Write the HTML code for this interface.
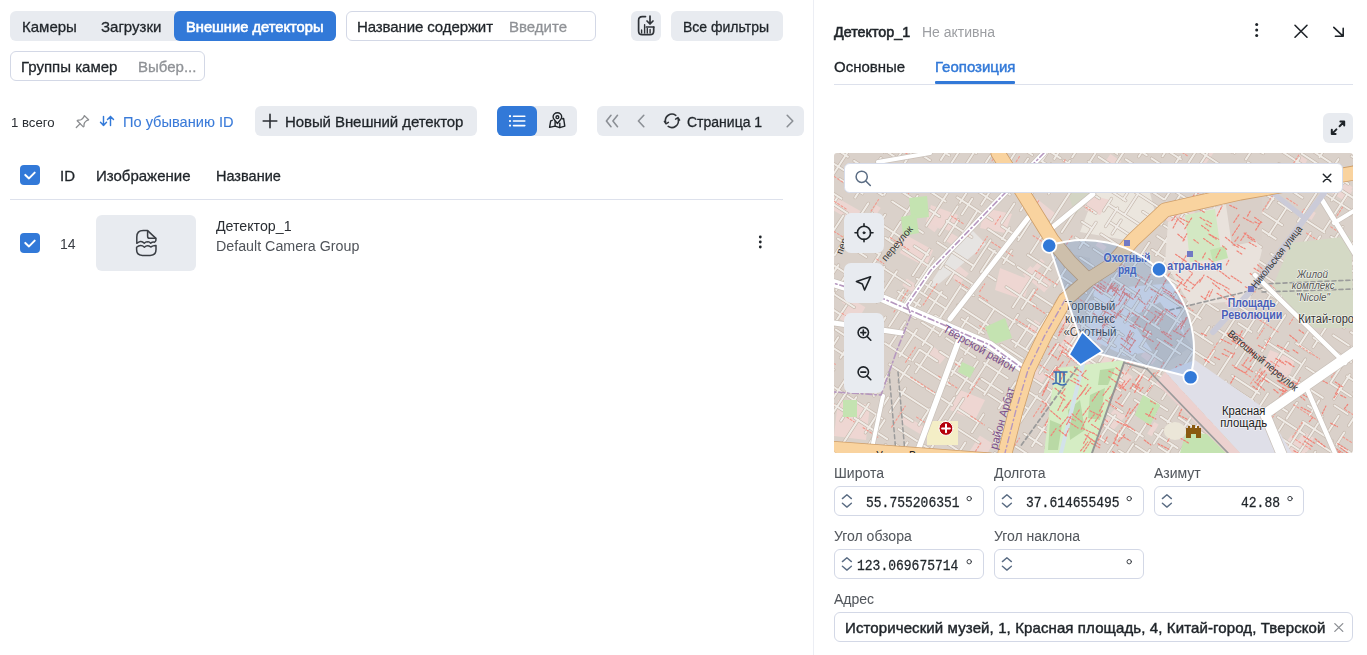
<!DOCTYPE html>
<html><head><meta charset="utf-8">
<style>
*{box-sizing:border-box;margin:0;padding:0}
html,body{width:1367px;height:655px;overflow:hidden;background:#fff}
body{position:relative;font-family:"Liberation Sans",sans-serif;color:#1f2429}
.a{position:absolute}
.t{position:absolute;white-space:pre;line-height:20px;font-size:15px;-webkit-text-stroke:0.3px currentColor;will-change:transform}
.s14{font-size:14px}
.s13{font-size:13px}
.ns{-webkit-text-stroke:0}
.g{background:#e8ebf0;border-radius:6px}
.bl{background:#3279d8}
.inp{position:absolute;border:1px solid #d3d8e6;border-radius:6px;background:#fff}
.gray{color:#8f9296}
.lbl{color:#53575d;font-size:14px;-webkit-text-stroke:0.05px currentColor}
.mono{position:absolute;white-space:pre;font-family:"Liberation Mono",monospace;font-size:13px;line-height:20px;color:#1f2429;-webkit-text-stroke:0.25px currentColor;will-change:transform;transform:scaleY(1.12);transform-origin:0 13px}
svg{position:absolute;overflow:visible}
</style></head><body>

<!-- LEFT PANE -->
<div class="a g" style="left:10px;top:11px;width:326px;height:30px"></div>
<div class="a bl" style="left:174px;top:11px;width:162px;height:30px;border-radius:6px"></div>
<div class="t" style="left:22px;top:17px">Камеры</div>
<div class="t" style="left:101px;top:17px">Загрузки</div>
<div class="t" style="left:185.5px;top:17px;color:#fff;font-size:14.7px;-webkit-text-stroke:0.6px #fff">Внешние детекторы</div>

<div class="inp" style="left:346px;top:11px;width:250px;height:30px"></div>
<div class="t" style="left:357px;top:17px;letter-spacing:-0.1px">Название содержит</div>
<div class="t gray" style="left:509px;top:17px">Введите</div>

<div class="a g" style="left:631px;top:11px;width:30px;height:30px"></div>
<div class="a g" style="left:671px;top:11px;width:112px;height:30px"></div>
<div class="t s14" style="left:683px;top:17px">Все фильтры</div>

<div class="inp" style="left:10px;top:51px;width:195px;height:30px"></div>
<div class="t" style="left:21px;top:57px">Группы камер</div>
<div class="t gray" style="left:138px;top:57px">Выбер...</div>

<div class="t s13 ns" style="left:11px;top:112.5px;color:#2a2e33;font-size:13.2px">1 всего</div>
<div class="t ns" style="left:122.5px;top:112px;font-size:14.6px;color:#3a7bd9;-webkit-text-stroke:0.1px currentColor">По убыванию ID</div>

<div class="a g" style="left:255px;top:106px;width:222px;height:30px"></div>
<div class="t" style="left:285px;top:112px;letter-spacing:-0.08px">Новый Внешний детектор</div>

<div class="a g" style="left:497px;top:106px;width:80px;height:30px"></div>
<div class="a bl" style="left:497px;top:106px;width:40px;height:30px;border-radius:6px"></div>

<div class="a g" style="left:597px;top:106px;width:207px;height:30px"></div>
<div class="t s14" style="left:687px;top:112px">Страница 1</div>

<!-- table -->
<div class="a bl" style="left:20px;top:165px;width:20px;height:20px;border-radius:4px"></div>
<div class="t" style="left:60px;top:166px">ID</div>
<div class="t" style="left:96px;top:166px">Изображение</div>
<div class="t" style="left:216px;top:166px;font-size:14.5px">Название</div>
<div class="a" style="left:10px;top:199px;width:773px;height:1px;background:#dde1ec"></div>

<div class="a bl" style="left:20px;top:233px;width:20px;height:20px;border-radius:4px"></div>
<div class="t s14 ns" style="left:60px;top:234px;color:#3a3e44">14</div>
<div class="a g" style="left:96px;top:215px;width:100px;height:56px"></div>
<div class="t s14 ns" style="left:216px;top:215.5px;color:#2a2e33;font-size:14.2px">Детектор_1</div>
<div class="t s14 ns" style="left:216px;top:236px;color:#4f5359;font-size:14.25px">Default Camera Group</div>

<!-- divider -->
<div class="a" style="left:813px;top:0;width:1px;height:655px;background:#eceef4"></div>

<!-- RIGHT PANE -->
<div class="t" style="left:834px;top:22px;font-size:14.3px;-webkit-text-stroke:0.6px currentColor">Детектор_1</div>
<div class="t s14 gray ns" style="left:922px;top:22px;color:#9c9ea2">Не активна</div>
<div class="t" style="left:834px;top:57px">Основные</div>
<div class="t" style="left:935px;top:57px;color:#3279d8;-webkit-text-stroke:0.45px currentColor">Геопозиция</div>
<div class="a bl" style="left:935px;top:81px;width:80px;height:3px;border-radius:1px"></div>
<div class="a" style="left:834px;top:84px;width:519px;height:1px;background:#dde1ec"></div>
<div class="a g" style="left:1323px;top:113px;width:30px;height:30px"></div>

<!-- MAP placeholder -->
<!-- MAP START -->
<svg width="519" height="300" viewBox="834 153 519 300" style="left:834px;top:153px" stroke-linecap="round" stroke-linejoin="round">
<defs><clipPath id="mc"><rect x="834" y="153" width="519" height="300" rx="3"/></clipPath></defs>
<g clip-path="url(#mc)">
<rect x="834" y="153" width="519" height="300" fill="#dad1ca"/>
<polygon points="1059.5,308.9 1083.8,323.5 1078.0,333.0 1053.8,318.3" fill="#ecd6d2"/>
<polygon points="1090.5,351.3 1103.5,329.4 1108.9,332.6 1095.9,354.5" fill="#ecd6d2"/>
<polygon points="1101.6,424.3 1115.9,407.6 1125.6,415.9 1111.3,432.6" fill="#ecd6d2"/>
<polygon points="1169.7,332.6 1179.7,338.3 1177.1,342.8 1167.1,337.1" fill="#ecd6d2"/>
<polygon points="925.7,225.8 930.8,218.8 939.7,225.3 934.6,232.3" fill="#ecd6d2"/>
<polygon points="930.8,216.9 942.8,225.1 939.9,229.3 928.0,221.1" fill="#ecd6d2"/>
<polygon points="963.6,460.6 979.8,435.4 993.2,444.0 977.0,469.2" fill="#ecd6d2"/>
<polygon points="944.3,240.1 949.1,231.8 962.1,239.4 957.2,247.6" fill="#ecd6d2"/>
<polygon points="985.0,164.9 992.2,169.3 984.9,181.2 977.8,176.8" fill="#ecd6d2"/>
<polygon points="1297.4,281.2 1321.4,298.5 1315.4,306.8 1291.5,289.5" fill="#ecd6d2"/>
<polygon points="934.1,347.0 945.8,357.0 939.9,363.9 928.2,353.9" fill="#ecd6d2"/>
<polygon points="1223.7,182.0 1234.7,189.6 1231.2,194.8 1220.1,187.2" fill="#ecd6d2"/>
<polygon points="1084.9,349.4 1094.9,356.2 1088.4,365.8 1078.4,359.0" fill="#ecd6d2"/>
<polygon points="1021.5,281.1 1041.0,258.6 1044.8,261.9 1025.3,284.3" fill="#ecd6d2"/>
<polygon points="834.3,196.2 860.4,211.0 854.0,222.1 828.0,207.4" fill="#ecd6d2"/>
<polygon points="902.3,285.3 906.8,278.5 917.6,285.6 913.1,292.5" fill="#ecd6d2"/>
<polygon points="864.3,223.4 876.4,205.0 880.8,207.9 868.7,226.2" fill="#ecd6d2"/>
<polygon points="1059.1,445.5 1068.7,429.5 1079.4,436.0 1069.7,451.9" fill="#ecd6d2"/>
<polygon points="905.0,415.3 927.3,428.7 923.0,435.7 900.7,422.4" fill="#ecd6d2"/>
<polygon points="1149.6,325.5 1163.2,306.9 1171.3,312.8 1157.7,331.5" fill="#ecd6d2"/>
<polygon points="1054.6,174.5 1061.6,180.0 1050.9,193.8 1043.9,188.3" fill="#ecd6d2"/>
<polygon points="1030.3,265.9 1051.6,283.9 1044.2,292.6 1022.9,274.6" fill="#ecd6d2"/>
<polygon points="1336.9,180.3 1352.6,190.2 1345.4,201.6 1329.7,191.7" fill="#ecd6d2"/>
<polygon points="1304.3,215.5 1308.7,208.4 1315.9,212.9 1311.5,220.0" fill="#ecd6d2"/>
<polygon points="854.8,224.8 871.3,235.6 861.6,250.4 845.1,239.6" fill="#ecd6d2"/>
<polygon points="1291.4,434.9 1309.6,448.1 1301.4,459.4 1283.2,446.2" fill="#ecd6d2"/>
<polygon points="1308.6,287.6 1322.5,295.4 1318.1,303.3 1304.2,295.5" fill="#ecd6d2"/>
<polygon points="1156.0,287.7 1176.9,299.7 1172.3,307.6 1151.5,295.6" fill="#ecd6d2"/>
<polygon points="1111.1,359.7 1132.8,377.1 1123.8,388.5 1102.0,371.1" fill="#ecd6d2"/>
<polygon points="1295.1,261.9 1310.0,244.3 1322.7,255.2 1307.8,272.8" fill="#ecd6d2"/>
<polygon points="841.8,302.3 846.6,295.6 857.7,303.6 852.8,310.3" fill="#ecd6d2"/>
<polygon points="1136.2,180.3 1149.7,162.9 1163.8,173.8 1150.3,191.3" fill="#ecd6d2"/>
<polygon points="1030.2,363.1 1047.2,375.1 1041.0,383.9 1024.0,371.9" fill="#ecd6d2"/>
<polygon points="1098.5,241.1 1106.6,246.7 1103.6,251.1 1095.5,245.4" fill="#ecd6d2"/>
<polygon points="1147.2,433.7 1154.2,422.0 1158.6,424.6 1151.7,436.3" fill="#ecd6d2"/>
<polygon points="1140.6,315.9 1154.7,295.7 1162.4,301.2 1148.3,321.3" fill="#ecd6d2"/>
<polygon points="958.3,265.0 968.8,273.6 960.3,283.8 949.9,275.2" fill="#ecd6d2"/>
<polygon points="1026.6,332.3 1034.8,319.8 1040.4,323.5 1032.2,336.0" fill="#ecd6d2"/>
<polygon points="1299.3,155.1 1307.4,159.9 1298.4,175.2 1290.3,170.4" fill="#ecd6d2"/>
<polygon points="1066.7,438.2 1082.6,417.2 1090.5,423.2 1074.7,444.2" fill="#ecd6d2"/>
<polygon points="1199.0,395.9 1217.4,407.5 1212.5,415.3 1194.1,403.6" fill="#ecd6d2"/>
<polygon points="1146.5,348.4 1157.9,356.9 1152.1,364.6 1140.8,356.1" fill="#ecd6d2"/>
<polygon points="1037.2,198.9 1056.7,214.4 1051.4,221.1 1031.9,205.5" fill="#ecd6d2"/>
<polygon points="1336.8,187.7 1343.5,179.8 1352.6,187.5 1345.9,195.4" fill="#ecd6d2"/>
<polygon points="1184.2,204.2 1198.8,215.6 1194.3,221.4 1179.7,210.0" fill="#ecd6d2"/>
<polygon points="1110.4,154.0 1121.2,161.2 1112.8,173.7 1102.0,166.5" fill="#ecd6d2"/>
<polygon points="1235.1,424.8 1240.2,416.2 1254.9,425.0 1249.9,433.5" fill="#ecd6d2"/>
<polygon points="1057.4,349.4 1073.3,326.3 1081.4,331.9 1065.5,355.0" fill="#ecd6d2"/>
<polygon points="1166.0,201.6 1186.3,214.1 1178.1,227.4 1157.8,214.9" fill="#ecd6d2"/>
<polygon points="1288.2,456.5 1303.9,431.5 1314.0,437.8 1298.3,462.8" fill="#ecd6d2"/>
<polygon points="1199.0,163.9 1210.1,148.3 1214.6,151.5 1203.4,167.1" fill="#ecd6d2"/>
<polygon points="1233.5,290.4 1240.6,295.2 1231.9,308.1 1224.8,303.2" fill="#ecd6d2"/>
<polygon points="839.0,318.5 850.9,298.7 865.4,307.3 853.6,327.2" fill="#ecd6d2"/>
<polygon points="1088.7,376.7 1104.2,355.3 1115.5,363.4 1100.0,384.9" fill="#ecd6d2"/>
<polygon points="1188.0,370.2 1202.4,380.4 1195.3,390.5 1180.9,380.3" fill="#ecd6d2"/>
<path d="M1068 193L1095 193L1075 215Z" fill="#d3d5c4"/>
<path d="M1095 193L1150 193L1155 212L1125 240L1080 232Z" fill="#ebe6de"/>
<path d="M968 226L986 244L940 283L926 290Z" fill="#e6e4e2"/>
<path d="M906 235L933 250L926 267L900 253Z" fill="#eed6d2"/>
<path d="M931 205L958 215L952 232L926 222Z" fill="#eed6d2"/>
<path d="M985 208L1012 214L1005 233L980 228Z" fill="#eed6d2"/>
<path d="M838 400L870 405L866 440L834 436Z" fill="#eed6d2"/>
<path d="M1000 268L1030 280L1024 300L995 290Z" fill="#eed6d2"/>
<path d="M960 390L985 400L975 420L950 410Z" fill="#eed6d2"/>
<path d="M1090 195L1110 200L1100 215L1085 210Z" fill="#eed6d2"/>
<path d="M1270 350L1295 360L1288 380L1262 370Z" fill="#eed6d2"/>
<path d="M1090 290L1175 283L1186 345L1125 356L1085 336Z" fill="#e6e4ea"/>
<path d="M1130 318L1160 302L1192 346L1162 366Z" fill="#d3cbc4"/>
<path d="M1062 252L1090 258L1094 300L1066 305Z" fill="#d3cbc4"/>
<path d="M797.1 126.1L811.6 103.8" stroke="#c4b6ab" stroke-width="3.2" fill="none"/>
<path d="M803.9 135.8L825.4 102.7" stroke="#c4b6ab" stroke-width="3.2" fill="none"/>
<path d="M818.3 133.1L835.7 106.4" stroke="#c4b6ab" stroke-width="3.2" fill="none"/>
<path d="M795.7 185.6L806.5 168.9" stroke="#c4b6ab" stroke-width="3.2" fill="none"/>
<path d="M815.8 154.7L824.3 141.5" stroke="#c4b6ab" stroke-width="3.2" fill="none"/>
<path d="M828.4 135.1L851.8 99.2" stroke="#c4b6ab" stroke-width="3.2" fill="none"/>
<path d="M808.7 181.8L827.5 152.8" stroke="#c4b6ab" stroke-width="3.2" fill="none"/>
<path d="M829.6 149.5L840.5 132.8" stroke="#c4b6ab" stroke-width="3.2" fill="none"/>
<path d="M846.0 124.3L859.5 103.6" stroke="#c4b6ab" stroke-width="3.2" fill="none"/>
<path d="M832.6 175.4L849.4 149.5" stroke="#c4b6ab" stroke-width="3.2" fill="none"/>
<path d="M867.8 121.3L873.8 112.0" stroke="#c4b6ab" stroke-width="3.2" fill="none"/>
<path d="M811.4 237.5L822.2 220.8" stroke="#c4b6ab" stroke-width="3.2" fill="none"/>
<path d="M824.7 217.0L836.9 198.2" stroke="#c4b6ab" stroke-width="3.2" fill="none"/>
<path d="M868.4 149.7L879.1 133.2" stroke="#c4b6ab" stroke-width="3.2" fill="none"/>
<path d="M799.0 283.9L821.7 249.0" stroke="#c4b6ab" stroke-width="3.2" fill="none"/>
<path d="M826.4 241.7L843.4 215.5" stroke="#c4b6ab" stroke-width="3.2" fill="none"/>
<path d="M855.1 197.6L861.1 188.3" stroke="#c4b6ab" stroke-width="3.2" fill="none"/>
<path d="M863.9 183.9L880.9 157.8" stroke="#c4b6ab" stroke-width="3.2" fill="none"/>
<path d="M884.4 152.4L901.2 126.6" stroke="#c4b6ab" stroke-width="3.2" fill="none"/>
<path d="M909.5 113.7L928.8 84.0" stroke="#c4b6ab" stroke-width="3.2" fill="none"/>
<path d="M805.5 300.1L825.4 269.4" stroke="#c4b6ab" stroke-width="3.2" fill="none"/>
<path d="M834.5 255.4L842.2 243.5" stroke="#c4b6ab" stroke-width="3.2" fill="none"/>
<path d="M848.8 233.4L868.3 203.4" stroke="#c4b6ab" stroke-width="3.2" fill="none"/>
<path d="M879.4 186.2L890.4 169.3" stroke="#c4b6ab" stroke-width="3.2" fill="none"/>
<path d="M897.2 158.8L917.7 127.3" stroke="#c4b6ab" stroke-width="3.2" fill="none"/>
<path d="M925.3 115.6L937.2 97.3" stroke="#c4b6ab" stroke-width="3.2" fill="none"/>
<path d="M830.2 277.7L838.5 265.0" stroke="#c4b6ab" stroke-width="3.2" fill="none"/>
<path d="M848.2 250.0L872.2 213.1" stroke="#c4b6ab" stroke-width="3.2" fill="none"/>
<path d="M884.1 194.7L897.6 174.0" stroke="#c4b6ab" stroke-width="3.2" fill="none"/>
<path d="M902.0 167.1L912.9 150.3" stroke="#c4b6ab" stroke-width="3.2" fill="none"/>
<path d="M921.4 137.2L930.1 123.9" stroke="#c4b6ab" stroke-width="3.2" fill="none"/>
<path d="M819.2 316.1L834.2 293.0" stroke="#c4b6ab" stroke-width="3.2" fill="none"/>
<path d="M836.2 289.9L848.3 271.4" stroke="#c4b6ab" stroke-width="3.2" fill="none"/>
<path d="M872.5 233.9L885.1 214.7" stroke="#c4b6ab" stroke-width="3.2" fill="none"/>
<path d="M941.5 127.8L948.4 117.1" stroke="#c4b6ab" stroke-width="3.2" fill="none"/>
<path d="M809.2 362.6L816.8 350.9" stroke="#c4b6ab" stroke-width="3.2" fill="none"/>
<path d="M819.1 347.4L826.3 336.3" stroke="#c4b6ab" stroke-width="3.2" fill="none"/>
<path d="M828.6 332.7L846.5 305.3" stroke="#c4b6ab" stroke-width="3.2" fill="none"/>
<path d="M857.3 288.5L864.1 278.1" stroke="#c4b6ab" stroke-width="3.2" fill="none"/>
<path d="M872.4 265.4L880.1 253.4" stroke="#c4b6ab" stroke-width="3.2" fill="none"/>
<path d="M889.6 238.9L900.7 221.7" stroke="#c4b6ab" stroke-width="3.2" fill="none"/>
<path d="M902.4 219.2L917.6 195.7" stroke="#c4b6ab" stroke-width="3.2" fill="none"/>
<path d="M928.6 178.8L937.0 165.8" stroke="#c4b6ab" stroke-width="3.2" fill="none"/>
<path d="M940.9 159.9L964.4 123.7" stroke="#c4b6ab" stroke-width="3.2" fill="none"/>
<path d="M968.1 117.9L980.3 99.2" stroke="#c4b6ab" stroke-width="3.2" fill="none"/>
<path d="M799.2 397.6L809.6 381.6" stroke="#c4b6ab" stroke-width="3.2" fill="none"/>
<path d="M815.5 372.5L822.8 361.3" stroke="#c4b6ab" stroke-width="3.2" fill="none"/>
<path d="M825.1 357.8L838.3 337.3" stroke="#c4b6ab" stroke-width="3.2" fill="none"/>
<path d="M863.7 298.4L884.2 266.8" stroke="#c4b6ab" stroke-width="3.2" fill="none"/>
<path d="M895.1 250.0L902.5 238.5" stroke="#c4b6ab" stroke-width="3.2" fill="none"/>
<path d="M908.4 229.4L914.4 220.2" stroke="#c4b6ab" stroke-width="3.2" fill="none"/>
<path d="M936.3 186.5L959.8 150.3" stroke="#c4b6ab" stroke-width="3.2" fill="none"/>
<path d="M966.3 140.4L986.4 109.4" stroke="#c4b6ab" stroke-width="3.2" fill="none"/>
<path d="M823.1 384.7L831.7 371.5" stroke="#c4b6ab" stroke-width="3.2" fill="none"/>
<path d="M840.5 357.8L857.0 332.4" stroke="#c4b6ab" stroke-width="3.2" fill="none"/>
<path d="M861.3 325.9L867.7 316.0" stroke="#c4b6ab" stroke-width="3.2" fill="none"/>
<path d="M876.8 302.0L896.8 271.2" stroke="#c4b6ab" stroke-width="3.2" fill="none"/>
<path d="M926.3 225.8L949.2 190.4" stroke="#c4b6ab" stroke-width="3.2" fill="none"/>
<path d="M953.8 183.4L975.9 149.3" stroke="#c4b6ab" stroke-width="3.2" fill="none"/>
<path d="M979.0 144.7L992.3 124.1" stroke="#c4b6ab" stroke-width="3.2" fill="none"/>
<path d="M800.4 448.4L821.7 415.7" stroke="#c4b6ab" stroke-width="3.2" fill="none"/>
<path d="M830.1 402.8L847.8 375.5" stroke="#c4b6ab" stroke-width="3.2" fill="none"/>
<path d="M851.8 369.3L857.4 360.6" stroke="#c4b6ab" stroke-width="3.2" fill="none"/>
<path d="M865.9 347.7L885.5 317.4" stroke="#c4b6ab" stroke-width="3.2" fill="none"/>
<path d="M892.3 306.9L903.6 289.5" stroke="#c4b6ab" stroke-width="3.2" fill="none"/>
<path d="M912.9 275.3L929.7 249.4" stroke="#c4b6ab" stroke-width="3.2" fill="none"/>
<path d="M939.2 234.8L957.7 206.3" stroke="#c4b6ab" stroke-width="3.2" fill="none"/>
<path d="M960.0 202.8L981.4 169.7" stroke="#c4b6ab" stroke-width="3.2" fill="none"/>
<path d="M984.6 164.8L990.3 156.0" stroke="#c4b6ab" stroke-width="3.2" fill="none"/>
<path d="M999.9 141.3L1014.1 119.5" stroke="#c4b6ab" stroke-width="3.2" fill="none"/>
<path d="M797.6 467.5L810.7 447.3" stroke="#c4b6ab" stroke-width="3.2" fill="none"/>
<path d="M817.0 437.6L823.0 428.5" stroke="#c4b6ab" stroke-width="3.2" fill="none"/>
<path d="M829.3 418.7L848.0 389.9" stroke="#c4b6ab" stroke-width="3.2" fill="none"/>
<path d="M889.2 326.5L909.7 294.9" stroke="#c4b6ab" stroke-width="3.2" fill="none"/>
<path d="M915.7 285.7L933.7 258.0" stroke="#c4b6ab" stroke-width="3.2" fill="none"/>
<path d="M944.4 241.4L958.3 220.0" stroke="#c4b6ab" stroke-width="3.2" fill="none"/>
<path d="M961.9 214.5L972.2 198.7" stroke="#c4b6ab" stroke-width="3.2" fill="none"/>
<path d="M980.8 185.4L990.0 171.3" stroke="#c4b6ab" stroke-width="3.2" fill="none"/>
<path d="M997.1 160.3L1009.5 141.2" stroke="#c4b6ab" stroke-width="3.2" fill="none"/>
<path d="M1012.1 137.2L1024.5 118.2" stroke="#c4b6ab" stroke-width="3.2" fill="none"/>
<path d="M1027.6 113.3L1033.2 104.8" stroke="#c4b6ab" stroke-width="3.2" fill="none"/>
<path d="M798.9 485.6L810.5 467.8" stroke="#c4b6ab" stroke-width="3.2" fill="none"/>
<path d="M821.0 451.6L832.3 434.2" stroke="#c4b6ab" stroke-width="3.2" fill="none"/>
<path d="M841.0 420.8L856.3 397.2" stroke="#c4b6ab" stroke-width="3.2" fill="none"/>
<path d="M858.8 393.4L881.7 358.1" stroke="#c4b6ab" stroke-width="3.2" fill="none"/>
<path d="M889.9 345.5L905.2 322.0" stroke="#c4b6ab" stroke-width="3.2" fill="none"/>
<path d="M911.6 312.0L920.0 299.2" stroke="#c4b6ab" stroke-width="3.2" fill="none"/>
<path d="M924.5 292.2L931.3 281.8" stroke="#c4b6ab" stroke-width="3.2" fill="none"/>
<path d="M939.9 268.5L950.9 251.6" stroke="#c4b6ab" stroke-width="3.2" fill="none"/>
<path d="M953.5 247.6L976.7 211.9" stroke="#c4b6ab" stroke-width="3.2" fill="none"/>
<path d="M981.3 204.7L993.3 186.2" stroke="#c4b6ab" stroke-width="3.2" fill="none"/>
<path d="M1004.8 168.6L1016.7 150.2" stroke="#c4b6ab" stroke-width="3.2" fill="none"/>
<path d="M1037.4 118.3L1049.1 100.3" stroke="#c4b6ab" stroke-width="3.2" fill="none"/>
<path d="M825.2 470.9L832.2 460.1" stroke="#c4b6ab" stroke-width="3.2" fill="none"/>
<path d="M840.3 447.6L858.3 419.9" stroke="#c4b6ab" stroke-width="3.2" fill="none"/>
<path d="M860.3 416.9L868.8 403.7" stroke="#c4b6ab" stroke-width="3.2" fill="none"/>
<path d="M873.9 395.9L889.1 372.6" stroke="#c4b6ab" stroke-width="3.2" fill="none"/>
<path d="M899.5 356.4L916.8 329.9" stroke="#c4b6ab" stroke-width="3.2" fill="none"/>
<path d="M927.2 313.9L941.7 291.5" stroke="#c4b6ab" stroke-width="3.2" fill="none"/>
<path d="M946.6 283.9L954.2 272.3" stroke="#c4b6ab" stroke-width="3.2" fill="none"/>
<path d="M1020.1 170.7L1028.1 158.5" stroke="#c4b6ab" stroke-width="3.2" fill="none"/>
<path d="M1037.4 144.1L1051.6 122.3" stroke="#c4b6ab" stroke-width="3.2" fill="none"/>
<path d="M1056.1 115.3L1069.4 94.8" stroke="#c4b6ab" stroke-width="3.2" fill="none"/>
<path d="M830.4 486.8L841.7 469.3" stroke="#c4b6ab" stroke-width="3.2" fill="none"/>
<path d="M845.9 462.8L853.5 451.2" stroke="#c4b6ab" stroke-width="3.2" fill="none"/>
<path d="M865.4 432.8L888.4 397.4" stroke="#c4b6ab" stroke-width="3.2" fill="none"/>
<path d="M898.7 381.6L909.0 365.7" stroke="#c4b6ab" stroke-width="3.2" fill="none"/>
<path d="M912.4 360.5L919.1 350.2" stroke="#c4b6ab" stroke-width="3.2" fill="none"/>
<path d="M922.5 344.9L937.3 322.1" stroke="#c4b6ab" stroke-width="3.2" fill="none"/>
<path d="M939.1 319.4L960.7 286.1" stroke="#c4b6ab" stroke-width="3.2" fill="none"/>
<path d="M971.2 270.0L990.5 240.2" stroke="#c4b6ab" stroke-width="3.2" fill="none"/>
<path d="M1001.6 223.1L1014.4 203.5" stroke="#c4b6ab" stroke-width="3.2" fill="none"/>
<path d="M1021.9 191.8L1028.1 182.4" stroke="#c4b6ab" stroke-width="3.2" fill="none"/>
<path d="M1032.4 175.7L1040.1 163.8" stroke="#c4b6ab" stroke-width="3.2" fill="none"/>
<path d="M1042.6 160.0L1055.1 140.8" stroke="#c4b6ab" stroke-width="3.2" fill="none"/>
<path d="M1066.6 123.0L1088.0 90.1" stroke="#c4b6ab" stroke-width="3.2" fill="none"/>
<path d="M843.4 483.5L857.8 461.5" stroke="#c4b6ab" stroke-width="3.2" fill="none"/>
<path d="M865.0 450.3L884.6 420.1" stroke="#c4b6ab" stroke-width="3.2" fill="none"/>
<path d="M889.9 412.1L905.3 388.4" stroke="#c4b6ab" stroke-width="3.2" fill="none"/>
<path d="M915.6 372.5L931.7 347.7" stroke="#c4b6ab" stroke-width="3.2" fill="none"/>
<path d="M939.6 335.5L951.0 317.9" stroke="#c4b6ab" stroke-width="3.2" fill="none"/>
<path d="M955.5 311.0L972.4 285.0" stroke="#c4b6ab" stroke-width="3.2" fill="none"/>
<path d="M980.7 272.2L994.7 250.7" stroke="#c4b6ab" stroke-width="3.2" fill="none"/>
<path d="M1002.1 239.2L1009.5 227.9" stroke="#c4b6ab" stroke-width="3.2" fill="none"/>
<path d="M1020.7 210.5L1035.7 187.5" stroke="#c4b6ab" stroke-width="3.2" fill="none"/>
<path d="M1040.4 180.3L1051.0 164.0" stroke="#c4b6ab" stroke-width="3.2" fill="none"/>
<path d="M1054.3 158.9L1077.1 123.8" stroke="#c4b6ab" stroke-width="3.2" fill="none"/>
<path d="M1079.5 120.0L1098.2 91.2" stroke="#c4b6ab" stroke-width="3.2" fill="none"/>
<path d="M854.7 492.2L861.3 482.1" stroke="#c4b6ab" stroke-width="3.2" fill="none"/>
<path d="M870.7 467.5L885.6 444.7" stroke="#c4b6ab" stroke-width="3.2" fill="none"/>
<path d="M961.1 328.3L968.2 317.4" stroke="#c4b6ab" stroke-width="3.2" fill="none"/>
<path d="M1003.4 263.2L1011.7 250.5" stroke="#c4b6ab" stroke-width="3.2" fill="none"/>
<path d="M1018.3 240.2L1037.1 211.3" stroke="#c4b6ab" stroke-width="3.2" fill="none"/>
<path d="M1048.7 193.6L1069.9 160.8" stroke="#c4b6ab" stroke-width="3.2" fill="none"/>
<path d="M1072.2 157.3L1095.0 122.1" stroke="#c4b6ab" stroke-width="3.2" fill="none"/>
<path d="M876.6 490.2L884.4 478.3" stroke="#c4b6ab" stroke-width="3.2" fill="none"/>
<path d="M887.5 473.4L907.6 442.4" stroke="#c4b6ab" stroke-width="3.2" fill="none"/>
<path d="M919.0 424.9L929.2 409.2" stroke="#c4b6ab" stroke-width="3.2" fill="none"/>
<path d="M933.9 402.0L948.5 379.6" stroke="#c4b6ab" stroke-width="3.2" fill="none"/>
<path d="M951.3 375.2L961.9 358.9" stroke="#c4b6ab" stroke-width="3.2" fill="none"/>
<path d="M965.0 354.1L972.5 342.6" stroke="#c4b6ab" stroke-width="3.2" fill="none"/>
<path d="M978.6 333.1L994.4 308.8" stroke="#c4b6ab" stroke-width="3.2" fill="none"/>
<path d="M1030.7 253.0L1044.2 232.1" stroke="#c4b6ab" stroke-width="3.2" fill="none"/>
<path d="M1045.9 229.6L1070.2 192.1" stroke="#c4b6ab" stroke-width="3.2" fill="none"/>
<path d="M1079.2 178.2L1100.1 146.0" stroke="#c4b6ab" stroke-width="3.2" fill="none"/>
<path d="M898.0 484.4L914.4 459.0" stroke="#c4b6ab" stroke-width="3.2" fill="none"/>
<path d="M936.2 425.4L954.3 397.5" stroke="#c4b6ab" stroke-width="3.2" fill="none"/>
<path d="M956.5 394.2L977.9 361.3" stroke="#c4b6ab" stroke-width="3.2" fill="none"/>
<path d="M985.7 349.3L995.6 334.0" stroke="#c4b6ab" stroke-width="3.2" fill="none"/>
<path d="M1013.0 307.2L1035.7 272.3" stroke="#c4b6ab" stroke-width="3.2" fill="none"/>
<path d="M1061.8 232.0L1076.5 209.5" stroke="#c4b6ab" stroke-width="3.2" fill="none"/>
<path d="M1116.4 148.0L1137.8 115.1" stroke="#c4b6ab" stroke-width="3.2" fill="none"/>
<path d="M925.2 457.7L937.2 439.1" stroke="#c4b6ab" stroke-width="3.2" fill="none"/>
<path d="M943.2 430.0L963.5 398.7" stroke="#c4b6ab" stroke-width="3.2" fill="none"/>
<path d="M970.2 388.4L992.5 354.0" stroke="#c4b6ab" stroke-width="3.2" fill="none"/>
<path d="M1003.8 336.7L1018.0 314.8" stroke="#c4b6ab" stroke-width="3.2" fill="none"/>
<path d="M1021.9 308.8L1034.2 289.9" stroke="#c4b6ab" stroke-width="3.2" fill="none"/>
<path d="M1038.9 282.6L1055.9 256.4" stroke="#c4b6ab" stroke-width="3.2" fill="none"/>
<path d="M1111.3 171.1L1128.6 144.4" stroke="#c4b6ab" stroke-width="3.2" fill="none"/>
<path d="M1136.4 132.5L1155.4 103.2" stroke="#c4b6ab" stroke-width="3.2" fill="none"/>
<path d="M936.9 467.5L944.4 455.9" stroke="#c4b6ab" stroke-width="3.2" fill="none"/>
<path d="M984.2 394.6L1008.4 357.2" stroke="#c4b6ab" stroke-width="3.2" fill="none"/>
<path d="M1015.2 346.8L1029.6 324.6" stroke="#c4b6ab" stroke-width="3.2" fill="none"/>
<path d="M1054.4 286.4L1069.9 262.6" stroke="#c4b6ab" stroke-width="3.2" fill="none"/>
<path d="M1079.3 248.1L1096.0 222.4" stroke="#c4b6ab" stroke-width="3.2" fill="none"/>
<path d="M1103.6 210.8L1111.5 198.5" stroke="#c4b6ab" stroke-width="3.2" fill="none"/>
<path d="M1120.7 184.4L1128.6 172.2" stroke="#c4b6ab" stroke-width="3.2" fill="none"/>
<path d="M1138.7 156.7L1158.7 125.9" stroke="#c4b6ab" stroke-width="3.2" fill="none"/>
<path d="M1164.3 117.2L1184.2 86.5" stroke="#c4b6ab" stroke-width="3.2" fill="none"/>
<path d="M933.3 491.9L942.0 478.5" stroke="#c4b6ab" stroke-width="3.2" fill="none"/>
<path d="M947.3 470.3L965.3 442.6" stroke="#c4b6ab" stroke-width="3.2" fill="none"/>
<path d="M972.0 432.3L983.6 414.3" stroke="#c4b6ab" stroke-width="3.2" fill="none"/>
<path d="M1026.5 348.4L1048.7 314.2" stroke="#c4b6ab" stroke-width="3.2" fill="none"/>
<path d="M1052.3 308.6L1067.9 284.5" stroke="#c4b6ab" stroke-width="3.2" fill="none"/>
<path d="M1105.6 226.5L1117.5 208.1" stroke="#c4b6ab" stroke-width="3.2" fill="none"/>
<path d="M1123.2 199.4L1141.7 171.0" stroke="#c4b6ab" stroke-width="3.2" fill="none"/>
<path d="M1155.9 149.1L1170.8 126.1" stroke="#c4b6ab" stroke-width="3.2" fill="none"/>
<path d="M998.8 408.5L1015.8 382.2" stroke="#c4b6ab" stroke-width="3.2" fill="none"/>
<path d="M1026.3 366.1L1038.9 346.6" stroke="#c4b6ab" stroke-width="3.2" fill="none"/>
<path d="M1041.7 342.3L1060.7 313.1" stroke="#c4b6ab" stroke-width="3.2" fill="none"/>
<path d="M1067.2 303.1L1079.6 284.0" stroke="#c4b6ab" stroke-width="3.2" fill="none"/>
<path d="M1112.2 233.8L1121.0 220.2" stroke="#c4b6ab" stroke-width="3.2" fill="none"/>
<path d="M1124.7 214.6L1137.5 194.8" stroke="#c4b6ab" stroke-width="3.2" fill="none"/>
<path d="M1144.1 184.7L1154.7 168.3" stroke="#c4b6ab" stroke-width="3.2" fill="none"/>
<path d="M1162.5 156.3L1172.2 141.5" stroke="#c4b6ab" stroke-width="3.2" fill="none"/>
<path d="M992.6 445.1L1006.9 423.1" stroke="#c4b6ab" stroke-width="3.2" fill="none"/>
<path d="M1039.5 373.0L1058.4 343.8" stroke="#c4b6ab" stroke-width="3.2" fill="none"/>
<path d="M1064.5 334.5L1075.0 318.2" stroke="#c4b6ab" stroke-width="3.2" fill="none"/>
<path d="M1081.0 309.0L1097.5 283.5" stroke="#c4b6ab" stroke-width="3.2" fill="none"/>
<path d="M1099.2 281.0L1121.7 246.4" stroke="#c4b6ab" stroke-width="3.2" fill="none"/>
<path d="M1159.6 188.0L1180.1 156.4" stroke="#c4b6ab" stroke-width="3.2" fill="none"/>
<path d="M1186.5 146.6L1209.8 110.6" stroke="#c4b6ab" stroke-width="3.2" fill="none"/>
<path d="M990.6 467.6L1013.4 432.5" stroke="#c4b6ab" stroke-width="3.2" fill="none"/>
<path d="M1019.6 423.0L1037.1 396.1" stroke="#c4b6ab" stroke-width="3.2" fill="none"/>
<path d="M1039.5 392.3L1056.0 366.9" stroke="#c4b6ab" stroke-width="3.2" fill="none"/>
<path d="M1065.8 351.8L1076.0 336.1" stroke="#c4b6ab" stroke-width="3.2" fill="none"/>
<path d="M1081.6 327.6L1095.0 306.9" stroke="#c4b6ab" stroke-width="3.2" fill="none"/>
<path d="M1106.2 289.6L1117.0 273.0" stroke="#c4b6ab" stroke-width="3.2" fill="none"/>
<path d="M1122.2 265.0L1130.7 251.9" stroke="#c4b6ab" stroke-width="3.2" fill="none"/>
<path d="M1164.9 199.2L1181.7 173.3" stroke="#c4b6ab" stroke-width="3.2" fill="none"/>
<path d="M1187.4 164.6L1203.4 139.9" stroke="#c4b6ab" stroke-width="3.2" fill="none"/>
<path d="M1206.9 134.6L1221.8 111.6" stroke="#c4b6ab" stroke-width="3.2" fill="none"/>
<path d="M989.3 488.8L1009.5 457.6" stroke="#c4b6ab" stroke-width="3.2" fill="none"/>
<path d="M1046.0 401.5L1062.8 375.6" stroke="#c4b6ab" stroke-width="3.2" fill="none"/>
<path d="M1073.7 358.8L1081.7 346.5" stroke="#c4b6ab" stroke-width="3.2" fill="none"/>
<path d="M1098.8 320.2L1121.8 284.7" stroke="#c4b6ab" stroke-width="3.2" fill="none"/>
<path d="M1130.2 271.8L1149.0 242.8" stroke="#c4b6ab" stroke-width="3.2" fill="none"/>
<path d="M1160.9 224.6L1180.0 195.2" stroke="#c4b6ab" stroke-width="3.2" fill="none"/>
<path d="M1186.1 185.7L1209.3 150.1" stroke="#c4b6ab" stroke-width="3.2" fill="none"/>
<path d="M1216.1 139.6L1224.3 127.0" stroke="#c4b6ab" stroke-width="3.2" fill="none"/>
<path d="M1005.7 486.8L1021.6 462.3" stroke="#c4b6ab" stroke-width="3.2" fill="none"/>
<path d="M1032.1 446.1L1054.5 411.6" stroke="#c4b6ab" stroke-width="3.2" fill="none"/>
<path d="M1058.7 405.2L1071.7 385.3" stroke="#c4b6ab" stroke-width="3.2" fill="none"/>
<path d="M1119.0 312.3L1130.7 294.4" stroke="#c4b6ab" stroke-width="3.2" fill="none"/>
<path d="M1156.0 255.4L1174.7 226.5" stroke="#c4b6ab" stroke-width="3.2" fill="none"/>
<path d="M1179.1 219.8L1196.3 193.3" stroke="#c4b6ab" stroke-width="3.2" fill="none"/>
<path d="M1201.7 184.9L1214.4 165.5" stroke="#c4b6ab" stroke-width="3.2" fill="none"/>
<path d="M1224.1 150.6L1245.2 118.0" stroke="#c4b6ab" stroke-width="3.2" fill="none"/>
<path d="M1054.8 429.7L1061.0 420.3" stroke="#c4b6ab" stroke-width="3.2" fill="none"/>
<path d="M1065.5 413.3L1079.4 391.9" stroke="#c4b6ab" stroke-width="3.2" fill="none"/>
<path d="M1090.0 375.6L1097.4 364.1" stroke="#c4b6ab" stroke-width="3.2" fill="none"/>
<path d="M1099.3 361.3L1118.6 331.6" stroke="#c4b6ab" stroke-width="3.2" fill="none"/>
<path d="M1124.9 321.9L1140.1 298.4" stroke="#c4b6ab" stroke-width="3.2" fill="none"/>
<path d="M1145.5 290.2L1151.7 280.6" stroke="#c4b6ab" stroke-width="3.2" fill="none"/>
<path d="M1163.2 262.9L1170.5 251.7" stroke="#c4b6ab" stroke-width="3.2" fill="none"/>
<path d="M1174.2 245.9L1189.3 222.6" stroke="#c4b6ab" stroke-width="3.2" fill="none"/>
<path d="M1198.7 208.2L1206.9 195.5" stroke="#c4b6ab" stroke-width="3.2" fill="none"/>
<path d="M1217.1 179.9L1225.2 167.4" stroke="#c4b6ab" stroke-width="3.2" fill="none"/>
<path d="M1234.5 153.0L1245.7 135.7" stroke="#c4b6ab" stroke-width="3.2" fill="none"/>
<path d="M1060.6 444.8L1077.9 418.0" stroke="#c4b6ab" stroke-width="3.2" fill="none"/>
<path d="M1084.7 407.6L1102.1 380.7" stroke="#c4b6ab" stroke-width="3.2" fill="none"/>
<path d="M1110.1 368.4L1132.8 333.5" stroke="#c4b6ab" stroke-width="3.2" fill="none"/>
<path d="M1143.6 316.9L1162.9 287.2" stroke="#c4b6ab" stroke-width="3.2" fill="none"/>
<path d="M1172.0 273.2L1186.8 250.4" stroke="#c4b6ab" stroke-width="3.2" fill="none"/>
<path d="M1191.1 243.7L1214.7 207.4" stroke="#c4b6ab" stroke-width="3.2" fill="none"/>
<path d="M1218.7 201.2L1240.1 168.3" stroke="#c4b6ab" stroke-width="3.2" fill="none"/>
<path d="M1245.9 159.4L1254.7 145.8" stroke="#c4b6ab" stroke-width="3.2" fill="none"/>
<path d="M1263.0 133.0L1275.2 114.2" stroke="#c4b6ab" stroke-width="3.2" fill="none"/>
<path d="M1054.8 478.6L1078.5 442.1" stroke="#c4b6ab" stroke-width="3.2" fill="none"/>
<path d="M1088.0 427.5L1107.2 397.9" stroke="#c4b6ab" stroke-width="3.2" fill="none"/>
<path d="M1110.1 393.5L1122.1 375.0" stroke="#c4b6ab" stroke-width="3.2" fill="none"/>
<path d="M1128.6 365.0L1135.4 354.5" stroke="#c4b6ab" stroke-width="3.2" fill="none"/>
<path d="M1141.5 345.1L1150.3 331.5" stroke="#c4b6ab" stroke-width="3.2" fill="none"/>
<path d="M1155.4 323.7L1161.3 314.7" stroke="#c4b6ab" stroke-width="3.2" fill="none"/>
<path d="M1173.0 296.7L1195.4 262.1" stroke="#c4b6ab" stroke-width="3.2" fill="none"/>
<path d="M1201.4 252.9L1215.0 231.9" stroke="#c4b6ab" stroke-width="3.2" fill="none"/>
<path d="M1221.9 221.3L1237.7 197.0" stroke="#c4b6ab" stroke-width="3.2" fill="none"/>
<path d="M1239.4 194.3L1258.4 165.1" stroke="#c4b6ab" stroke-width="3.2" fill="none"/>
<path d="M1268.8 149.1L1282.0 128.8" stroke="#c4b6ab" stroke-width="3.2" fill="none"/>
<path d="M1080.1 469.3L1092.2 450.7" stroke="#c4b6ab" stroke-width="3.2" fill="none"/>
<path d="M1100.4 438.0L1115.1 415.4" stroke="#c4b6ab" stroke-width="3.2" fill="none"/>
<path d="M1121.8 405.0L1129.7 392.9" stroke="#c4b6ab" stroke-width="3.2" fill="none"/>
<path d="M1136.1 383.1L1157.0 350.8" stroke="#c4b6ab" stroke-width="3.2" fill="none"/>
<path d="M1167.4 334.9L1191.2 298.1" stroke="#c4b6ab" stroke-width="3.2" fill="none"/>
<path d="M1194.9 292.5L1203.0 280.0" stroke="#c4b6ab" stroke-width="3.2" fill="none"/>
<path d="M1227.4 242.5L1236.8 227.9" stroke="#c4b6ab" stroke-width="3.2" fill="none"/>
<path d="M1240.9 221.7L1259.7 192.6" stroke="#c4b6ab" stroke-width="3.2" fill="none"/>
<path d="M1261.8 189.5L1277.3 165.6" stroke="#c4b6ab" stroke-width="3.2" fill="none"/>
<path d="M1090.5 479.7L1113.5 444.3" stroke="#c4b6ab" stroke-width="3.2" fill="none"/>
<path d="M1117.1 438.7L1134.3 412.2" stroke="#c4b6ab" stroke-width="3.2" fill="none"/>
<path d="M1144.0 397.3L1153.0 383.5" stroke="#c4b6ab" stroke-width="3.2" fill="none"/>
<path d="M1158.6 374.8L1182.5 338.1" stroke="#c4b6ab" stroke-width="3.2" fill="none"/>
<path d="M1190.8 325.2L1212.2 292.3" stroke="#c4b6ab" stroke-width="3.2" fill="none"/>
<path d="M1218.2 283.0L1239.6 250.1" stroke="#c4b6ab" stroke-width="3.2" fill="none"/>
<path d="M1248.7 236.1L1257.7 222.1" stroke="#c4b6ab" stroke-width="3.2" fill="none"/>
<path d="M1266.9 208.0L1277.4 191.8" stroke="#c4b6ab" stroke-width="3.2" fill="none"/>
<path d="M1281.7 185.3L1299.4 157.9" stroke="#c4b6ab" stroke-width="3.2" fill="none"/>
<path d="M1310.8 140.5L1325.4 117.9" stroke="#c4b6ab" stroke-width="3.2" fill="none"/>
<path d="M1120.1 464.0L1133.2 444.0" stroke="#c4b6ab" stroke-width="3.2" fill="none"/>
<path d="M1135.4 440.5L1156.6 407.9" stroke="#c4b6ab" stroke-width="3.2" fill="none"/>
<path d="M1162.2 399.2L1170.9 385.9" stroke="#c4b6ab" stroke-width="3.2" fill="none"/>
<path d="M1179.9 372.1L1192.7 352.4" stroke="#c4b6ab" stroke-width="3.2" fill="none"/>
<path d="M1202.3 337.5L1209.2 326.9" stroke="#c4b6ab" stroke-width="3.2" fill="none"/>
<path d="M1229.2 296.1L1244.3 272.8" stroke="#c4b6ab" stroke-width="3.2" fill="none"/>
<path d="M1268.8 235.1L1286.9 207.3" stroke="#c4b6ab" stroke-width="3.2" fill="none"/>
<path d="M1298.6 189.3L1305.3 178.9" stroke="#c4b6ab" stroke-width="3.2" fill="none"/>
<path d="M1319.5 157.1L1342.0 122.4" stroke="#c4b6ab" stroke-width="3.2" fill="none"/>
<path d="M1345.0 117.8L1369.2 80.6" stroke="#c4b6ab" stroke-width="3.2" fill="none"/>
<path d="M1134.3 473.6L1149.7 449.9" stroke="#c4b6ab" stroke-width="3.2" fill="none"/>
<path d="M1153.8 443.6L1162.9 429.6" stroke="#c4b6ab" stroke-width="3.2" fill="none"/>
<path d="M1167.5 422.4L1178.7 405.2" stroke="#c4b6ab" stroke-width="3.2" fill="none"/>
<path d="M1185.9 394.1L1193.6 382.2" stroke="#c4b6ab" stroke-width="3.2" fill="none"/>
<path d="M1204.5 365.4L1214.1 350.7" stroke="#c4b6ab" stroke-width="3.2" fill="none"/>
<path d="M1219.8 341.8L1239.5 311.5" stroke="#c4b6ab" stroke-width="3.2" fill="none"/>
<path d="M1250.5 294.6L1262.3 276.4" stroke="#c4b6ab" stroke-width="3.2" fill="none"/>
<path d="M1297.9 221.6L1319.2 188.8" stroke="#c4b6ab" stroke-width="3.2" fill="none"/>
<path d="M1327.5 176.0L1338.5 159.1" stroke="#c4b6ab" stroke-width="3.2" fill="none"/>
<path d="M1346.0 147.6L1369.3 111.7" stroke="#c4b6ab" stroke-width="3.2" fill="none"/>
<path d="M1166.3 455.0L1172.5 445.5" stroke="#c4b6ab" stroke-width="3.2" fill="none"/>
<path d="M1183.5 428.5L1204.4 396.4" stroke="#c4b6ab" stroke-width="3.2" fill="none"/>
<path d="M1210.7 386.7L1231.9 354.1" stroke="#c4b6ab" stroke-width="3.2" fill="none"/>
<path d="M1235.8 348.0L1255.6 317.5" stroke="#c4b6ab" stroke-width="3.2" fill="none"/>
<path d="M1266.3 301.0L1282.2 276.6" stroke="#c4b6ab" stroke-width="3.2" fill="none"/>
<path d="M1289.1 266.0L1310.6 232.9" stroke="#c4b6ab" stroke-width="3.2" fill="none"/>
<path d="M1331.6 200.5L1339.9 187.8" stroke="#c4b6ab" stroke-width="3.2" fill="none"/>
<path d="M1342.6 183.6L1354.7 165.0" stroke="#c4b6ab" stroke-width="3.2" fill="none"/>
<path d="M1356.6 162.0L1380.0 126.0" stroke="#c4b6ab" stroke-width="3.2" fill="none"/>
<path d="M1384.3 119.4L1393.8 104.8" stroke="#c4b6ab" stroke-width="3.2" fill="none"/>
<path d="M1177.0 456.8L1184.4 445.3" stroke="#c4b6ab" stroke-width="3.2" fill="none"/>
<path d="M1192.3 433.2L1203.3 416.3" stroke="#c4b6ab" stroke-width="3.2" fill="none"/>
<path d="M1205.9 412.3L1226.0 381.3" stroke="#c4b6ab" stroke-width="3.2" fill="none"/>
<path d="M1235.5 366.7L1247.1 348.8" stroke="#c4b6ab" stroke-width="3.2" fill="none"/>
<path d="M1258.2 331.7L1265.3 320.8" stroke="#c4b6ab" stroke-width="3.2" fill="none"/>
<path d="M1275.9 304.4L1289.9 282.9" stroke="#c4b6ab" stroke-width="3.2" fill="none"/>
<path d="M1298.7 269.3L1320.1 236.4" stroke="#c4b6ab" stroke-width="3.2" fill="none"/>
<path d="M1323.7 230.8L1346.7 195.4" stroke="#c4b6ab" stroke-width="3.2" fill="none"/>
<path d="M1185.5 468.8L1206.0 437.2" stroke="#c4b6ab" stroke-width="3.2" fill="none"/>
<path d="M1212.3 427.6L1224.4 408.9" stroke="#c4b6ab" stroke-width="3.2" fill="none"/>
<path d="M1250.5 368.7L1257.5 358.0" stroke="#c4b6ab" stroke-width="3.2" fill="none"/>
<path d="M1262.0 351.0L1285.3 315.1" stroke="#c4b6ab" stroke-width="3.2" fill="none"/>
<path d="M1294.1 301.6L1313.7 271.3" stroke="#c4b6ab" stroke-width="3.2" fill="none"/>
<path d="M1322.3 258.2L1342.7 226.7" stroke="#c4b6ab" stroke-width="3.2" fill="none"/>
<path d="M1350.1 215.4L1360.4 199.4" stroke="#c4b6ab" stroke-width="3.2" fill="none"/>
<path d="M1370.1 184.5L1377.4 173.3" stroke="#c4b6ab" stroke-width="3.2" fill="none"/>
<path d="M1385.5 160.8L1407.6 126.7" stroke="#c4b6ab" stroke-width="3.2" fill="none"/>
<path d="M1198.3 481.5L1207.6 467.1" stroke="#c4b6ab" stroke-width="3.2" fill="none"/>
<path d="M1218.8 449.8L1231.7 430.0" stroke="#c4b6ab" stroke-width="3.2" fill="none"/>
<path d="M1241.1 415.6L1264.1 380.2" stroke="#c4b6ab" stroke-width="3.2" fill="none"/>
<path d="M1274.3 364.4L1288.4 342.7" stroke="#c4b6ab" stroke-width="3.2" fill="none"/>
<path d="M1322.3 290.5L1336.7 268.3" stroke="#c4b6ab" stroke-width="3.2" fill="none"/>
<path d="M1347.3 252.0L1370.4 216.4" stroke="#c4b6ab" stroke-width="3.2" fill="none"/>
<path d="M1376.8 206.6L1382.9 197.1" stroke="#c4b6ab" stroke-width="3.2" fill="none"/>
<path d="M1212.2 479.4L1226.7 457.1" stroke="#c4b6ab" stroke-width="3.2" fill="none"/>
<path d="M1248.5 423.6L1268.0 393.4" stroke="#c4b6ab" stroke-width="3.2" fill="none"/>
<path d="M1299.6 344.9L1322.0 310.4" stroke="#c4b6ab" stroke-width="3.2" fill="none"/>
<path d="M1324.2 307.0L1332.6 294.1" stroke="#c4b6ab" stroke-width="3.2" fill="none"/>
<path d="M1342.0 279.6L1363.2 246.9" stroke="#c4b6ab" stroke-width="3.2" fill="none"/>
<path d="M1371.2 234.6L1394.7 198.5" stroke="#c4b6ab" stroke-width="3.2" fill="none"/>
<path d="M1223.5 485.3L1233.9 469.3" stroke="#c4b6ab" stroke-width="3.2" fill="none"/>
<path d="M1236.3 465.6L1251.6 442.1" stroke="#c4b6ab" stroke-width="3.2" fill="none"/>
<path d="M1261.5 426.8L1285.4 389.9" stroke="#c4b6ab" stroke-width="3.2" fill="none"/>
<path d="M1289.0 384.4L1305.4 359.2" stroke="#c4b6ab" stroke-width="3.2" fill="none"/>
<path d="M1313.2 347.2L1328.3 324.0" stroke="#c4b6ab" stroke-width="3.2" fill="none"/>
<path d="M1330.9 319.9L1351.5 288.2" stroke="#c4b6ab" stroke-width="3.2" fill="none"/>
<path d="M1353.9 284.5L1359.5 275.9" stroke="#c4b6ab" stroke-width="3.2" fill="none"/>
<path d="M1368.2 262.5L1379.3 245.4" stroke="#c4b6ab" stroke-width="3.2" fill="none"/>
<path d="M1381.8 241.5L1399.2 214.7" stroke="#c4b6ab" stroke-width="3.2" fill="none"/>
<path d="M1242.8 486.2L1252.8 470.7" stroke="#c4b6ab" stroke-width="3.2" fill="none"/>
<path d="M1255.5 466.6L1269.2 445.5" stroke="#c4b6ab" stroke-width="3.2" fill="none"/>
<path d="M1272.0 441.1L1283.6 423.3" stroke="#c4b6ab" stroke-width="3.2" fill="none"/>
<path d="M1286.7 418.6L1297.0 402.7" stroke="#c4b6ab" stroke-width="3.2" fill="none"/>
<path d="M1365.6 297.1L1385.1 267.0" stroke="#c4b6ab" stroke-width="3.2" fill="none"/>
<path d="M1284.6 453.6L1304.1 423.5" stroke="#c4b6ab" stroke-width="3.2" fill="none"/>
<path d="M1309.7 415.1L1319.2 400.4" stroke="#c4b6ab" stroke-width="3.2" fill="none"/>
<path d="M1330.6 382.8L1353.4 347.7" stroke="#c4b6ab" stroke-width="3.2" fill="none"/>
<path d="M1360.6 336.6L1384.8 299.4" stroke="#c4b6ab" stroke-width="3.2" fill="none"/>
<path d="M1388.5 293.7L1398.9 277.7" stroke="#c4b6ab" stroke-width="3.2" fill="none"/>
<path d="M1278.3 484.7L1293.7 461.1" stroke="#c4b6ab" stroke-width="3.2" fill="none"/>
<path d="M1299.1 452.7L1322.5 416.7" stroke="#c4b6ab" stroke-width="3.2" fill="none"/>
<path d="M1334.0 399.0L1349.7 374.9" stroke="#c4b6ab" stroke-width="3.2" fill="none"/>
<path d="M1361.2 357.2L1371.0 342.0" stroke="#c4b6ab" stroke-width="3.2" fill="none"/>
<path d="M1374.1 337.3L1381.5 325.8" stroke="#c4b6ab" stroke-width="3.2" fill="none"/>
<path d="M1387.2 317.1L1396.6 302.6" stroke="#c4b6ab" stroke-width="3.2" fill="none"/>
<path d="M1292.6 486.8L1298.4 477.8" stroke="#c4b6ab" stroke-width="3.2" fill="none"/>
<path d="M1301.6 473.0L1315.4 451.7" stroke="#c4b6ab" stroke-width="3.2" fill="none"/>
<path d="M1325.8 435.6L1338.7 415.8" stroke="#c4b6ab" stroke-width="3.2" fill="none"/>
<path d="M1354.2 391.9L1365.1 375.0" stroke="#c4b6ab" stroke-width="3.2" fill="none"/>
<path d="M1370.9 366.2L1394.1 330.5" stroke="#c4b6ab" stroke-width="3.2" fill="none"/>
<path d="M1321.9 467.0L1329.5 455.3" stroke="#c4b6ab" stroke-width="3.2" fill="none"/>
<path d="M1336.5 444.6L1344.3 432.5" stroke="#c4b6ab" stroke-width="3.2" fill="none"/>
<path d="M1348.7 425.7L1356.0 414.5" stroke="#c4b6ab" stroke-width="3.2" fill="none"/>
<path d="M1366.6 398.2L1382.6 373.5" stroke="#c4b6ab" stroke-width="3.2" fill="none"/>
<path d="M1392.3 358.6L1413.9 325.4" stroke="#c4b6ab" stroke-width="3.2" fill="none"/>
<path d="M1356.8 442.4L1372.0 419.0" stroke="#c4b6ab" stroke-width="3.2" fill="none"/>
<path d="M1380.1 406.6L1399.3 377.0" stroke="#c4b6ab" stroke-width="3.2" fill="none"/>
<path d="M1354.1 466.7L1374.1 436.0" stroke="#c4b6ab" stroke-width="3.2" fill="none"/>
<path d="M1377.9 430.1L1384.5 420.1" stroke="#c4b6ab" stroke-width="3.2" fill="none"/>
<path d="M1356.2 486.3L1367.6 468.7" stroke="#c4b6ab" stroke-width="3.2" fill="none"/>
<path d="M1371.0 463.5L1383.4 444.4" stroke="#c4b6ab" stroke-width="3.2" fill="none"/>
<path d="M1390.5 433.5L1406.3 409.2" stroke="#c4b6ab" stroke-width="3.2" fill="none"/>
<path d="M1387.4 465.1L1398.7 447.7" stroke="#c4b6ab" stroke-width="3.2" fill="none"/>
<path d="M1388.2 119.5L1424.2 142.9" stroke="#c4b6ab" stroke-width="3.2" fill="none"/>
<path d="M1383.3 128.2L1392.2 133.9" stroke="#c4b6ab" stroke-width="3.2" fill="none"/>
<path d="M1357.2 121.8L1372.1 131.5" stroke="#c4b6ab" stroke-width="3.2" fill="none"/>
<path d="M1382.5 138.3L1400.9 150.2" stroke="#c4b6ab" stroke-width="3.2" fill="none"/>
<path d="M1323.0 115.5L1341.4 127.4" stroke="#c4b6ab" stroke-width="3.2" fill="none"/>
<path d="M1349.1 132.4L1358.7 138.7" stroke="#c4b6ab" stroke-width="3.2" fill="none"/>
<path d="M1336.1 134.1L1351.0 143.8" stroke="#c4b6ab" stroke-width="3.2" fill="none"/>
<path d="M1356.8 147.5L1374.0 158.7" stroke="#c4b6ab" stroke-width="3.2" fill="none"/>
<path d="M1390.7 169.6L1400.9 176.2" stroke="#c4b6ab" stroke-width="3.2" fill="none"/>
<path d="M1320.6 136.1L1338.6 147.8" stroke="#c4b6ab" stroke-width="3.2" fill="none"/>
<path d="M1351.5 156.2L1381.7 175.8" stroke="#c4b6ab" stroke-width="3.2" fill="none"/>
<path d="M1256.2 114.3L1287.4 134.6" stroke="#c4b6ab" stroke-width="3.2" fill="none"/>
<path d="M1299.3 142.3L1330.6 162.6" stroke="#c4b6ab" stroke-width="3.2" fill="none"/>
<path d="M1338.8 168.0L1369.7 188.0" stroke="#c4b6ab" stroke-width="3.2" fill="none"/>
<path d="M1379.7 194.5L1388.6 200.3" stroke="#c4b6ab" stroke-width="3.2" fill="none"/>
<path d="M1253.9 122.6L1284.2 142.3" stroke="#c4b6ab" stroke-width="3.2" fill="none"/>
<path d="M1301.7 153.7L1327.2 170.2" stroke="#c4b6ab" stroke-width="3.2" fill="none"/>
<path d="M1338.3 177.4L1348.3 183.9" stroke="#c4b6ab" stroke-width="3.2" fill="none"/>
<path d="M1360.6 191.9L1394.5 213.9" stroke="#c4b6ab" stroke-width="3.2" fill="none"/>
<path d="M1274.3 146.6L1311.2 170.6" stroke="#c4b6ab" stroke-width="3.2" fill="none"/>
<path d="M1323.5 178.6L1353.6 198.1" stroke="#c4b6ab" stroke-width="3.2" fill="none"/>
<path d="M1357.3 200.6L1388.3 220.7" stroke="#c4b6ab" stroke-width="3.2" fill="none"/>
<path d="M1203.9 115.0L1230.9 132.6" stroke="#c4b6ab" stroke-width="3.2" fill="none"/>
<path d="M1248.7 144.1L1263.2 153.5" stroke="#c4b6ab" stroke-width="3.2" fill="none"/>
<path d="M1278.9 163.7L1306.9 181.9" stroke="#c4b6ab" stroke-width="3.2" fill="none"/>
<path d="M1323.9 193.0L1354.9 213.1" stroke="#c4b6ab" stroke-width="3.2" fill="none"/>
<path d="M1371.0 223.5L1396.4 240.1" stroke="#c4b6ab" stroke-width="3.2" fill="none"/>
<path d="M1218.4 143.2L1231.7 151.9" stroke="#c4b6ab" stroke-width="3.2" fill="none"/>
<path d="M1247.9 162.4L1261.7 171.3" stroke="#c4b6ab" stroke-width="3.2" fill="none"/>
<path d="M1270.2 176.8L1302.5 197.8" stroke="#c4b6ab" stroke-width="3.2" fill="none"/>
<path d="M1187.2 143.3L1222.1 166.0" stroke="#c4b6ab" stroke-width="3.2" fill="none"/>
<path d="M1237.7 176.1L1273.5 199.3" stroke="#c4b6ab" stroke-width="3.2" fill="none"/>
<path d="M1278.4 202.5L1291.4 211.0" stroke="#c4b6ab" stroke-width="3.2" fill="none"/>
<path d="M1304.5 219.4L1324.4 232.4" stroke="#c4b6ab" stroke-width="3.2" fill="none"/>
<path d="M1331.2 236.8L1355.1 252.3" stroke="#c4b6ab" stroke-width="3.2" fill="none"/>
<path d="M1371.6 263.0L1385.3 271.9" stroke="#c4b6ab" stroke-width="3.2" fill="none"/>
<path d="M1145.8 136.6L1180.9 159.4" stroke="#c4b6ab" stroke-width="3.2" fill="none"/>
<path d="M1188.1 164.1L1215.9 182.1" stroke="#c4b6ab" stroke-width="3.2" fill="none"/>
<path d="M1229.3 190.8L1247.0 202.3" stroke="#c4b6ab" stroke-width="3.2" fill="none"/>
<path d="M1256.0 208.2L1282.1 225.1" stroke="#c4b6ab" stroke-width="3.2" fill="none"/>
<path d="M1325.5 253.3L1358.6 274.8" stroke="#c4b6ab" stroke-width="3.2" fill="none"/>
<path d="M1368.1 281.0L1377.2 286.9" stroke="#c4b6ab" stroke-width="3.2" fill="none"/>
<path d="M1388.3 294.1L1399.4 301.3" stroke="#c4b6ab" stroke-width="3.2" fill="none"/>
<path d="M1113.5 133.6L1146.7 155.2" stroke="#c4b6ab" stroke-width="3.2" fill="none"/>
<path d="M1151.5 158.3L1178.0 175.5" stroke="#c4b6ab" stroke-width="3.2" fill="none"/>
<path d="M1194.4 186.1L1226.6 207.1" stroke="#c4b6ab" stroke-width="3.2" fill="none"/>
<path d="M1238.7 214.9L1275.7 238.9" stroke="#c4b6ab" stroke-width="3.2" fill="none"/>
<path d="M1292.7 250.0L1325.0 270.9" stroke="#c4b6ab" stroke-width="3.2" fill="none"/>
<path d="M1366.7 298.0L1378.8 305.9" stroke="#c4b6ab" stroke-width="3.2" fill="none"/>
<path d="M1384.2 309.4L1413.9 328.7" stroke="#c4b6ab" stroke-width="3.2" fill="none"/>
<path d="M1080.2 129.8L1117.4 153.9" stroke="#c4b6ab" stroke-width="3.2" fill="none"/>
<path d="M1125.8 159.4L1143.0 170.6" stroke="#c4b6ab" stroke-width="3.2" fill="none"/>
<path d="M1160.6 182.0L1188.1 199.8" stroke="#c4b6ab" stroke-width="3.2" fill="none"/>
<path d="M1203.5 209.8L1226.6 224.9" stroke="#c4b6ab" stroke-width="3.2" fill="none"/>
<path d="M1242.5 235.2L1261.0 247.2" stroke="#c4b6ab" stroke-width="3.2" fill="none"/>
<path d="M1271.3 253.9L1296.2 270.0" stroke="#c4b6ab" stroke-width="3.2" fill="none"/>
<path d="M1309.4 278.7L1342.1 299.9" stroke="#c4b6ab" stroke-width="3.2" fill="none"/>
<path d="M1358.5 310.5L1389.2 330.5" stroke="#c4b6ab" stroke-width="3.2" fill="none"/>
<path d="M1039.0 118.2L1063.7 134.3" stroke="#c4b6ab" stroke-width="3.2" fill="none"/>
<path d="M1098.5 156.9L1134.4 180.2" stroke="#c4b6ab" stroke-width="3.2" fill="none"/>
<path d="M1139.0 183.2L1163.6 199.2" stroke="#c4b6ab" stroke-width="3.2" fill="none"/>
<path d="M1179.2 209.3L1216.6 233.6" stroke="#c4b6ab" stroke-width="3.2" fill="none"/>
<path d="M1224.5 238.7L1237.9 247.4" stroke="#c4b6ab" stroke-width="3.2" fill="none"/>
<path d="M1252.8 257.1L1268.2 267.1" stroke="#c4b6ab" stroke-width="3.2" fill="none"/>
<path d="M1285.4 278.2L1303.5 290.0" stroke="#c4b6ab" stroke-width="3.2" fill="none"/>
<path d="M1351.3 321.0L1370.1 333.2" stroke="#c4b6ab" stroke-width="3.2" fill="none"/>
<path d="M1383.4 341.9L1414.5 362.1" stroke="#c4b6ab" stroke-width="3.2" fill="none"/>
<path d="M1045.5 133.8L1073.4 151.9" stroke="#c4b6ab" stroke-width="3.2" fill="none"/>
<path d="M1088.4 161.7L1125.0 185.5" stroke="#c4b6ab" stroke-width="3.2" fill="none"/>
<path d="M1132.2 190.1L1159.8 208.0" stroke="#c4b6ab" stroke-width="3.2" fill="none"/>
<path d="M1171.3 215.5L1182.2 222.6" stroke="#c4b6ab" stroke-width="3.2" fill="none"/>
<path d="M1186.4 225.3L1195.6 231.3" stroke="#c4b6ab" stroke-width="3.2" fill="none"/>
<path d="M1210.1 240.7L1235.0 256.9" stroke="#c4b6ab" stroke-width="3.2" fill="none"/>
<path d="M1241.7 261.2L1277.6 284.5" stroke="#c4b6ab" stroke-width="3.2" fill="none"/>
<path d="M1320.3 312.3L1344.2 327.8" stroke="#c4b6ab" stroke-width="3.2" fill="none"/>
<path d="M1350.9 332.2L1384.7 354.1" stroke="#c4b6ab" stroke-width="3.2" fill="none"/>
<path d="M1026.3 136.1L1039.2 144.4" stroke="#c4b6ab" stroke-width="3.2" fill="none"/>
<path d="M1042.8 146.8L1060.6 158.3" stroke="#c4b6ab" stroke-width="3.2" fill="none"/>
<path d="M1063.9 160.5L1090.0 177.4" stroke="#c4b6ab" stroke-width="3.2" fill="none"/>
<path d="M1107.1 188.5L1125.7 200.6" stroke="#c4b6ab" stroke-width="3.2" fill="none"/>
<path d="M1142.8 211.7L1155.6 220.0" stroke="#c4b6ab" stroke-width="3.2" fill="none"/>
<path d="M1164.0 225.5L1193.3 244.5" stroke="#c4b6ab" stroke-width="3.2" fill="none"/>
<path d="M1206.6 253.1L1216.3 259.4" stroke="#c4b6ab" stroke-width="3.2" fill="none"/>
<path d="M1226.9 266.3L1250.3 281.5" stroke="#c4b6ab" stroke-width="3.2" fill="none"/>
<path d="M1256.4 285.5L1290.8 307.8" stroke="#c4b6ab" stroke-width="3.2" fill="none"/>
<path d="M1333.2 335.3L1348.8 345.5" stroke="#c4b6ab" stroke-width="3.2" fill="none"/>
<path d="M1351.8 347.4L1362.7 354.5" stroke="#c4b6ab" stroke-width="3.2" fill="none"/>
<path d="M974.8 117.6L1003.0 136.0" stroke="#c4b6ab" stroke-width="3.2" fill="none"/>
<path d="M1019.0 146.3L1032.3 155.0" stroke="#c4b6ab" stroke-width="3.2" fill="none"/>
<path d="M1037.8 158.6L1068.4 178.4" stroke="#c4b6ab" stroke-width="3.2" fill="none"/>
<path d="M1076.8 183.9L1099.4 198.5" stroke="#c4b6ab" stroke-width="3.2" fill="none"/>
<path d="M1109.0 204.8L1146.4 229.1" stroke="#c4b6ab" stroke-width="3.2" fill="none"/>
<path d="M1157.2 236.1L1171.3 245.3" stroke="#c4b6ab" stroke-width="3.2" fill="none"/>
<path d="M1174.0 247.0L1187.6 255.8" stroke="#c4b6ab" stroke-width="3.2" fill="none"/>
<path d="M1194.0 260.0L1226.7 281.2" stroke="#c4b6ab" stroke-width="3.2" fill="none"/>
<path d="M1313.5 337.6L1351.0 361.9" stroke="#c4b6ab" stroke-width="3.2" fill="none"/>
<path d="M947.8 117.0L978.7 137.1" stroke="#c4b6ab" stroke-width="3.2" fill="none"/>
<path d="M993.1 146.4L1005.7 154.6" stroke="#c4b6ab" stroke-width="3.2" fill="none"/>
<path d="M1085.3 206.3L1095.9 213.2" stroke="#c4b6ab" stroke-width="3.2" fill="none"/>
<path d="M1110.5 222.7L1133.9 237.9" stroke="#c4b6ab" stroke-width="3.2" fill="none"/>
<path d="M1152.0 249.7L1170.8 261.8" stroke="#c4b6ab" stroke-width="3.2" fill="none"/>
<path d="M1212.6 289.0L1222.4 295.4" stroke="#c4b6ab" stroke-width="3.2" fill="none"/>
<path d="M1225.0 297.1L1253.9 315.8" stroke="#c4b6ab" stroke-width="3.2" fill="none"/>
<path d="M1296.1 343.2L1310.9 352.8" stroke="#c4b6ab" stroke-width="3.2" fill="none"/>
<path d="M1347.0 376.3L1356.2 382.2" stroke="#c4b6ab" stroke-width="3.2" fill="none"/>
<path d="M1369.3 390.8L1381.1 398.4" stroke="#c4b6ab" stroke-width="3.2" fill="none"/>
<path d="M935.3 126.6L950.2 136.2" stroke="#c4b6ab" stroke-width="3.2" fill="none"/>
<path d="M962.8 144.4L976.3 153.2" stroke="#c4b6ab" stroke-width="3.2" fill="none"/>
<path d="M992.0 163.4L1013.2 177.2" stroke="#c4b6ab" stroke-width="3.2" fill="none"/>
<path d="M1082.0 221.8L1091.0 227.7" stroke="#c4b6ab" stroke-width="3.2" fill="none"/>
<path d="M1101.0 234.2L1128.3 251.9" stroke="#c4b6ab" stroke-width="3.2" fill="none"/>
<path d="M1146.0 263.4L1180.2 285.6" stroke="#c4b6ab" stroke-width="3.2" fill="none"/>
<path d="M1189.6 291.8L1218.3 310.3" stroke="#c4b6ab" stroke-width="3.2" fill="none"/>
<path d="M1238.4 323.4L1251.5 331.9" stroke="#c4b6ab" stroke-width="3.2" fill="none"/>
<path d="M1265.3 340.9L1300.4 363.7" stroke="#c4b6ab" stroke-width="3.2" fill="none"/>
<path d="M1306.3 367.5L1320.8 376.9" stroke="#c4b6ab" stroke-width="3.2" fill="none"/>
<path d="M1330.5 383.2L1351.0 396.5" stroke="#c4b6ab" stroke-width="3.2" fill="none"/>
<path d="M1360.9 403.0L1391.8 423.0" stroke="#c4b6ab" stroke-width="3.2" fill="none"/>
<path d="M890.2 117.0L920.5 136.7" stroke="#c4b6ab" stroke-width="3.2" fill="none"/>
<path d="M937.4 147.7L949.3 155.4" stroke="#c4b6ab" stroke-width="3.2" fill="none"/>
<path d="M966.0 166.3L978.9 174.6" stroke="#c4b6ab" stroke-width="3.2" fill="none"/>
<path d="M987.9 180.5L1009.9 194.7" stroke="#c4b6ab" stroke-width="3.2" fill="none"/>
<path d="M1075.6 237.4L1088.8 246.0" stroke="#c4b6ab" stroke-width="3.2" fill="none"/>
<path d="M1093.5 249.0L1107.7 258.3" stroke="#c4b6ab" stroke-width="3.2" fill="none"/>
<path d="M1120.8 266.8L1157.2 290.4" stroke="#c4b6ab" stroke-width="3.2" fill="none"/>
<path d="M1163.8 294.7L1200.7 318.7" stroke="#c4b6ab" stroke-width="3.2" fill="none"/>
<path d="M1213.9 327.2L1247.8 349.3" stroke="#c4b6ab" stroke-width="3.2" fill="none"/>
<path d="M1289.2 376.1L1322.8 397.9" stroke="#c4b6ab" stroke-width="3.2" fill="none"/>
<path d="M1334.5 405.5L1347.6 414.0" stroke="#c4b6ab" stroke-width="3.2" fill="none"/>
<path d="M1359.1 421.5L1392.9 443.5" stroke="#c4b6ab" stroke-width="3.2" fill="none"/>
<path d="M907.7 145.8L930.1 160.3" stroke="#c4b6ab" stroke-width="3.2" fill="none"/>
<path d="M966.5 184.0L995.0 202.5" stroke="#c4b6ab" stroke-width="3.2" fill="none"/>
<path d="M1045.7 235.5L1069.6 251.0" stroke="#c4b6ab" stroke-width="3.2" fill="none"/>
<path d="M1080.1 257.7L1093.5 266.5" stroke="#c4b6ab" stroke-width="3.2" fill="none"/>
<path d="M1111.8 278.4L1139.3 296.2" stroke="#c4b6ab" stroke-width="3.2" fill="none"/>
<path d="M1148.9 302.4L1184.5 325.6" stroke="#c4b6ab" stroke-width="3.2" fill="none"/>
<path d="M1194.2 331.9L1212.6 343.8" stroke="#c4b6ab" stroke-width="3.2" fill="none"/>
<path d="M1256.1 372.1L1293.1 396.1" stroke="#c4b6ab" stroke-width="3.2" fill="none"/>
<path d="M1307.8 405.6L1321.8 414.7" stroke="#c4b6ab" stroke-width="3.2" fill="none"/>
<path d="M842.4 122.8L857.0 132.3" stroke="#c4b6ab" stroke-width="3.2" fill="none"/>
<path d="M884.7 150.3L898.3 159.1" stroke="#c4b6ab" stroke-width="3.2" fill="none"/>
<path d="M916.4 170.8L941.4 187.1" stroke="#c4b6ab" stroke-width="3.2" fill="none"/>
<path d="M957.2 197.3L992.2 220.1" stroke="#c4b6ab" stroke-width="3.2" fill="none"/>
<path d="M1002.0 226.4L1019.1 237.5" stroke="#c4b6ab" stroke-width="3.2" fill="none"/>
<path d="M1084.3 279.9L1111.1 297.2" stroke="#c4b6ab" stroke-width="3.2" fill="none"/>
<path d="M1125.4 306.6L1159.5 328.7" stroke="#c4b6ab" stroke-width="3.2" fill="none"/>
<path d="M1177.2 340.2L1214.0 364.1" stroke="#c4b6ab" stroke-width="3.2" fill="none"/>
<path d="M1232.2 375.9L1259.4 393.6" stroke="#c4b6ab" stroke-width="3.2" fill="none"/>
<path d="M1275.6 404.1L1287.1 411.6" stroke="#c4b6ab" stroke-width="3.2" fill="none"/>
<path d="M1303.0 421.9L1332.3 440.9" stroke="#c4b6ab" stroke-width="3.2" fill="none"/>
<path d="M1339.8 445.8L1356.6 456.7" stroke="#c4b6ab" stroke-width="3.2" fill="none"/>
<path d="M1384.3 474.7L1420.8 498.4" stroke="#c4b6ab" stroke-width="3.2" fill="none"/>
<path d="M895.6 169.1L918.9 184.2" stroke="#c4b6ab" stroke-width="3.2" fill="none"/>
<path d="M925.9 188.7L945.6 201.5" stroke="#c4b6ab" stroke-width="3.2" fill="none"/>
<path d="M988.1 229.2L1010.3 243.6" stroke="#c4b6ab" stroke-width="3.2" fill="none"/>
<path d="M1027.9 255.0L1050.7 269.8" stroke="#c4b6ab" stroke-width="3.2" fill="none"/>
<path d="M1059.7 275.7L1086.5 293.0" stroke="#c4b6ab" stroke-width="3.2" fill="none"/>
<path d="M1094.6 298.3L1106.4 306.0" stroke="#c4b6ab" stroke-width="3.2" fill="none"/>
<path d="M1121.2 315.5L1150.8 334.8" stroke="#c4b6ab" stroke-width="3.2" fill="none"/>
<path d="M1157.2 339.0L1180.1 353.8" stroke="#c4b6ab" stroke-width="3.2" fill="none"/>
<path d="M1196.8 364.7L1207.2 371.4" stroke="#c4b6ab" stroke-width="3.2" fill="none"/>
<path d="M1215.7 377.0L1253.4 401.4" stroke="#c4b6ab" stroke-width="3.2" fill="none"/>
<path d="M1277.8 417.2L1304.7 434.7" stroke="#c4b6ab" stroke-width="3.2" fill="none"/>
<path d="M1317.3 442.9L1346.4 461.8" stroke="#c4b6ab" stroke-width="3.2" fill="none"/>
<path d="M1358.6 469.7L1394.3 492.9" stroke="#c4b6ab" stroke-width="3.2" fill="none"/>
<path d="M811.3 133.0L847.9 156.8" stroke="#c4b6ab" stroke-width="3.2" fill="none"/>
<path d="M854.1 160.8L877.0 175.7" stroke="#c4b6ab" stroke-width="3.2" fill="none"/>
<path d="M889.9 184.0L913.1 199.2" stroke="#c4b6ab" stroke-width="3.2" fill="none"/>
<path d="M930.0 210.1L939.5 216.3" stroke="#c4b6ab" stroke-width="3.2" fill="none"/>
<path d="M946.7 220.9L971.7 237.2" stroke="#c4b6ab" stroke-width="3.2" fill="none"/>
<path d="M988.8 248.3L1014.1 264.7" stroke="#c4b6ab" stroke-width="3.2" fill="none"/>
<path d="M1017.8 267.1L1046.8 286.0" stroke="#c4b6ab" stroke-width="3.2" fill="none"/>
<path d="M1060.8 295.0L1075.5 304.6" stroke="#c4b6ab" stroke-width="3.2" fill="none"/>
<path d="M1087.0 312.0L1123.1 335.5" stroke="#c4b6ab" stroke-width="3.2" fill="none"/>
<path d="M1140.2 346.6L1161.9 360.7" stroke="#c4b6ab" stroke-width="3.2" fill="none"/>
<path d="M1176.2 370.0L1189.7 378.7" stroke="#c4b6ab" stroke-width="3.2" fill="none"/>
<path d="M1202.0 386.8L1217.2 396.6" stroke="#c4b6ab" stroke-width="3.2" fill="none"/>
<path d="M1221.9 399.7L1250.0 417.9" stroke="#c4b6ab" stroke-width="3.2" fill="none"/>
<path d="M1265.0 427.6L1273.8 433.3" stroke="#c4b6ab" stroke-width="3.2" fill="none"/>
<path d="M1278.5 436.4L1298.6 449.5" stroke="#c4b6ab" stroke-width="3.2" fill="none"/>
<path d="M1305.9 454.2L1335.5 473.4" stroke="#c4b6ab" stroke-width="3.2" fill="none"/>
<path d="M1348.1 481.6L1369.8 495.7" stroke="#c4b6ab" stroke-width="3.2" fill="none"/>
<path d="M833.6 163.5L854.7 177.2" stroke="#c4b6ab" stroke-width="3.2" fill="none"/>
<path d="M866.3 184.7L882.4 195.2" stroke="#c4b6ab" stroke-width="3.2" fill="none"/>
<path d="M892.2 201.5L907.7 211.6" stroke="#c4b6ab" stroke-width="3.2" fill="none"/>
<path d="M1034.3 293.8L1054.9 307.2" stroke="#c4b6ab" stroke-width="3.2" fill="none"/>
<path d="M1059.0 309.8L1096.5 334.2" stroke="#c4b6ab" stroke-width="3.2" fill="none"/>
<path d="M1102.9 338.3L1115.1 346.3" stroke="#c4b6ab" stroke-width="3.2" fill="none"/>
<path d="M1120.7 349.9L1146.0 366.3" stroke="#c4b6ab" stroke-width="3.2" fill="none"/>
<path d="M1156.7 373.3L1190.6 395.3" stroke="#c4b6ab" stroke-width="3.2" fill="none"/>
<path d="M1199.3 401.0L1219.7 414.2" stroke="#c4b6ab" stroke-width="3.2" fill="none"/>
<path d="M1230.7 421.3L1265.9 444.2" stroke="#c4b6ab" stroke-width="3.2" fill="none"/>
<path d="M1277.5 451.7L1311.8 474.0" stroke="#c4b6ab" stroke-width="3.2" fill="none"/>
<path d="M1323.4 481.6L1337.3 490.5" stroke="#c4b6ab" stroke-width="3.2" fill="none"/>
<path d="M839.9 179.0L862.6 193.7" stroke="#c4b6ab" stroke-width="3.2" fill="none"/>
<path d="M908.4 223.5L922.9 232.9" stroke="#c4b6ab" stroke-width="3.2" fill="none"/>
<path d="M937.5 242.4L973.6 265.8" stroke="#c4b6ab" stroke-width="3.2" fill="none"/>
<path d="M982.2 271.4L995.6 280.1" stroke="#c4b6ab" stroke-width="3.2" fill="none"/>
<path d="M1006.2 287.0L1035.1 305.7" stroke="#c4b6ab" stroke-width="3.2" fill="none"/>
<path d="M1047.2 313.6L1058.6 321.0" stroke="#c4b6ab" stroke-width="3.2" fill="none"/>
<path d="M1075.4 331.9L1087.5 339.8" stroke="#c4b6ab" stroke-width="3.2" fill="none"/>
<path d="M1132.8 369.2L1165.6 390.5" stroke="#c4b6ab" stroke-width="3.2" fill="none"/>
<path d="M1185.8 403.6L1209.3 418.9" stroke="#c4b6ab" stroke-width="3.2" fill="none"/>
<path d="M1212.3 420.8L1230.6 432.7" stroke="#c4b6ab" stroke-width="3.2" fill="none"/>
<path d="M1245.5 442.4L1264.7 454.9" stroke="#c4b6ab" stroke-width="3.2" fill="none"/>
<path d="M1273.2 460.4L1292.6 473.0" stroke="#c4b6ab" stroke-width="3.2" fill="none"/>
<path d="M1299.9 477.7L1312.2 485.7" stroke="#c4b6ab" stroke-width="3.2" fill="none"/>
<path d="M800.3 171.9L828.6 190.3" stroke="#c4b6ab" stroke-width="3.2" fill="none"/>
<path d="M832.9 193.2L841.4 198.7" stroke="#c4b6ab" stroke-width="3.2" fill="none"/>
<path d="M871.5 218.2L899.6 236.4" stroke="#c4b6ab" stroke-width="3.2" fill="none"/>
<path d="M914.4 246.1L928.0 254.9" stroke="#c4b6ab" stroke-width="3.2" fill="none"/>
<path d="M945.4 266.2L973.5 284.5" stroke="#c4b6ab" stroke-width="3.2" fill="none"/>
<path d="M1027.3 319.4L1056.4 338.3" stroke="#c4b6ab" stroke-width="3.2" fill="none"/>
<path d="M1065.8 344.4L1095.1 363.4" stroke="#c4b6ab" stroke-width="3.2" fill="none"/>
<path d="M1110.3 373.3L1123.1 381.6" stroke="#c4b6ab" stroke-width="3.2" fill="none"/>
<path d="M1132.6 387.8L1167.2 410.2" stroke="#c4b6ab" stroke-width="3.2" fill="none"/>
<path d="M1178.7 417.7L1204.5 434.5" stroke="#c4b6ab" stroke-width="3.2" fill="none"/>
<path d="M1219.3 444.1L1229.0 450.4" stroke="#c4b6ab" stroke-width="3.2" fill="none"/>
<path d="M1274.0 479.6L1310.4 503.2" stroke="#c4b6ab" stroke-width="3.2" fill="none"/>
<path d="M801.9 183.7L827.1 200.1" stroke="#c4b6ab" stroke-width="3.2" fill="none"/>
<path d="M833.7 204.4L847.1 213.1" stroke="#c4b6ab" stroke-width="3.2" fill="none"/>
<path d="M856.1 218.9L868.1 226.7" stroke="#c4b6ab" stroke-width="3.2" fill="none"/>
<path d="M885.3 237.9L896.0 244.9" stroke="#c4b6ab" stroke-width="3.2" fill="none"/>
<path d="M903.0 249.4L930.5 267.3" stroke="#c4b6ab" stroke-width="3.2" fill="none"/>
<path d="M962.2 287.8L973.7 295.3" stroke="#c4b6ab" stroke-width="3.2" fill="none"/>
<path d="M979.3 298.9L1014.8 322.0" stroke="#c4b6ab" stroke-width="3.2" fill="none"/>
<path d="M1018.1 324.2L1047.5 343.2" stroke="#c4b6ab" stroke-width="3.2" fill="none"/>
<path d="M1061.0 352.0L1087.0 368.9" stroke="#c4b6ab" stroke-width="3.2" fill="none"/>
<path d="M1104.3 380.1L1120.6 390.7" stroke="#c4b6ab" stroke-width="3.2" fill="none"/>
<path d="M1134.7 399.9L1155.6 413.4" stroke="#c4b6ab" stroke-width="3.2" fill="none"/>
<path d="M1160.6 416.7L1187.4 434.1" stroke="#c4b6ab" stroke-width="3.2" fill="none"/>
<path d="M1203.5 444.5L1217.2 453.4" stroke="#c4b6ab" stroke-width="3.2" fill="none"/>
<path d="M1230.5 462.1L1256.2 478.7" stroke="#c4b6ab" stroke-width="3.2" fill="none"/>
<path d="M1268.9 487.0L1290.2 500.8" stroke="#c4b6ab" stroke-width="3.2" fill="none"/>
<path d="M849.2 234.8L878.7 253.9" stroke="#c4b6ab" stroke-width="3.2" fill="none"/>
<path d="M916.8 278.7L946.3 297.9" stroke="#c4b6ab" stroke-width="3.2" fill="none"/>
<path d="M957.5 305.2L989.3 325.8" stroke="#c4b6ab" stroke-width="3.2" fill="none"/>
<path d="M992.5 327.8L1003.0 334.7" stroke="#c4b6ab" stroke-width="3.2" fill="none"/>
<path d="M1012.2 340.7L1041.6 359.7" stroke="#c4b6ab" stroke-width="3.2" fill="none"/>
<path d="M1086.8 389.1L1108.6 403.3" stroke="#c4b6ab" stroke-width="3.2" fill="none"/>
<path d="M1111.5 405.2L1122.6 412.3" stroke="#c4b6ab" stroke-width="3.2" fill="none"/>
<path d="M1154.9 433.3L1177.6 448.1" stroke="#c4b6ab" stroke-width="3.2" fill="none"/>
<path d="M796.5 211.6L820.0 227.0" stroke="#c4b6ab" stroke-width="3.2" fill="none"/>
<path d="M837.9 238.6L866.3 257.0" stroke="#c4b6ab" stroke-width="3.2" fill="none"/>
<path d="M880.2 266.0L910.2 285.5" stroke="#c4b6ab" stroke-width="3.2" fill="none"/>
<path d="M919.3 291.4L946.5 309.1" stroke="#c4b6ab" stroke-width="3.2" fill="none"/>
<path d="M961.7 319.0L983.8 333.3" stroke="#c4b6ab" stroke-width="3.2" fill="none"/>
<path d="M1001.2 344.6L1022.8 358.6" stroke="#c4b6ab" stroke-width="3.2" fill="none"/>
<path d="M1045.3 373.3L1058.8 382.0" stroke="#c4b6ab" stroke-width="3.2" fill="none"/>
<path d="M1073.1 391.3L1098.3 407.7" stroke="#c4b6ab" stroke-width="3.2" fill="none"/>
<path d="M1105.6 412.4L1142.9 436.7" stroke="#c4b6ab" stroke-width="3.2" fill="none"/>
<path d="M1158.8 446.9L1181.4 461.6" stroke="#c4b6ab" stroke-width="3.2" fill="none"/>
<path d="M1194.2 469.9L1211.8 481.4" stroke="#c4b6ab" stroke-width="3.2" fill="none"/>
<path d="M1227.9 491.8L1249.2 505.6" stroke="#c4b6ab" stroke-width="3.2" fill="none"/>
<path d="M857.1 264.9L883.0 281.7" stroke="#c4b6ab" stroke-width="3.2" fill="none"/>
<path d="M898.2 291.5L920.2 305.8" stroke="#c4b6ab" stroke-width="3.2" fill="none"/>
<path d="M935.2 315.6L956.2 329.2" stroke="#c4b6ab" stroke-width="3.2" fill="none"/>
<path d="M964.3 334.5L996.8 355.5" stroke="#c4b6ab" stroke-width="3.2" fill="none"/>
<path d="M1009.2 363.6L1019.4 370.3" stroke="#c4b6ab" stroke-width="3.2" fill="none"/>
<path d="M1030.4 377.4L1042.0 384.9" stroke="#c4b6ab" stroke-width="3.2" fill="none"/>
<path d="M1046.3 387.7L1063.2 398.7" stroke="#c4b6ab" stroke-width="3.2" fill="none"/>
<path d="M1069.5 402.8L1095.7 419.8" stroke="#c4b6ab" stroke-width="3.2" fill="none"/>
<path d="M1100.0 422.6L1122.8 437.4" stroke="#c4b6ab" stroke-width="3.2" fill="none"/>
<path d="M1135.6 445.7L1154.9 458.3" stroke="#c4b6ab" stroke-width="3.2" fill="none"/>
<path d="M1157.8 460.1L1187.1 479.1" stroke="#c4b6ab" stroke-width="3.2" fill="none"/>
<path d="M1202.9 489.4L1226.8 504.9" stroke="#c4b6ab" stroke-width="3.2" fill="none"/>
<path d="M808.7 249.0L824.0 258.9" stroke="#c4b6ab" stroke-width="3.2" fill="none"/>
<path d="M828.4 261.8L864.9 285.5" stroke="#c4b6ab" stroke-width="3.2" fill="none"/>
<path d="M881.4 296.2L915.5 318.3" stroke="#c4b6ab" stroke-width="3.2" fill="none"/>
<path d="M922.0 322.5L938.5 333.2" stroke="#c4b6ab" stroke-width="3.2" fill="none"/>
<path d="M946.2 338.2L975.4 357.3" stroke="#c4b6ab" stroke-width="3.2" fill="none"/>
<path d="M984.1 362.9L1007.7 378.2" stroke="#c4b6ab" stroke-width="3.2" fill="none"/>
<path d="M1016.0 383.6L1053.2 407.8" stroke="#c4b6ab" stroke-width="3.2" fill="none"/>
<path d="M1094.4 434.5L1107.8 443.2" stroke="#c4b6ab" stroke-width="3.2" fill="none"/>
<path d="M1119.0 450.5L1132.4 459.2" stroke="#c4b6ab" stroke-width="3.2" fill="none"/>
<path d="M1145.1 467.5L1172.1 485.0" stroke="#c4b6ab" stroke-width="3.2" fill="none"/>
<path d="M794.8 257.4L803.8 263.3" stroke="#c4b6ab" stroke-width="3.2" fill="none"/>
<path d="M813.6 269.6L826.8 278.1" stroke="#c4b6ab" stroke-width="3.2" fill="none"/>
<path d="M843.1 288.7L858.7 298.9" stroke="#c4b6ab" stroke-width="3.2" fill="none"/>
<path d="M904.6 328.7L932.2 346.6" stroke="#c4b6ab" stroke-width="3.2" fill="none"/>
<path d="M940.0 351.7L965.8 368.4" stroke="#c4b6ab" stroke-width="3.2" fill="none"/>
<path d="M981.8 378.8L1002.6 392.3" stroke="#c4b6ab" stroke-width="3.2" fill="none"/>
<path d="M1010.8 397.7L1028.0 408.8" stroke="#c4b6ab" stroke-width="3.2" fill="none"/>
<path d="M1075.3 439.5L1085.3 446.1" stroke="#c4b6ab" stroke-width="3.2" fill="none"/>
<path d="M1124.4 471.4L1136.6 479.4" stroke="#c4b6ab" stroke-width="3.2" fill="none"/>
<path d="M1146.0 485.4L1171.9 502.3" stroke="#c4b6ab" stroke-width="3.2" fill="none"/>
<path d="M821.4 285.9L854.3 307.3" stroke="#c4b6ab" stroke-width="3.2" fill="none"/>
<path d="M919.6 349.7L937.4 361.3" stroke="#c4b6ab" stroke-width="3.2" fill="none"/>
<path d="M951.4 370.4L984.1 391.6" stroke="#c4b6ab" stroke-width="3.2" fill="none"/>
<path d="M988.1 394.2L1023.4 417.1" stroke="#c4b6ab" stroke-width="3.2" fill="none"/>
<path d="M1038.3 426.8L1060.3 441.1" stroke="#c4b6ab" stroke-width="3.2" fill="none"/>
<path d="M1076.6 451.7L1089.7 460.2" stroke="#c4b6ab" stroke-width="3.2" fill="none"/>
<path d="M1094.2 463.1L1103.3 469.0" stroke="#c4b6ab" stroke-width="3.2" fill="none"/>
<path d="M1121.0 480.5L1134.0 489.0" stroke="#c4b6ab" stroke-width="3.2" fill="none"/>
<path d="M808.4 293.6L840.0 314.1" stroke="#c4b6ab" stroke-width="3.2" fill="none"/>
<path d="M849.7 320.4L858.8 326.3" stroke="#c4b6ab" stroke-width="3.2" fill="none"/>
<path d="M861.8 328.3L875.4 337.1" stroke="#c4b6ab" stroke-width="3.2" fill="none"/>
<path d="M885.0 343.3L910.1 359.6" stroke="#c4b6ab" stroke-width="3.2" fill="none"/>
<path d="M915.9 363.4L950.0 385.5" stroke="#c4b6ab" stroke-width="3.2" fill="none"/>
<path d="M1024.2 433.7L1041.8 445.1" stroke="#c4b6ab" stroke-width="3.2" fill="none"/>
<path d="M1045.7 447.6L1068.5 462.5" stroke="#c4b6ab" stroke-width="3.2" fill="none"/>
<path d="M801.0 306.9L829.4 325.4" stroke="#c4b6ab" stroke-width="3.2" fill="none"/>
<path d="M835.8 329.6L873.0 353.7" stroke="#c4b6ab" stroke-width="3.2" fill="none"/>
<path d="M889.4 364.3L923.3 386.3" stroke="#c4b6ab" stroke-width="3.2" fill="none"/>
<path d="M926.7 388.6L952.1 405.1" stroke="#c4b6ab" stroke-width="3.2" fill="none"/>
<path d="M957.1 408.3L977.5 421.6" stroke="#c4b6ab" stroke-width="3.2" fill="none"/>
<path d="M988.9 429.0L1011.9 443.9" stroke="#c4b6ab" stroke-width="3.2" fill="none"/>
<path d="M1016.0 446.6L1043.2 464.2" stroke="#c4b6ab" stroke-width="3.2" fill="none"/>
<path d="M1055.0 471.9L1085.2 491.5" stroke="#c4b6ab" stroke-width="3.2" fill="none"/>
<path d="M814.2 335.6L844.4 355.2" stroke="#c4b6ab" stroke-width="3.2" fill="none"/>
<path d="M853.8 361.3L886.7 382.7" stroke="#c4b6ab" stroke-width="3.2" fill="none"/>
<path d="M898.8 390.6L931.7 412.0" stroke="#c4b6ab" stroke-width="3.2" fill="none"/>
<path d="M945.4 420.9L978.8 442.5" stroke="#c4b6ab" stroke-width="3.2" fill="none"/>
<path d="M994.9 453.0L1031.3 476.6" stroke="#c4b6ab" stroke-width="3.2" fill="none"/>
<path d="M1041.1 483.0L1063.2 497.3" stroke="#c4b6ab" stroke-width="3.2" fill="none"/>
<path d="M815.3 357.8L833.8 369.8" stroke="#c4b6ab" stroke-width="3.2" fill="none"/>
<path d="M849.0 379.7L868.0 392.0" stroke="#c4b6ab" stroke-width="3.2" fill="none"/>
<path d="M900.5 413.1L912.7 421.1" stroke="#c4b6ab" stroke-width="3.2" fill="none"/>
<path d="M946.7 443.1L970.7 458.7" stroke="#c4b6ab" stroke-width="3.2" fill="none"/>
<path d="M980.9 465.3L1016.7 488.6" stroke="#c4b6ab" stroke-width="3.2" fill="none"/>
<path d="M810.9 372.2L843.0 393.0" stroke="#c4b6ab" stroke-width="3.2" fill="none"/>
<path d="M847.6 396.0L882.2 418.5" stroke="#c4b6ab" stroke-width="3.2" fill="none"/>
<path d="M898.5 429.1L917.1 441.1" stroke="#c4b6ab" stroke-width="3.2" fill="none"/>
<path d="M924.0 445.6L957.9 467.6" stroke="#c4b6ab" stroke-width="3.2" fill="none"/>
<path d="M969.1 474.9L982.0 483.3" stroke="#c4b6ab" stroke-width="3.2" fill="none"/>
<path d="M987.3 486.7L1013.5 503.8" stroke="#c4b6ab" stroke-width="3.2" fill="none"/>
<path d="M819.4 395.2L849.1 414.4" stroke="#c4b6ab" stroke-width="3.2" fill="none"/>
<path d="M854.5 417.9L887.2 439.1" stroke="#c4b6ab" stroke-width="3.2" fill="none"/>
<path d="M895.5 444.6L917.8 459.1" stroke="#c4b6ab" stroke-width="3.2" fill="none"/>
<path d="M931.1 467.7L957.9 485.1" stroke="#c4b6ab" stroke-width="3.2" fill="none"/>
<path d="M888.4 460.4L905.8 471.7" stroke="#c4b6ab" stroke-width="3.2" fill="none"/>
<path d="M919.9 480.9L938.9 493.1" stroke="#c4b6ab" stroke-width="3.2" fill="none"/>
<path d="M819.9 435.9L851.0 456.1" stroke="#c4b6ab" stroke-width="3.2" fill="none"/>
<path d="M855.7 459.2L892.8 483.2" stroke="#c4b6ab" stroke-width="3.2" fill="none"/>
<path d="M796.7 430.9L827.9 451.2" stroke="#c4b6ab" stroke-width="3.2" fill="none"/>
<path d="M844.0 461.6L868.8 477.8" stroke="#c4b6ab" stroke-width="3.2" fill="none"/>
<path d="M819.9 458.7L857.5 483.1" stroke="#c4b6ab" stroke-width="3.2" fill="none"/>
<path d="M813.9 467.3L822.5 472.9" stroke="#c4b6ab" stroke-width="3.2" fill="none"/>
<path d="M836.8 482.2L856.1 494.7" stroke="#c4b6ab" stroke-width="3.2" fill="none"/>
<path d="M806.1 478.4L841.1 501.1" stroke="#c4b6ab" stroke-width="3.2" fill="none"/>
<path d="M797.1 126.1L811.6 103.8" stroke="#f0ece7" stroke-width="2.0" fill="none"/>
<path d="M803.9 135.8L825.4 102.7" stroke="#f0ece7" stroke-width="2.0" fill="none"/>
<path d="M818.3 133.1L835.7 106.4" stroke="#f0ece7" stroke-width="2.0" fill="none"/>
<path d="M795.7 185.6L806.5 168.9" stroke="#f0ece7" stroke-width="2.0" fill="none"/>
<path d="M815.8 154.7L824.3 141.5" stroke="#f0ece7" stroke-width="2.0" fill="none"/>
<path d="M828.4 135.1L851.8 99.2" stroke="#f0ece7" stroke-width="2.0" fill="none"/>
<path d="M808.7 181.8L827.5 152.8" stroke="#f0ece7" stroke-width="2.0" fill="none"/>
<path d="M829.6 149.5L840.5 132.8" stroke="#f0ece7" stroke-width="2.0" fill="none"/>
<path d="M846.0 124.3L859.5 103.6" stroke="#f0ece7" stroke-width="2.0" fill="none"/>
<path d="M832.6 175.4L849.4 149.5" stroke="#f0ece7" stroke-width="2.0" fill="none"/>
<path d="M867.8 121.3L873.8 112.0" stroke="#f0ece7" stroke-width="2.0" fill="none"/>
<path d="M811.4 237.5L822.2 220.8" stroke="#f0ece7" stroke-width="2.0" fill="none"/>
<path d="M824.7 217.0L836.9 198.2" stroke="#f0ece7" stroke-width="2.0" fill="none"/>
<path d="M868.4 149.7L879.1 133.2" stroke="#f0ece7" stroke-width="2.0" fill="none"/>
<path d="M799.0 283.9L821.7 249.0" stroke="#f0ece7" stroke-width="2.0" fill="none"/>
<path d="M826.4 241.7L843.4 215.5" stroke="#f0ece7" stroke-width="2.0" fill="none"/>
<path d="M855.1 197.6L861.1 188.3" stroke="#f0ece7" stroke-width="2.0" fill="none"/>
<path d="M863.9 183.9L880.9 157.8" stroke="#f0ece7" stroke-width="2.0" fill="none"/>
<path d="M884.4 152.4L901.2 126.6" stroke="#f0ece7" stroke-width="2.0" fill="none"/>
<path d="M909.5 113.7L928.8 84.0" stroke="#f0ece7" stroke-width="2.0" fill="none"/>
<path d="M805.5 300.1L825.4 269.4" stroke="#f0ece7" stroke-width="2.0" fill="none"/>
<path d="M834.5 255.4L842.2 243.5" stroke="#f0ece7" stroke-width="2.0" fill="none"/>
<path d="M848.8 233.4L868.3 203.4" stroke="#f0ece7" stroke-width="2.0" fill="none"/>
<path d="M879.4 186.2L890.4 169.3" stroke="#f0ece7" stroke-width="2.0" fill="none"/>
<path d="M897.2 158.8L917.7 127.3" stroke="#f0ece7" stroke-width="2.0" fill="none"/>
<path d="M925.3 115.6L937.2 97.3" stroke="#f0ece7" stroke-width="2.0" fill="none"/>
<path d="M830.2 277.7L838.5 265.0" stroke="#f0ece7" stroke-width="2.0" fill="none"/>
<path d="M848.2 250.0L872.2 213.1" stroke="#f0ece7" stroke-width="2.0" fill="none"/>
<path d="M884.1 194.7L897.6 174.0" stroke="#f0ece7" stroke-width="2.0" fill="none"/>
<path d="M902.0 167.1L912.9 150.3" stroke="#f0ece7" stroke-width="2.0" fill="none"/>
<path d="M921.4 137.2L930.1 123.9" stroke="#f0ece7" stroke-width="2.0" fill="none"/>
<path d="M819.2 316.1L834.2 293.0" stroke="#f0ece7" stroke-width="2.0" fill="none"/>
<path d="M836.2 289.9L848.3 271.4" stroke="#f0ece7" stroke-width="2.0" fill="none"/>
<path d="M872.5 233.9L885.1 214.7" stroke="#f0ece7" stroke-width="2.0" fill="none"/>
<path d="M941.5 127.8L948.4 117.1" stroke="#f0ece7" stroke-width="2.0" fill="none"/>
<path d="M809.2 362.6L816.8 350.9" stroke="#f0ece7" stroke-width="2.0" fill="none"/>
<path d="M819.1 347.4L826.3 336.3" stroke="#f0ece7" stroke-width="2.0" fill="none"/>
<path d="M828.6 332.7L846.5 305.3" stroke="#f0ece7" stroke-width="2.0" fill="none"/>
<path d="M857.3 288.5L864.1 278.1" stroke="#f0ece7" stroke-width="2.0" fill="none"/>
<path d="M872.4 265.4L880.1 253.4" stroke="#f0ece7" stroke-width="2.0" fill="none"/>
<path d="M889.6 238.9L900.7 221.7" stroke="#f0ece7" stroke-width="2.0" fill="none"/>
<path d="M902.4 219.2L917.6 195.7" stroke="#f0ece7" stroke-width="2.0" fill="none"/>
<path d="M928.6 178.8L937.0 165.8" stroke="#f0ece7" stroke-width="2.0" fill="none"/>
<path d="M940.9 159.9L964.4 123.7" stroke="#f0ece7" stroke-width="2.0" fill="none"/>
<path d="M968.1 117.9L980.3 99.2" stroke="#f0ece7" stroke-width="2.0" fill="none"/>
<path d="M799.2 397.6L809.6 381.6" stroke="#f0ece7" stroke-width="2.0" fill="none"/>
<path d="M815.5 372.5L822.8 361.3" stroke="#f0ece7" stroke-width="2.0" fill="none"/>
<path d="M825.1 357.8L838.3 337.3" stroke="#f0ece7" stroke-width="2.0" fill="none"/>
<path d="M863.7 298.4L884.2 266.8" stroke="#f0ece7" stroke-width="2.0" fill="none"/>
<path d="M895.1 250.0L902.5 238.5" stroke="#f0ece7" stroke-width="2.0" fill="none"/>
<path d="M908.4 229.4L914.4 220.2" stroke="#f0ece7" stroke-width="2.0" fill="none"/>
<path d="M936.3 186.5L959.8 150.3" stroke="#f0ece7" stroke-width="2.0" fill="none"/>
<path d="M966.3 140.4L986.4 109.4" stroke="#f0ece7" stroke-width="2.0" fill="none"/>
<path d="M823.1 384.7L831.7 371.5" stroke="#f0ece7" stroke-width="2.0" fill="none"/>
<path d="M840.5 357.8L857.0 332.4" stroke="#f0ece7" stroke-width="2.0" fill="none"/>
<path d="M861.3 325.9L867.7 316.0" stroke="#f0ece7" stroke-width="2.0" fill="none"/>
<path d="M876.8 302.0L896.8 271.2" stroke="#f0ece7" stroke-width="2.0" fill="none"/>
<path d="M926.3 225.8L949.2 190.4" stroke="#f0ece7" stroke-width="2.0" fill="none"/>
<path d="M953.8 183.4L975.9 149.3" stroke="#f0ece7" stroke-width="2.0" fill="none"/>
<path d="M979.0 144.7L992.3 124.1" stroke="#f0ece7" stroke-width="2.0" fill="none"/>
<path d="M800.4 448.4L821.7 415.7" stroke="#f0ece7" stroke-width="2.0" fill="none"/>
<path d="M830.1 402.8L847.8 375.5" stroke="#f0ece7" stroke-width="2.0" fill="none"/>
<path d="M851.8 369.3L857.4 360.6" stroke="#f0ece7" stroke-width="2.0" fill="none"/>
<path d="M865.9 347.7L885.5 317.4" stroke="#f0ece7" stroke-width="2.0" fill="none"/>
<path d="M892.3 306.9L903.6 289.5" stroke="#f0ece7" stroke-width="2.0" fill="none"/>
<path d="M912.9 275.3L929.7 249.4" stroke="#f0ece7" stroke-width="2.0" fill="none"/>
<path d="M939.2 234.8L957.7 206.3" stroke="#f0ece7" stroke-width="2.0" fill="none"/>
<path d="M960.0 202.8L981.4 169.7" stroke="#f0ece7" stroke-width="2.0" fill="none"/>
<path d="M984.6 164.8L990.3 156.0" stroke="#f0ece7" stroke-width="2.0" fill="none"/>
<path d="M999.9 141.3L1014.1 119.5" stroke="#f0ece7" stroke-width="2.0" fill="none"/>
<path d="M797.6 467.5L810.7 447.3" stroke="#f0ece7" stroke-width="2.0" fill="none"/>
<path d="M817.0 437.6L823.0 428.5" stroke="#f0ece7" stroke-width="2.0" fill="none"/>
<path d="M829.3 418.7L848.0 389.9" stroke="#f0ece7" stroke-width="2.0" fill="none"/>
<path d="M889.2 326.5L909.7 294.9" stroke="#f0ece7" stroke-width="2.0" fill="none"/>
<path d="M915.7 285.7L933.7 258.0" stroke="#f0ece7" stroke-width="2.0" fill="none"/>
<path d="M944.4 241.4L958.3 220.0" stroke="#f0ece7" stroke-width="2.0" fill="none"/>
<path d="M961.9 214.5L972.2 198.7" stroke="#f0ece7" stroke-width="2.0" fill="none"/>
<path d="M980.8 185.4L990.0 171.3" stroke="#f0ece7" stroke-width="2.0" fill="none"/>
<path d="M997.1 160.3L1009.5 141.2" stroke="#f0ece7" stroke-width="2.0" fill="none"/>
<path d="M1012.1 137.2L1024.5 118.2" stroke="#f0ece7" stroke-width="2.0" fill="none"/>
<path d="M1027.6 113.3L1033.2 104.8" stroke="#f0ece7" stroke-width="2.0" fill="none"/>
<path d="M798.9 485.6L810.5 467.8" stroke="#f0ece7" stroke-width="2.0" fill="none"/>
<path d="M821.0 451.6L832.3 434.2" stroke="#f0ece7" stroke-width="2.0" fill="none"/>
<path d="M841.0 420.8L856.3 397.2" stroke="#f0ece7" stroke-width="2.0" fill="none"/>
<path d="M858.8 393.4L881.7 358.1" stroke="#f0ece7" stroke-width="2.0" fill="none"/>
<path d="M889.9 345.5L905.2 322.0" stroke="#f0ece7" stroke-width="2.0" fill="none"/>
<path d="M911.6 312.0L920.0 299.2" stroke="#f0ece7" stroke-width="2.0" fill="none"/>
<path d="M924.5 292.2L931.3 281.8" stroke="#f0ece7" stroke-width="2.0" fill="none"/>
<path d="M939.9 268.5L950.9 251.6" stroke="#f0ece7" stroke-width="2.0" fill="none"/>
<path d="M953.5 247.6L976.7 211.9" stroke="#f0ece7" stroke-width="2.0" fill="none"/>
<path d="M981.3 204.7L993.3 186.2" stroke="#f0ece7" stroke-width="2.0" fill="none"/>
<path d="M1004.8 168.6L1016.7 150.2" stroke="#f0ece7" stroke-width="2.0" fill="none"/>
<path d="M1037.4 118.3L1049.1 100.3" stroke="#f0ece7" stroke-width="2.0" fill="none"/>
<path d="M825.2 470.9L832.2 460.1" stroke="#f0ece7" stroke-width="2.0" fill="none"/>
<path d="M840.3 447.6L858.3 419.9" stroke="#f0ece7" stroke-width="2.0" fill="none"/>
<path d="M860.3 416.9L868.8 403.7" stroke="#f0ece7" stroke-width="2.0" fill="none"/>
<path d="M873.9 395.9L889.1 372.6" stroke="#f0ece7" stroke-width="2.0" fill="none"/>
<path d="M899.5 356.4L916.8 329.9" stroke="#f0ece7" stroke-width="2.0" fill="none"/>
<path d="M927.2 313.9L941.7 291.5" stroke="#f0ece7" stroke-width="2.0" fill="none"/>
<path d="M946.6 283.9L954.2 272.3" stroke="#f0ece7" stroke-width="2.0" fill="none"/>
<path d="M1020.1 170.7L1028.1 158.5" stroke="#f0ece7" stroke-width="2.0" fill="none"/>
<path d="M1037.4 144.1L1051.6 122.3" stroke="#f0ece7" stroke-width="2.0" fill="none"/>
<path d="M1056.1 115.3L1069.4 94.8" stroke="#f0ece7" stroke-width="2.0" fill="none"/>
<path d="M830.4 486.8L841.7 469.3" stroke="#f0ece7" stroke-width="2.0" fill="none"/>
<path d="M845.9 462.8L853.5 451.2" stroke="#f0ece7" stroke-width="2.0" fill="none"/>
<path d="M865.4 432.8L888.4 397.4" stroke="#f0ece7" stroke-width="2.0" fill="none"/>
<path d="M898.7 381.6L909.0 365.7" stroke="#f0ece7" stroke-width="2.0" fill="none"/>
<path d="M912.4 360.5L919.1 350.2" stroke="#f0ece7" stroke-width="2.0" fill="none"/>
<path d="M922.5 344.9L937.3 322.1" stroke="#f0ece7" stroke-width="2.0" fill="none"/>
<path d="M939.1 319.4L960.7 286.1" stroke="#f0ece7" stroke-width="2.0" fill="none"/>
<path d="M971.2 270.0L990.5 240.2" stroke="#f0ece7" stroke-width="2.0" fill="none"/>
<path d="M1001.6 223.1L1014.4 203.5" stroke="#f0ece7" stroke-width="2.0" fill="none"/>
<path d="M1021.9 191.8L1028.1 182.4" stroke="#f0ece7" stroke-width="2.0" fill="none"/>
<path d="M1032.4 175.7L1040.1 163.8" stroke="#f0ece7" stroke-width="2.0" fill="none"/>
<path d="M1042.6 160.0L1055.1 140.8" stroke="#f0ece7" stroke-width="2.0" fill="none"/>
<path d="M1066.6 123.0L1088.0 90.1" stroke="#f0ece7" stroke-width="2.0" fill="none"/>
<path d="M843.4 483.5L857.8 461.5" stroke="#f0ece7" stroke-width="2.0" fill="none"/>
<path d="M865.0 450.3L884.6 420.1" stroke="#f0ece7" stroke-width="2.0" fill="none"/>
<path d="M889.9 412.1L905.3 388.4" stroke="#f0ece7" stroke-width="2.0" fill="none"/>
<path d="M915.6 372.5L931.7 347.7" stroke="#f0ece7" stroke-width="2.0" fill="none"/>
<path d="M939.6 335.5L951.0 317.9" stroke="#f0ece7" stroke-width="2.0" fill="none"/>
<path d="M955.5 311.0L972.4 285.0" stroke="#f0ece7" stroke-width="2.0" fill="none"/>
<path d="M980.7 272.2L994.7 250.7" stroke="#f0ece7" stroke-width="2.0" fill="none"/>
<path d="M1002.1 239.2L1009.5 227.9" stroke="#f0ece7" stroke-width="2.0" fill="none"/>
<path d="M1020.7 210.5L1035.7 187.5" stroke="#f0ece7" stroke-width="2.0" fill="none"/>
<path d="M1040.4 180.3L1051.0 164.0" stroke="#f0ece7" stroke-width="2.0" fill="none"/>
<path d="M1054.3 158.9L1077.1 123.8" stroke="#f0ece7" stroke-width="2.0" fill="none"/>
<path d="M1079.5 120.0L1098.2 91.2" stroke="#f0ece7" stroke-width="2.0" fill="none"/>
<path d="M854.7 492.2L861.3 482.1" stroke="#f0ece7" stroke-width="2.0" fill="none"/>
<path d="M870.7 467.5L885.6 444.7" stroke="#f0ece7" stroke-width="2.0" fill="none"/>
<path d="M961.1 328.3L968.2 317.4" stroke="#f0ece7" stroke-width="2.0" fill="none"/>
<path d="M1003.4 263.2L1011.7 250.5" stroke="#f0ece7" stroke-width="2.0" fill="none"/>
<path d="M1018.3 240.2L1037.1 211.3" stroke="#f0ece7" stroke-width="2.0" fill="none"/>
<path d="M1048.7 193.6L1069.9 160.8" stroke="#f0ece7" stroke-width="2.0" fill="none"/>
<path d="M1072.2 157.3L1095.0 122.1" stroke="#f0ece7" stroke-width="2.0" fill="none"/>
<path d="M876.6 490.2L884.4 478.3" stroke="#f0ece7" stroke-width="2.0" fill="none"/>
<path d="M887.5 473.4L907.6 442.4" stroke="#f0ece7" stroke-width="2.0" fill="none"/>
<path d="M919.0 424.9L929.2 409.2" stroke="#f0ece7" stroke-width="2.0" fill="none"/>
<path d="M933.9 402.0L948.5 379.6" stroke="#f0ece7" stroke-width="2.0" fill="none"/>
<path d="M951.3 375.2L961.9 358.9" stroke="#f0ece7" stroke-width="2.0" fill="none"/>
<path d="M965.0 354.1L972.5 342.6" stroke="#f0ece7" stroke-width="2.0" fill="none"/>
<path d="M978.6 333.1L994.4 308.8" stroke="#f0ece7" stroke-width="2.0" fill="none"/>
<path d="M1030.7 253.0L1044.2 232.1" stroke="#f0ece7" stroke-width="2.0" fill="none"/>
<path d="M1045.9 229.6L1070.2 192.1" stroke="#f0ece7" stroke-width="2.0" fill="none"/>
<path d="M1079.2 178.2L1100.1 146.0" stroke="#f0ece7" stroke-width="2.0" fill="none"/>
<path d="M898.0 484.4L914.4 459.0" stroke="#f0ece7" stroke-width="2.0" fill="none"/>
<path d="M936.2 425.4L954.3 397.5" stroke="#f0ece7" stroke-width="2.0" fill="none"/>
<path d="M956.5 394.2L977.9 361.3" stroke="#f0ece7" stroke-width="2.0" fill="none"/>
<path d="M985.7 349.3L995.6 334.0" stroke="#f0ece7" stroke-width="2.0" fill="none"/>
<path d="M1013.0 307.2L1035.7 272.3" stroke="#f0ece7" stroke-width="2.0" fill="none"/>
<path d="M1061.8 232.0L1076.5 209.5" stroke="#f0ece7" stroke-width="2.0" fill="none"/>
<path d="M1116.4 148.0L1137.8 115.1" stroke="#f0ece7" stroke-width="2.0" fill="none"/>
<path d="M925.2 457.7L937.2 439.1" stroke="#f0ece7" stroke-width="2.0" fill="none"/>
<path d="M943.2 430.0L963.5 398.7" stroke="#f0ece7" stroke-width="2.0" fill="none"/>
<path d="M970.2 388.4L992.5 354.0" stroke="#f0ece7" stroke-width="2.0" fill="none"/>
<path d="M1003.8 336.7L1018.0 314.8" stroke="#f0ece7" stroke-width="2.0" fill="none"/>
<path d="M1021.9 308.8L1034.2 289.9" stroke="#f0ece7" stroke-width="2.0" fill="none"/>
<path d="M1038.9 282.6L1055.9 256.4" stroke="#f0ece7" stroke-width="2.0" fill="none"/>
<path d="M1111.3 171.1L1128.6 144.4" stroke="#f0ece7" stroke-width="2.0" fill="none"/>
<path d="M1136.4 132.5L1155.4 103.2" stroke="#f0ece7" stroke-width="2.0" fill="none"/>
<path d="M936.9 467.5L944.4 455.9" stroke="#f0ece7" stroke-width="2.0" fill="none"/>
<path d="M984.2 394.6L1008.4 357.2" stroke="#f0ece7" stroke-width="2.0" fill="none"/>
<path d="M1015.2 346.8L1029.6 324.6" stroke="#f0ece7" stroke-width="2.0" fill="none"/>
<path d="M1054.4 286.4L1069.9 262.6" stroke="#f0ece7" stroke-width="2.0" fill="none"/>
<path d="M1079.3 248.1L1096.0 222.4" stroke="#f0ece7" stroke-width="2.0" fill="none"/>
<path d="M1103.6 210.8L1111.5 198.5" stroke="#f0ece7" stroke-width="2.0" fill="none"/>
<path d="M1120.7 184.4L1128.6 172.2" stroke="#f0ece7" stroke-width="2.0" fill="none"/>
<path d="M1138.7 156.7L1158.7 125.9" stroke="#f0ece7" stroke-width="2.0" fill="none"/>
<path d="M1164.3 117.2L1184.2 86.5" stroke="#f0ece7" stroke-width="2.0" fill="none"/>
<path d="M933.3 491.9L942.0 478.5" stroke="#f0ece7" stroke-width="2.0" fill="none"/>
<path d="M947.3 470.3L965.3 442.6" stroke="#f0ece7" stroke-width="2.0" fill="none"/>
<path d="M972.0 432.3L983.6 414.3" stroke="#f0ece7" stroke-width="2.0" fill="none"/>
<path d="M1026.5 348.4L1048.7 314.2" stroke="#f0ece7" stroke-width="2.0" fill="none"/>
<path d="M1052.3 308.6L1067.9 284.5" stroke="#f0ece7" stroke-width="2.0" fill="none"/>
<path d="M1105.6 226.5L1117.5 208.1" stroke="#f0ece7" stroke-width="2.0" fill="none"/>
<path d="M1123.2 199.4L1141.7 171.0" stroke="#f0ece7" stroke-width="2.0" fill="none"/>
<path d="M1155.9 149.1L1170.8 126.1" stroke="#f0ece7" stroke-width="2.0" fill="none"/>
<path d="M998.8 408.5L1015.8 382.2" stroke="#f0ece7" stroke-width="2.0" fill="none"/>
<path d="M1026.3 366.1L1038.9 346.6" stroke="#f0ece7" stroke-width="2.0" fill="none"/>
<path d="M1041.7 342.3L1060.7 313.1" stroke="#f0ece7" stroke-width="2.0" fill="none"/>
<path d="M1067.2 303.1L1079.6 284.0" stroke="#f0ece7" stroke-width="2.0" fill="none"/>
<path d="M1112.2 233.8L1121.0 220.2" stroke="#f0ece7" stroke-width="2.0" fill="none"/>
<path d="M1124.7 214.6L1137.5 194.8" stroke="#f0ece7" stroke-width="2.0" fill="none"/>
<path d="M1144.1 184.7L1154.7 168.3" stroke="#f0ece7" stroke-width="2.0" fill="none"/>
<path d="M1162.5 156.3L1172.2 141.5" stroke="#f0ece7" stroke-width="2.0" fill="none"/>
<path d="M992.6 445.1L1006.9 423.1" stroke="#f0ece7" stroke-width="2.0" fill="none"/>
<path d="M1039.5 373.0L1058.4 343.8" stroke="#f0ece7" stroke-width="2.0" fill="none"/>
<path d="M1064.5 334.5L1075.0 318.2" stroke="#f0ece7" stroke-width="2.0" fill="none"/>
<path d="M1081.0 309.0L1097.5 283.5" stroke="#f0ece7" stroke-width="2.0" fill="none"/>
<path d="M1099.2 281.0L1121.7 246.4" stroke="#f0ece7" stroke-width="2.0" fill="none"/>
<path d="M1159.6 188.0L1180.1 156.4" stroke="#f0ece7" stroke-width="2.0" fill="none"/>
<path d="M1186.5 146.6L1209.8 110.6" stroke="#f0ece7" stroke-width="2.0" fill="none"/>
<path d="M990.6 467.6L1013.4 432.5" stroke="#f0ece7" stroke-width="2.0" fill="none"/>
<path d="M1019.6 423.0L1037.1 396.1" stroke="#f0ece7" stroke-width="2.0" fill="none"/>
<path d="M1039.5 392.3L1056.0 366.9" stroke="#f0ece7" stroke-width="2.0" fill="none"/>
<path d="M1065.8 351.8L1076.0 336.1" stroke="#f0ece7" stroke-width="2.0" fill="none"/>
<path d="M1081.6 327.6L1095.0 306.9" stroke="#f0ece7" stroke-width="2.0" fill="none"/>
<path d="M1106.2 289.6L1117.0 273.0" stroke="#f0ece7" stroke-width="2.0" fill="none"/>
<path d="M1122.2 265.0L1130.7 251.9" stroke="#f0ece7" stroke-width="2.0" fill="none"/>
<path d="M1164.9 199.2L1181.7 173.3" stroke="#f0ece7" stroke-width="2.0" fill="none"/>
<path d="M1187.4 164.6L1203.4 139.9" stroke="#f0ece7" stroke-width="2.0" fill="none"/>
<path d="M1206.9 134.6L1221.8 111.6" stroke="#f0ece7" stroke-width="2.0" fill="none"/>
<path d="M989.3 488.8L1009.5 457.6" stroke="#f0ece7" stroke-width="2.0" fill="none"/>
<path d="M1046.0 401.5L1062.8 375.6" stroke="#f0ece7" stroke-width="2.0" fill="none"/>
<path d="M1073.7 358.8L1081.7 346.5" stroke="#f0ece7" stroke-width="2.0" fill="none"/>
<path d="M1098.8 320.2L1121.8 284.7" stroke="#f0ece7" stroke-width="2.0" fill="none"/>
<path d="M1130.2 271.8L1149.0 242.8" stroke="#f0ece7" stroke-width="2.0" fill="none"/>
<path d="M1160.9 224.6L1180.0 195.2" stroke="#f0ece7" stroke-width="2.0" fill="none"/>
<path d="M1186.1 185.7L1209.3 150.1" stroke="#f0ece7" stroke-width="2.0" fill="none"/>
<path d="M1216.1 139.6L1224.3 127.0" stroke="#f0ece7" stroke-width="2.0" fill="none"/>
<path d="M1005.7 486.8L1021.6 462.3" stroke="#f0ece7" stroke-width="2.0" fill="none"/>
<path d="M1032.1 446.1L1054.5 411.6" stroke="#f0ece7" stroke-width="2.0" fill="none"/>
<path d="M1058.7 405.2L1071.7 385.3" stroke="#f0ece7" stroke-width="2.0" fill="none"/>
<path d="M1119.0 312.3L1130.7 294.4" stroke="#f0ece7" stroke-width="2.0" fill="none"/>
<path d="M1156.0 255.4L1174.7 226.5" stroke="#f0ece7" stroke-width="2.0" fill="none"/>
<path d="M1179.1 219.8L1196.3 193.3" stroke="#f0ece7" stroke-width="2.0" fill="none"/>
<path d="M1201.7 184.9L1214.4 165.5" stroke="#f0ece7" stroke-width="2.0" fill="none"/>
<path d="M1224.1 150.6L1245.2 118.0" stroke="#f0ece7" stroke-width="2.0" fill="none"/>
<path d="M1054.8 429.7L1061.0 420.3" stroke="#f0ece7" stroke-width="2.0" fill="none"/>
<path d="M1065.5 413.3L1079.4 391.9" stroke="#f0ece7" stroke-width="2.0" fill="none"/>
<path d="M1090.0 375.6L1097.4 364.1" stroke="#f0ece7" stroke-width="2.0" fill="none"/>
<path d="M1099.3 361.3L1118.6 331.6" stroke="#f0ece7" stroke-width="2.0" fill="none"/>
<path d="M1124.9 321.9L1140.1 298.4" stroke="#f0ece7" stroke-width="2.0" fill="none"/>
<path d="M1145.5 290.2L1151.7 280.6" stroke="#f0ece7" stroke-width="2.0" fill="none"/>
<path d="M1163.2 262.9L1170.5 251.7" stroke="#f0ece7" stroke-width="2.0" fill="none"/>
<path d="M1174.2 245.9L1189.3 222.6" stroke="#f0ece7" stroke-width="2.0" fill="none"/>
<path d="M1198.7 208.2L1206.9 195.5" stroke="#f0ece7" stroke-width="2.0" fill="none"/>
<path d="M1217.1 179.9L1225.2 167.4" stroke="#f0ece7" stroke-width="2.0" fill="none"/>
<path d="M1234.5 153.0L1245.7 135.7" stroke="#f0ece7" stroke-width="2.0" fill="none"/>
<path d="M1060.6 444.8L1077.9 418.0" stroke="#f0ece7" stroke-width="2.0" fill="none"/>
<path d="M1084.7 407.6L1102.1 380.7" stroke="#f0ece7" stroke-width="2.0" fill="none"/>
<path d="M1110.1 368.4L1132.8 333.5" stroke="#f0ece7" stroke-width="2.0" fill="none"/>
<path d="M1143.6 316.9L1162.9 287.2" stroke="#f0ece7" stroke-width="2.0" fill="none"/>
<path d="M1172.0 273.2L1186.8 250.4" stroke="#f0ece7" stroke-width="2.0" fill="none"/>
<path d="M1191.1 243.7L1214.7 207.4" stroke="#f0ece7" stroke-width="2.0" fill="none"/>
<path d="M1218.7 201.2L1240.1 168.3" stroke="#f0ece7" stroke-width="2.0" fill="none"/>
<path d="M1245.9 159.4L1254.7 145.8" stroke="#f0ece7" stroke-width="2.0" fill="none"/>
<path d="M1263.0 133.0L1275.2 114.2" stroke="#f0ece7" stroke-width="2.0" fill="none"/>
<path d="M1054.8 478.6L1078.5 442.1" stroke="#f0ece7" stroke-width="2.0" fill="none"/>
<path d="M1088.0 427.5L1107.2 397.9" stroke="#f0ece7" stroke-width="2.0" fill="none"/>
<path d="M1110.1 393.5L1122.1 375.0" stroke="#f0ece7" stroke-width="2.0" fill="none"/>
<path d="M1128.6 365.0L1135.4 354.5" stroke="#f0ece7" stroke-width="2.0" fill="none"/>
<path d="M1141.5 345.1L1150.3 331.5" stroke="#f0ece7" stroke-width="2.0" fill="none"/>
<path d="M1155.4 323.7L1161.3 314.7" stroke="#f0ece7" stroke-width="2.0" fill="none"/>
<path d="M1173.0 296.7L1195.4 262.1" stroke="#f0ece7" stroke-width="2.0" fill="none"/>
<path d="M1201.4 252.9L1215.0 231.9" stroke="#f0ece7" stroke-width="2.0" fill="none"/>
<path d="M1221.9 221.3L1237.7 197.0" stroke="#f0ece7" stroke-width="2.0" fill="none"/>
<path d="M1239.4 194.3L1258.4 165.1" stroke="#f0ece7" stroke-width="2.0" fill="none"/>
<path d="M1268.8 149.1L1282.0 128.8" stroke="#f0ece7" stroke-width="2.0" fill="none"/>
<path d="M1080.1 469.3L1092.2 450.7" stroke="#f0ece7" stroke-width="2.0" fill="none"/>
<path d="M1100.4 438.0L1115.1 415.4" stroke="#f0ece7" stroke-width="2.0" fill="none"/>
<path d="M1121.8 405.0L1129.7 392.9" stroke="#f0ece7" stroke-width="2.0" fill="none"/>
<path d="M1136.1 383.1L1157.0 350.8" stroke="#f0ece7" stroke-width="2.0" fill="none"/>
<path d="M1167.4 334.9L1191.2 298.1" stroke="#f0ece7" stroke-width="2.0" fill="none"/>
<path d="M1194.9 292.5L1203.0 280.0" stroke="#f0ece7" stroke-width="2.0" fill="none"/>
<path d="M1227.4 242.5L1236.8 227.9" stroke="#f0ece7" stroke-width="2.0" fill="none"/>
<path d="M1240.9 221.7L1259.7 192.6" stroke="#f0ece7" stroke-width="2.0" fill="none"/>
<path d="M1261.8 189.5L1277.3 165.6" stroke="#f0ece7" stroke-width="2.0" fill="none"/>
<path d="M1090.5 479.7L1113.5 444.3" stroke="#f0ece7" stroke-width="2.0" fill="none"/>
<path d="M1117.1 438.7L1134.3 412.2" stroke="#f0ece7" stroke-width="2.0" fill="none"/>
<path d="M1144.0 397.3L1153.0 383.5" stroke="#f0ece7" stroke-width="2.0" fill="none"/>
<path d="M1158.6 374.8L1182.5 338.1" stroke="#f0ece7" stroke-width="2.0" fill="none"/>
<path d="M1190.8 325.2L1212.2 292.3" stroke="#f0ece7" stroke-width="2.0" fill="none"/>
<path d="M1218.2 283.0L1239.6 250.1" stroke="#f0ece7" stroke-width="2.0" fill="none"/>
<path d="M1248.7 236.1L1257.7 222.1" stroke="#f0ece7" stroke-width="2.0" fill="none"/>
<path d="M1266.9 208.0L1277.4 191.8" stroke="#f0ece7" stroke-width="2.0" fill="none"/>
<path d="M1281.7 185.3L1299.4 157.9" stroke="#f0ece7" stroke-width="2.0" fill="none"/>
<path d="M1310.8 140.5L1325.4 117.9" stroke="#f0ece7" stroke-width="2.0" fill="none"/>
<path d="M1120.1 464.0L1133.2 444.0" stroke="#f0ece7" stroke-width="2.0" fill="none"/>
<path d="M1135.4 440.5L1156.6 407.9" stroke="#f0ece7" stroke-width="2.0" fill="none"/>
<path d="M1162.2 399.2L1170.9 385.9" stroke="#f0ece7" stroke-width="2.0" fill="none"/>
<path d="M1179.9 372.1L1192.7 352.4" stroke="#f0ece7" stroke-width="2.0" fill="none"/>
<path d="M1202.3 337.5L1209.2 326.9" stroke="#f0ece7" stroke-width="2.0" fill="none"/>
<path d="M1229.2 296.1L1244.3 272.8" stroke="#f0ece7" stroke-width="2.0" fill="none"/>
<path d="M1268.8 235.1L1286.9 207.3" stroke="#f0ece7" stroke-width="2.0" fill="none"/>
<path d="M1298.6 189.3L1305.3 178.9" stroke="#f0ece7" stroke-width="2.0" fill="none"/>
<path d="M1319.5 157.1L1342.0 122.4" stroke="#f0ece7" stroke-width="2.0" fill="none"/>
<path d="M1345.0 117.8L1369.2 80.6" stroke="#f0ece7" stroke-width="2.0" fill="none"/>
<path d="M1134.3 473.6L1149.7 449.9" stroke="#f0ece7" stroke-width="2.0" fill="none"/>
<path d="M1153.8 443.6L1162.9 429.6" stroke="#f0ece7" stroke-width="2.0" fill="none"/>
<path d="M1167.5 422.4L1178.7 405.2" stroke="#f0ece7" stroke-width="2.0" fill="none"/>
<path d="M1185.9 394.1L1193.6 382.2" stroke="#f0ece7" stroke-width="2.0" fill="none"/>
<path d="M1204.5 365.4L1214.1 350.7" stroke="#f0ece7" stroke-width="2.0" fill="none"/>
<path d="M1219.8 341.8L1239.5 311.5" stroke="#f0ece7" stroke-width="2.0" fill="none"/>
<path d="M1250.5 294.6L1262.3 276.4" stroke="#f0ece7" stroke-width="2.0" fill="none"/>
<path d="M1297.9 221.6L1319.2 188.8" stroke="#f0ece7" stroke-width="2.0" fill="none"/>
<path d="M1327.5 176.0L1338.5 159.1" stroke="#f0ece7" stroke-width="2.0" fill="none"/>
<path d="M1346.0 147.6L1369.3 111.7" stroke="#f0ece7" stroke-width="2.0" fill="none"/>
<path d="M1166.3 455.0L1172.5 445.5" stroke="#f0ece7" stroke-width="2.0" fill="none"/>
<path d="M1183.5 428.5L1204.4 396.4" stroke="#f0ece7" stroke-width="2.0" fill="none"/>
<path d="M1210.7 386.7L1231.9 354.1" stroke="#f0ece7" stroke-width="2.0" fill="none"/>
<path d="M1235.8 348.0L1255.6 317.5" stroke="#f0ece7" stroke-width="2.0" fill="none"/>
<path d="M1266.3 301.0L1282.2 276.6" stroke="#f0ece7" stroke-width="2.0" fill="none"/>
<path d="M1289.1 266.0L1310.6 232.9" stroke="#f0ece7" stroke-width="2.0" fill="none"/>
<path d="M1331.6 200.5L1339.9 187.8" stroke="#f0ece7" stroke-width="2.0" fill="none"/>
<path d="M1342.6 183.6L1354.7 165.0" stroke="#f0ece7" stroke-width="2.0" fill="none"/>
<path d="M1356.6 162.0L1380.0 126.0" stroke="#f0ece7" stroke-width="2.0" fill="none"/>
<path d="M1384.3 119.4L1393.8 104.8" stroke="#f0ece7" stroke-width="2.0" fill="none"/>
<path d="M1177.0 456.8L1184.4 445.3" stroke="#f0ece7" stroke-width="2.0" fill="none"/>
<path d="M1192.3 433.2L1203.3 416.3" stroke="#f0ece7" stroke-width="2.0" fill="none"/>
<path d="M1205.9 412.3L1226.0 381.3" stroke="#f0ece7" stroke-width="2.0" fill="none"/>
<path d="M1235.5 366.7L1247.1 348.8" stroke="#f0ece7" stroke-width="2.0" fill="none"/>
<path d="M1258.2 331.7L1265.3 320.8" stroke="#f0ece7" stroke-width="2.0" fill="none"/>
<path d="M1275.9 304.4L1289.9 282.9" stroke="#f0ece7" stroke-width="2.0" fill="none"/>
<path d="M1298.7 269.3L1320.1 236.4" stroke="#f0ece7" stroke-width="2.0" fill="none"/>
<path d="M1323.7 230.8L1346.7 195.4" stroke="#f0ece7" stroke-width="2.0" fill="none"/>
<path d="M1185.5 468.8L1206.0 437.2" stroke="#f0ece7" stroke-width="2.0" fill="none"/>
<path d="M1212.3 427.6L1224.4 408.9" stroke="#f0ece7" stroke-width="2.0" fill="none"/>
<path d="M1250.5 368.7L1257.5 358.0" stroke="#f0ece7" stroke-width="2.0" fill="none"/>
<path d="M1262.0 351.0L1285.3 315.1" stroke="#f0ece7" stroke-width="2.0" fill="none"/>
<path d="M1294.1 301.6L1313.7 271.3" stroke="#f0ece7" stroke-width="2.0" fill="none"/>
<path d="M1322.3 258.2L1342.7 226.7" stroke="#f0ece7" stroke-width="2.0" fill="none"/>
<path d="M1350.1 215.4L1360.4 199.4" stroke="#f0ece7" stroke-width="2.0" fill="none"/>
<path d="M1370.1 184.5L1377.4 173.3" stroke="#f0ece7" stroke-width="2.0" fill="none"/>
<path d="M1385.5 160.8L1407.6 126.7" stroke="#f0ece7" stroke-width="2.0" fill="none"/>
<path d="M1198.3 481.5L1207.6 467.1" stroke="#f0ece7" stroke-width="2.0" fill="none"/>
<path d="M1218.8 449.8L1231.7 430.0" stroke="#f0ece7" stroke-width="2.0" fill="none"/>
<path d="M1241.1 415.6L1264.1 380.2" stroke="#f0ece7" stroke-width="2.0" fill="none"/>
<path d="M1274.3 364.4L1288.4 342.7" stroke="#f0ece7" stroke-width="2.0" fill="none"/>
<path d="M1322.3 290.5L1336.7 268.3" stroke="#f0ece7" stroke-width="2.0" fill="none"/>
<path d="M1347.3 252.0L1370.4 216.4" stroke="#f0ece7" stroke-width="2.0" fill="none"/>
<path d="M1376.8 206.6L1382.9 197.1" stroke="#f0ece7" stroke-width="2.0" fill="none"/>
<path d="M1212.2 479.4L1226.7 457.1" stroke="#f0ece7" stroke-width="2.0" fill="none"/>
<path d="M1248.5 423.6L1268.0 393.4" stroke="#f0ece7" stroke-width="2.0" fill="none"/>
<path d="M1299.6 344.9L1322.0 310.4" stroke="#f0ece7" stroke-width="2.0" fill="none"/>
<path d="M1324.2 307.0L1332.6 294.1" stroke="#f0ece7" stroke-width="2.0" fill="none"/>
<path d="M1342.0 279.6L1363.2 246.9" stroke="#f0ece7" stroke-width="2.0" fill="none"/>
<path d="M1371.2 234.6L1394.7 198.5" stroke="#f0ece7" stroke-width="2.0" fill="none"/>
<path d="M1223.5 485.3L1233.9 469.3" stroke="#f0ece7" stroke-width="2.0" fill="none"/>
<path d="M1236.3 465.6L1251.6 442.1" stroke="#f0ece7" stroke-width="2.0" fill="none"/>
<path d="M1261.5 426.8L1285.4 389.9" stroke="#f0ece7" stroke-width="2.0" fill="none"/>
<path d="M1289.0 384.4L1305.4 359.2" stroke="#f0ece7" stroke-width="2.0" fill="none"/>
<path d="M1313.2 347.2L1328.3 324.0" stroke="#f0ece7" stroke-width="2.0" fill="none"/>
<path d="M1330.9 319.9L1351.5 288.2" stroke="#f0ece7" stroke-width="2.0" fill="none"/>
<path d="M1353.9 284.5L1359.5 275.9" stroke="#f0ece7" stroke-width="2.0" fill="none"/>
<path d="M1368.2 262.5L1379.3 245.4" stroke="#f0ece7" stroke-width="2.0" fill="none"/>
<path d="M1381.8 241.5L1399.2 214.7" stroke="#f0ece7" stroke-width="2.0" fill="none"/>
<path d="M1242.8 486.2L1252.8 470.7" stroke="#f0ece7" stroke-width="2.0" fill="none"/>
<path d="M1255.5 466.6L1269.2 445.5" stroke="#f0ece7" stroke-width="2.0" fill="none"/>
<path d="M1272.0 441.1L1283.6 423.3" stroke="#f0ece7" stroke-width="2.0" fill="none"/>
<path d="M1286.7 418.6L1297.0 402.7" stroke="#f0ece7" stroke-width="2.0" fill="none"/>
<path d="M1365.6 297.1L1385.1 267.0" stroke="#f0ece7" stroke-width="2.0" fill="none"/>
<path d="M1284.6 453.6L1304.1 423.5" stroke="#f0ece7" stroke-width="2.0" fill="none"/>
<path d="M1309.7 415.1L1319.2 400.4" stroke="#f0ece7" stroke-width="2.0" fill="none"/>
<path d="M1330.6 382.8L1353.4 347.7" stroke="#f0ece7" stroke-width="2.0" fill="none"/>
<path d="M1360.6 336.6L1384.8 299.4" stroke="#f0ece7" stroke-width="2.0" fill="none"/>
<path d="M1388.5 293.7L1398.9 277.7" stroke="#f0ece7" stroke-width="2.0" fill="none"/>
<path d="M1278.3 484.7L1293.7 461.1" stroke="#f0ece7" stroke-width="2.0" fill="none"/>
<path d="M1299.1 452.7L1322.5 416.7" stroke="#f0ece7" stroke-width="2.0" fill="none"/>
<path d="M1334.0 399.0L1349.7 374.9" stroke="#f0ece7" stroke-width="2.0" fill="none"/>
<path d="M1361.2 357.2L1371.0 342.0" stroke="#f0ece7" stroke-width="2.0" fill="none"/>
<path d="M1374.1 337.3L1381.5 325.8" stroke="#f0ece7" stroke-width="2.0" fill="none"/>
<path d="M1387.2 317.1L1396.6 302.6" stroke="#f0ece7" stroke-width="2.0" fill="none"/>
<path d="M1292.6 486.8L1298.4 477.8" stroke="#f0ece7" stroke-width="2.0" fill="none"/>
<path d="M1301.6 473.0L1315.4 451.7" stroke="#f0ece7" stroke-width="2.0" fill="none"/>
<path d="M1325.8 435.6L1338.7 415.8" stroke="#f0ece7" stroke-width="2.0" fill="none"/>
<path d="M1354.2 391.9L1365.1 375.0" stroke="#f0ece7" stroke-width="2.0" fill="none"/>
<path d="M1370.9 366.2L1394.1 330.5" stroke="#f0ece7" stroke-width="2.0" fill="none"/>
<path d="M1321.9 467.0L1329.5 455.3" stroke="#f0ece7" stroke-width="2.0" fill="none"/>
<path d="M1336.5 444.6L1344.3 432.5" stroke="#f0ece7" stroke-width="2.0" fill="none"/>
<path d="M1348.7 425.7L1356.0 414.5" stroke="#f0ece7" stroke-width="2.0" fill="none"/>
<path d="M1366.6 398.2L1382.6 373.5" stroke="#f0ece7" stroke-width="2.0" fill="none"/>
<path d="M1392.3 358.6L1413.9 325.4" stroke="#f0ece7" stroke-width="2.0" fill="none"/>
<path d="M1356.8 442.4L1372.0 419.0" stroke="#f0ece7" stroke-width="2.0" fill="none"/>
<path d="M1380.1 406.6L1399.3 377.0" stroke="#f0ece7" stroke-width="2.0" fill="none"/>
<path d="M1354.1 466.7L1374.1 436.0" stroke="#f0ece7" stroke-width="2.0" fill="none"/>
<path d="M1377.9 430.1L1384.5 420.1" stroke="#f0ece7" stroke-width="2.0" fill="none"/>
<path d="M1356.2 486.3L1367.6 468.7" stroke="#f0ece7" stroke-width="2.0" fill="none"/>
<path d="M1371.0 463.5L1383.4 444.4" stroke="#f0ece7" stroke-width="2.0" fill="none"/>
<path d="M1390.5 433.5L1406.3 409.2" stroke="#f0ece7" stroke-width="2.0" fill="none"/>
<path d="M1387.4 465.1L1398.7 447.7" stroke="#f0ece7" stroke-width="2.0" fill="none"/>
<path d="M1388.2 119.5L1424.2 142.9" stroke="#f0ece7" stroke-width="2.0" fill="none"/>
<path d="M1383.3 128.2L1392.2 133.9" stroke="#f0ece7" stroke-width="2.0" fill="none"/>
<path d="M1357.2 121.8L1372.1 131.5" stroke="#f0ece7" stroke-width="2.0" fill="none"/>
<path d="M1382.5 138.3L1400.9 150.2" stroke="#f0ece7" stroke-width="2.0" fill="none"/>
<path d="M1323.0 115.5L1341.4 127.4" stroke="#f0ece7" stroke-width="2.0" fill="none"/>
<path d="M1349.1 132.4L1358.7 138.7" stroke="#f0ece7" stroke-width="2.0" fill="none"/>
<path d="M1336.1 134.1L1351.0 143.8" stroke="#f0ece7" stroke-width="2.0" fill="none"/>
<path d="M1356.8 147.5L1374.0 158.7" stroke="#f0ece7" stroke-width="2.0" fill="none"/>
<path d="M1390.7 169.6L1400.9 176.2" stroke="#f0ece7" stroke-width="2.0" fill="none"/>
<path d="M1320.6 136.1L1338.6 147.8" stroke="#f0ece7" stroke-width="2.0" fill="none"/>
<path d="M1351.5 156.2L1381.7 175.8" stroke="#f0ece7" stroke-width="2.0" fill="none"/>
<path d="M1256.2 114.3L1287.4 134.6" stroke="#f0ece7" stroke-width="2.0" fill="none"/>
<path d="M1299.3 142.3L1330.6 162.6" stroke="#f0ece7" stroke-width="2.0" fill="none"/>
<path d="M1338.8 168.0L1369.7 188.0" stroke="#f0ece7" stroke-width="2.0" fill="none"/>
<path d="M1379.7 194.5L1388.6 200.3" stroke="#f0ece7" stroke-width="2.0" fill="none"/>
<path d="M1253.9 122.6L1284.2 142.3" stroke="#f0ece7" stroke-width="2.0" fill="none"/>
<path d="M1301.7 153.7L1327.2 170.2" stroke="#f0ece7" stroke-width="2.0" fill="none"/>
<path d="M1338.3 177.4L1348.3 183.9" stroke="#f0ece7" stroke-width="2.0" fill="none"/>
<path d="M1360.6 191.9L1394.5 213.9" stroke="#f0ece7" stroke-width="2.0" fill="none"/>
<path d="M1274.3 146.6L1311.2 170.6" stroke="#f0ece7" stroke-width="2.0" fill="none"/>
<path d="M1323.5 178.6L1353.6 198.1" stroke="#f0ece7" stroke-width="2.0" fill="none"/>
<path d="M1357.3 200.6L1388.3 220.7" stroke="#f0ece7" stroke-width="2.0" fill="none"/>
<path d="M1203.9 115.0L1230.9 132.6" stroke="#f0ece7" stroke-width="2.0" fill="none"/>
<path d="M1248.7 144.1L1263.2 153.5" stroke="#f0ece7" stroke-width="2.0" fill="none"/>
<path d="M1278.9 163.7L1306.9 181.9" stroke="#f0ece7" stroke-width="2.0" fill="none"/>
<path d="M1323.9 193.0L1354.9 213.1" stroke="#f0ece7" stroke-width="2.0" fill="none"/>
<path d="M1371.0 223.5L1396.4 240.1" stroke="#f0ece7" stroke-width="2.0" fill="none"/>
<path d="M1218.4 143.2L1231.7 151.9" stroke="#f0ece7" stroke-width="2.0" fill="none"/>
<path d="M1247.9 162.4L1261.7 171.3" stroke="#f0ece7" stroke-width="2.0" fill="none"/>
<path d="M1270.2 176.8L1302.5 197.8" stroke="#f0ece7" stroke-width="2.0" fill="none"/>
<path d="M1187.2 143.3L1222.1 166.0" stroke="#f0ece7" stroke-width="2.0" fill="none"/>
<path d="M1237.7 176.1L1273.5 199.3" stroke="#f0ece7" stroke-width="2.0" fill="none"/>
<path d="M1278.4 202.5L1291.4 211.0" stroke="#f0ece7" stroke-width="2.0" fill="none"/>
<path d="M1304.5 219.4L1324.4 232.4" stroke="#f0ece7" stroke-width="2.0" fill="none"/>
<path d="M1331.2 236.8L1355.1 252.3" stroke="#f0ece7" stroke-width="2.0" fill="none"/>
<path d="M1371.6 263.0L1385.3 271.9" stroke="#f0ece7" stroke-width="2.0" fill="none"/>
<path d="M1145.8 136.6L1180.9 159.4" stroke="#f0ece7" stroke-width="2.0" fill="none"/>
<path d="M1188.1 164.1L1215.9 182.1" stroke="#f0ece7" stroke-width="2.0" fill="none"/>
<path d="M1229.3 190.8L1247.0 202.3" stroke="#f0ece7" stroke-width="2.0" fill="none"/>
<path d="M1256.0 208.2L1282.1 225.1" stroke="#f0ece7" stroke-width="2.0" fill="none"/>
<path d="M1325.5 253.3L1358.6 274.8" stroke="#f0ece7" stroke-width="2.0" fill="none"/>
<path d="M1368.1 281.0L1377.2 286.9" stroke="#f0ece7" stroke-width="2.0" fill="none"/>
<path d="M1388.3 294.1L1399.4 301.3" stroke="#f0ece7" stroke-width="2.0" fill="none"/>
<path d="M1113.5 133.6L1146.7 155.2" stroke="#f0ece7" stroke-width="2.0" fill="none"/>
<path d="M1151.5 158.3L1178.0 175.5" stroke="#f0ece7" stroke-width="2.0" fill="none"/>
<path d="M1194.4 186.1L1226.6 207.1" stroke="#f0ece7" stroke-width="2.0" fill="none"/>
<path d="M1238.7 214.9L1275.7 238.9" stroke="#f0ece7" stroke-width="2.0" fill="none"/>
<path d="M1292.7 250.0L1325.0 270.9" stroke="#f0ece7" stroke-width="2.0" fill="none"/>
<path d="M1366.7 298.0L1378.8 305.9" stroke="#f0ece7" stroke-width="2.0" fill="none"/>
<path d="M1384.2 309.4L1413.9 328.7" stroke="#f0ece7" stroke-width="2.0" fill="none"/>
<path d="M1080.2 129.8L1117.4 153.9" stroke="#f0ece7" stroke-width="2.0" fill="none"/>
<path d="M1125.8 159.4L1143.0 170.6" stroke="#f0ece7" stroke-width="2.0" fill="none"/>
<path d="M1160.6 182.0L1188.1 199.8" stroke="#f0ece7" stroke-width="2.0" fill="none"/>
<path d="M1203.5 209.8L1226.6 224.9" stroke="#f0ece7" stroke-width="2.0" fill="none"/>
<path d="M1242.5 235.2L1261.0 247.2" stroke="#f0ece7" stroke-width="2.0" fill="none"/>
<path d="M1271.3 253.9L1296.2 270.0" stroke="#f0ece7" stroke-width="2.0" fill="none"/>
<path d="M1309.4 278.7L1342.1 299.9" stroke="#f0ece7" stroke-width="2.0" fill="none"/>
<path d="M1358.5 310.5L1389.2 330.5" stroke="#f0ece7" stroke-width="2.0" fill="none"/>
<path d="M1039.0 118.2L1063.7 134.3" stroke="#f0ece7" stroke-width="2.0" fill="none"/>
<path d="M1098.5 156.9L1134.4 180.2" stroke="#f0ece7" stroke-width="2.0" fill="none"/>
<path d="M1139.0 183.2L1163.6 199.2" stroke="#f0ece7" stroke-width="2.0" fill="none"/>
<path d="M1179.2 209.3L1216.6 233.6" stroke="#f0ece7" stroke-width="2.0" fill="none"/>
<path d="M1224.5 238.7L1237.9 247.4" stroke="#f0ece7" stroke-width="2.0" fill="none"/>
<path d="M1252.8 257.1L1268.2 267.1" stroke="#f0ece7" stroke-width="2.0" fill="none"/>
<path d="M1285.4 278.2L1303.5 290.0" stroke="#f0ece7" stroke-width="2.0" fill="none"/>
<path d="M1351.3 321.0L1370.1 333.2" stroke="#f0ece7" stroke-width="2.0" fill="none"/>
<path d="M1383.4 341.9L1414.5 362.1" stroke="#f0ece7" stroke-width="2.0" fill="none"/>
<path d="M1045.5 133.8L1073.4 151.9" stroke="#f0ece7" stroke-width="2.0" fill="none"/>
<path d="M1088.4 161.7L1125.0 185.5" stroke="#f0ece7" stroke-width="2.0" fill="none"/>
<path d="M1132.2 190.1L1159.8 208.0" stroke="#f0ece7" stroke-width="2.0" fill="none"/>
<path d="M1171.3 215.5L1182.2 222.6" stroke="#f0ece7" stroke-width="2.0" fill="none"/>
<path d="M1186.4 225.3L1195.6 231.3" stroke="#f0ece7" stroke-width="2.0" fill="none"/>
<path d="M1210.1 240.7L1235.0 256.9" stroke="#f0ece7" stroke-width="2.0" fill="none"/>
<path d="M1241.7 261.2L1277.6 284.5" stroke="#f0ece7" stroke-width="2.0" fill="none"/>
<path d="M1320.3 312.3L1344.2 327.8" stroke="#f0ece7" stroke-width="2.0" fill="none"/>
<path d="M1350.9 332.2L1384.7 354.1" stroke="#f0ece7" stroke-width="2.0" fill="none"/>
<path d="M1026.3 136.1L1039.2 144.4" stroke="#f0ece7" stroke-width="2.0" fill="none"/>
<path d="M1042.8 146.8L1060.6 158.3" stroke="#f0ece7" stroke-width="2.0" fill="none"/>
<path d="M1063.9 160.5L1090.0 177.4" stroke="#f0ece7" stroke-width="2.0" fill="none"/>
<path d="M1107.1 188.5L1125.7 200.6" stroke="#f0ece7" stroke-width="2.0" fill="none"/>
<path d="M1142.8 211.7L1155.6 220.0" stroke="#f0ece7" stroke-width="2.0" fill="none"/>
<path d="M1164.0 225.5L1193.3 244.5" stroke="#f0ece7" stroke-width="2.0" fill="none"/>
<path d="M1206.6 253.1L1216.3 259.4" stroke="#f0ece7" stroke-width="2.0" fill="none"/>
<path d="M1226.9 266.3L1250.3 281.5" stroke="#f0ece7" stroke-width="2.0" fill="none"/>
<path d="M1256.4 285.5L1290.8 307.8" stroke="#f0ece7" stroke-width="2.0" fill="none"/>
<path d="M1333.2 335.3L1348.8 345.5" stroke="#f0ece7" stroke-width="2.0" fill="none"/>
<path d="M1351.8 347.4L1362.7 354.5" stroke="#f0ece7" stroke-width="2.0" fill="none"/>
<path d="M974.8 117.6L1003.0 136.0" stroke="#f0ece7" stroke-width="2.0" fill="none"/>
<path d="M1019.0 146.3L1032.3 155.0" stroke="#f0ece7" stroke-width="2.0" fill="none"/>
<path d="M1037.8 158.6L1068.4 178.4" stroke="#f0ece7" stroke-width="2.0" fill="none"/>
<path d="M1076.8 183.9L1099.4 198.5" stroke="#f0ece7" stroke-width="2.0" fill="none"/>
<path d="M1109.0 204.8L1146.4 229.1" stroke="#f0ece7" stroke-width="2.0" fill="none"/>
<path d="M1157.2 236.1L1171.3 245.3" stroke="#f0ece7" stroke-width="2.0" fill="none"/>
<path d="M1174.0 247.0L1187.6 255.8" stroke="#f0ece7" stroke-width="2.0" fill="none"/>
<path d="M1194.0 260.0L1226.7 281.2" stroke="#f0ece7" stroke-width="2.0" fill="none"/>
<path d="M1313.5 337.6L1351.0 361.9" stroke="#f0ece7" stroke-width="2.0" fill="none"/>
<path d="M947.8 117.0L978.7 137.1" stroke="#f0ece7" stroke-width="2.0" fill="none"/>
<path d="M993.1 146.4L1005.7 154.6" stroke="#f0ece7" stroke-width="2.0" fill="none"/>
<path d="M1085.3 206.3L1095.9 213.2" stroke="#f0ece7" stroke-width="2.0" fill="none"/>
<path d="M1110.5 222.7L1133.9 237.9" stroke="#f0ece7" stroke-width="2.0" fill="none"/>
<path d="M1152.0 249.7L1170.8 261.8" stroke="#f0ece7" stroke-width="2.0" fill="none"/>
<path d="M1212.6 289.0L1222.4 295.4" stroke="#f0ece7" stroke-width="2.0" fill="none"/>
<path d="M1225.0 297.1L1253.9 315.8" stroke="#f0ece7" stroke-width="2.0" fill="none"/>
<path d="M1296.1 343.2L1310.9 352.8" stroke="#f0ece7" stroke-width="2.0" fill="none"/>
<path d="M1347.0 376.3L1356.2 382.2" stroke="#f0ece7" stroke-width="2.0" fill="none"/>
<path d="M1369.3 390.8L1381.1 398.4" stroke="#f0ece7" stroke-width="2.0" fill="none"/>
<path d="M935.3 126.6L950.2 136.2" stroke="#f0ece7" stroke-width="2.0" fill="none"/>
<path d="M962.8 144.4L976.3 153.2" stroke="#f0ece7" stroke-width="2.0" fill="none"/>
<path d="M992.0 163.4L1013.2 177.2" stroke="#f0ece7" stroke-width="2.0" fill="none"/>
<path d="M1082.0 221.8L1091.0 227.7" stroke="#f0ece7" stroke-width="2.0" fill="none"/>
<path d="M1101.0 234.2L1128.3 251.9" stroke="#f0ece7" stroke-width="2.0" fill="none"/>
<path d="M1146.0 263.4L1180.2 285.6" stroke="#f0ece7" stroke-width="2.0" fill="none"/>
<path d="M1189.6 291.8L1218.3 310.3" stroke="#f0ece7" stroke-width="2.0" fill="none"/>
<path d="M1238.4 323.4L1251.5 331.9" stroke="#f0ece7" stroke-width="2.0" fill="none"/>
<path d="M1265.3 340.9L1300.4 363.7" stroke="#f0ece7" stroke-width="2.0" fill="none"/>
<path d="M1306.3 367.5L1320.8 376.9" stroke="#f0ece7" stroke-width="2.0" fill="none"/>
<path d="M1330.5 383.2L1351.0 396.5" stroke="#f0ece7" stroke-width="2.0" fill="none"/>
<path d="M1360.9 403.0L1391.8 423.0" stroke="#f0ece7" stroke-width="2.0" fill="none"/>
<path d="M890.2 117.0L920.5 136.7" stroke="#f0ece7" stroke-width="2.0" fill="none"/>
<path d="M937.4 147.7L949.3 155.4" stroke="#f0ece7" stroke-width="2.0" fill="none"/>
<path d="M966.0 166.3L978.9 174.6" stroke="#f0ece7" stroke-width="2.0" fill="none"/>
<path d="M987.9 180.5L1009.9 194.7" stroke="#f0ece7" stroke-width="2.0" fill="none"/>
<path d="M1075.6 237.4L1088.8 246.0" stroke="#f0ece7" stroke-width="2.0" fill="none"/>
<path d="M1093.5 249.0L1107.7 258.3" stroke="#f0ece7" stroke-width="2.0" fill="none"/>
<path d="M1120.8 266.8L1157.2 290.4" stroke="#f0ece7" stroke-width="2.0" fill="none"/>
<path d="M1163.8 294.7L1200.7 318.7" stroke="#f0ece7" stroke-width="2.0" fill="none"/>
<path d="M1213.9 327.2L1247.8 349.3" stroke="#f0ece7" stroke-width="2.0" fill="none"/>
<path d="M1289.2 376.1L1322.8 397.9" stroke="#f0ece7" stroke-width="2.0" fill="none"/>
<path d="M1334.5 405.5L1347.6 414.0" stroke="#f0ece7" stroke-width="2.0" fill="none"/>
<path d="M1359.1 421.5L1392.9 443.5" stroke="#f0ece7" stroke-width="2.0" fill="none"/>
<path d="M907.7 145.8L930.1 160.3" stroke="#f0ece7" stroke-width="2.0" fill="none"/>
<path d="M966.5 184.0L995.0 202.5" stroke="#f0ece7" stroke-width="2.0" fill="none"/>
<path d="M1045.7 235.5L1069.6 251.0" stroke="#f0ece7" stroke-width="2.0" fill="none"/>
<path d="M1080.1 257.7L1093.5 266.5" stroke="#f0ece7" stroke-width="2.0" fill="none"/>
<path d="M1111.8 278.4L1139.3 296.2" stroke="#f0ece7" stroke-width="2.0" fill="none"/>
<path d="M1148.9 302.4L1184.5 325.6" stroke="#f0ece7" stroke-width="2.0" fill="none"/>
<path d="M1194.2 331.9L1212.6 343.8" stroke="#f0ece7" stroke-width="2.0" fill="none"/>
<path d="M1256.1 372.1L1293.1 396.1" stroke="#f0ece7" stroke-width="2.0" fill="none"/>
<path d="M1307.8 405.6L1321.8 414.7" stroke="#f0ece7" stroke-width="2.0" fill="none"/>
<path d="M842.4 122.8L857.0 132.3" stroke="#f0ece7" stroke-width="2.0" fill="none"/>
<path d="M884.7 150.3L898.3 159.1" stroke="#f0ece7" stroke-width="2.0" fill="none"/>
<path d="M916.4 170.8L941.4 187.1" stroke="#f0ece7" stroke-width="2.0" fill="none"/>
<path d="M957.2 197.3L992.2 220.1" stroke="#f0ece7" stroke-width="2.0" fill="none"/>
<path d="M1002.0 226.4L1019.1 237.5" stroke="#f0ece7" stroke-width="2.0" fill="none"/>
<path d="M1084.3 279.9L1111.1 297.2" stroke="#f0ece7" stroke-width="2.0" fill="none"/>
<path d="M1125.4 306.6L1159.5 328.7" stroke="#f0ece7" stroke-width="2.0" fill="none"/>
<path d="M1177.2 340.2L1214.0 364.1" stroke="#f0ece7" stroke-width="2.0" fill="none"/>
<path d="M1232.2 375.9L1259.4 393.6" stroke="#f0ece7" stroke-width="2.0" fill="none"/>
<path d="M1275.6 404.1L1287.1 411.6" stroke="#f0ece7" stroke-width="2.0" fill="none"/>
<path d="M1303.0 421.9L1332.3 440.9" stroke="#f0ece7" stroke-width="2.0" fill="none"/>
<path d="M1339.8 445.8L1356.6 456.7" stroke="#f0ece7" stroke-width="2.0" fill="none"/>
<path d="M1384.3 474.7L1420.8 498.4" stroke="#f0ece7" stroke-width="2.0" fill="none"/>
<path d="M895.6 169.1L918.9 184.2" stroke="#f0ece7" stroke-width="2.0" fill="none"/>
<path d="M925.9 188.7L945.6 201.5" stroke="#f0ece7" stroke-width="2.0" fill="none"/>
<path d="M988.1 229.2L1010.3 243.6" stroke="#f0ece7" stroke-width="2.0" fill="none"/>
<path d="M1027.9 255.0L1050.7 269.8" stroke="#f0ece7" stroke-width="2.0" fill="none"/>
<path d="M1059.7 275.7L1086.5 293.0" stroke="#f0ece7" stroke-width="2.0" fill="none"/>
<path d="M1094.6 298.3L1106.4 306.0" stroke="#f0ece7" stroke-width="2.0" fill="none"/>
<path d="M1121.2 315.5L1150.8 334.8" stroke="#f0ece7" stroke-width="2.0" fill="none"/>
<path d="M1157.2 339.0L1180.1 353.8" stroke="#f0ece7" stroke-width="2.0" fill="none"/>
<path d="M1196.8 364.7L1207.2 371.4" stroke="#f0ece7" stroke-width="2.0" fill="none"/>
<path d="M1215.7 377.0L1253.4 401.4" stroke="#f0ece7" stroke-width="2.0" fill="none"/>
<path d="M1277.8 417.2L1304.7 434.7" stroke="#f0ece7" stroke-width="2.0" fill="none"/>
<path d="M1317.3 442.9L1346.4 461.8" stroke="#f0ece7" stroke-width="2.0" fill="none"/>
<path d="M1358.6 469.7L1394.3 492.9" stroke="#f0ece7" stroke-width="2.0" fill="none"/>
<path d="M811.3 133.0L847.9 156.8" stroke="#f0ece7" stroke-width="2.0" fill="none"/>
<path d="M854.1 160.8L877.0 175.7" stroke="#f0ece7" stroke-width="2.0" fill="none"/>
<path d="M889.9 184.0L913.1 199.2" stroke="#f0ece7" stroke-width="2.0" fill="none"/>
<path d="M930.0 210.1L939.5 216.3" stroke="#f0ece7" stroke-width="2.0" fill="none"/>
<path d="M946.7 220.9L971.7 237.2" stroke="#f0ece7" stroke-width="2.0" fill="none"/>
<path d="M988.8 248.3L1014.1 264.7" stroke="#f0ece7" stroke-width="2.0" fill="none"/>
<path d="M1017.8 267.1L1046.8 286.0" stroke="#f0ece7" stroke-width="2.0" fill="none"/>
<path d="M1060.8 295.0L1075.5 304.6" stroke="#f0ece7" stroke-width="2.0" fill="none"/>
<path d="M1087.0 312.0L1123.1 335.5" stroke="#f0ece7" stroke-width="2.0" fill="none"/>
<path d="M1140.2 346.6L1161.9 360.7" stroke="#f0ece7" stroke-width="2.0" fill="none"/>
<path d="M1176.2 370.0L1189.7 378.7" stroke="#f0ece7" stroke-width="2.0" fill="none"/>
<path d="M1202.0 386.8L1217.2 396.6" stroke="#f0ece7" stroke-width="2.0" fill="none"/>
<path d="M1221.9 399.7L1250.0 417.9" stroke="#f0ece7" stroke-width="2.0" fill="none"/>
<path d="M1265.0 427.6L1273.8 433.3" stroke="#f0ece7" stroke-width="2.0" fill="none"/>
<path d="M1278.5 436.4L1298.6 449.5" stroke="#f0ece7" stroke-width="2.0" fill="none"/>
<path d="M1305.9 454.2L1335.5 473.4" stroke="#f0ece7" stroke-width="2.0" fill="none"/>
<path d="M1348.1 481.6L1369.8 495.7" stroke="#f0ece7" stroke-width="2.0" fill="none"/>
<path d="M833.6 163.5L854.7 177.2" stroke="#f0ece7" stroke-width="2.0" fill="none"/>
<path d="M866.3 184.7L882.4 195.2" stroke="#f0ece7" stroke-width="2.0" fill="none"/>
<path d="M892.2 201.5L907.7 211.6" stroke="#f0ece7" stroke-width="2.0" fill="none"/>
<path d="M1034.3 293.8L1054.9 307.2" stroke="#f0ece7" stroke-width="2.0" fill="none"/>
<path d="M1059.0 309.8L1096.5 334.2" stroke="#f0ece7" stroke-width="2.0" fill="none"/>
<path d="M1102.9 338.3L1115.1 346.3" stroke="#f0ece7" stroke-width="2.0" fill="none"/>
<path d="M1120.7 349.9L1146.0 366.3" stroke="#f0ece7" stroke-width="2.0" fill="none"/>
<path d="M1156.7 373.3L1190.6 395.3" stroke="#f0ece7" stroke-width="2.0" fill="none"/>
<path d="M1199.3 401.0L1219.7 414.2" stroke="#f0ece7" stroke-width="2.0" fill="none"/>
<path d="M1230.7 421.3L1265.9 444.2" stroke="#f0ece7" stroke-width="2.0" fill="none"/>
<path d="M1277.5 451.7L1311.8 474.0" stroke="#f0ece7" stroke-width="2.0" fill="none"/>
<path d="M1323.4 481.6L1337.3 490.5" stroke="#f0ece7" stroke-width="2.0" fill="none"/>
<path d="M839.9 179.0L862.6 193.7" stroke="#f0ece7" stroke-width="2.0" fill="none"/>
<path d="M908.4 223.5L922.9 232.9" stroke="#f0ece7" stroke-width="2.0" fill="none"/>
<path d="M937.5 242.4L973.6 265.8" stroke="#f0ece7" stroke-width="2.0" fill="none"/>
<path d="M982.2 271.4L995.6 280.1" stroke="#f0ece7" stroke-width="2.0" fill="none"/>
<path d="M1006.2 287.0L1035.1 305.7" stroke="#f0ece7" stroke-width="2.0" fill="none"/>
<path d="M1047.2 313.6L1058.6 321.0" stroke="#f0ece7" stroke-width="2.0" fill="none"/>
<path d="M1075.4 331.9L1087.5 339.8" stroke="#f0ece7" stroke-width="2.0" fill="none"/>
<path d="M1132.8 369.2L1165.6 390.5" stroke="#f0ece7" stroke-width="2.0" fill="none"/>
<path d="M1185.8 403.6L1209.3 418.9" stroke="#f0ece7" stroke-width="2.0" fill="none"/>
<path d="M1212.3 420.8L1230.6 432.7" stroke="#f0ece7" stroke-width="2.0" fill="none"/>
<path d="M1245.5 442.4L1264.7 454.9" stroke="#f0ece7" stroke-width="2.0" fill="none"/>
<path d="M1273.2 460.4L1292.6 473.0" stroke="#f0ece7" stroke-width="2.0" fill="none"/>
<path d="M1299.9 477.7L1312.2 485.7" stroke="#f0ece7" stroke-width="2.0" fill="none"/>
<path d="M800.3 171.9L828.6 190.3" stroke="#f0ece7" stroke-width="2.0" fill="none"/>
<path d="M832.9 193.2L841.4 198.7" stroke="#f0ece7" stroke-width="2.0" fill="none"/>
<path d="M871.5 218.2L899.6 236.4" stroke="#f0ece7" stroke-width="2.0" fill="none"/>
<path d="M914.4 246.1L928.0 254.9" stroke="#f0ece7" stroke-width="2.0" fill="none"/>
<path d="M945.4 266.2L973.5 284.5" stroke="#f0ece7" stroke-width="2.0" fill="none"/>
<path d="M1027.3 319.4L1056.4 338.3" stroke="#f0ece7" stroke-width="2.0" fill="none"/>
<path d="M1065.8 344.4L1095.1 363.4" stroke="#f0ece7" stroke-width="2.0" fill="none"/>
<path d="M1110.3 373.3L1123.1 381.6" stroke="#f0ece7" stroke-width="2.0" fill="none"/>
<path d="M1132.6 387.8L1167.2 410.2" stroke="#f0ece7" stroke-width="2.0" fill="none"/>
<path d="M1178.7 417.7L1204.5 434.5" stroke="#f0ece7" stroke-width="2.0" fill="none"/>
<path d="M1219.3 444.1L1229.0 450.4" stroke="#f0ece7" stroke-width="2.0" fill="none"/>
<path d="M1274.0 479.6L1310.4 503.2" stroke="#f0ece7" stroke-width="2.0" fill="none"/>
<path d="M801.9 183.7L827.1 200.1" stroke="#f0ece7" stroke-width="2.0" fill="none"/>
<path d="M833.7 204.4L847.1 213.1" stroke="#f0ece7" stroke-width="2.0" fill="none"/>
<path d="M856.1 218.9L868.1 226.7" stroke="#f0ece7" stroke-width="2.0" fill="none"/>
<path d="M885.3 237.9L896.0 244.9" stroke="#f0ece7" stroke-width="2.0" fill="none"/>
<path d="M903.0 249.4L930.5 267.3" stroke="#f0ece7" stroke-width="2.0" fill="none"/>
<path d="M962.2 287.8L973.7 295.3" stroke="#f0ece7" stroke-width="2.0" fill="none"/>
<path d="M979.3 298.9L1014.8 322.0" stroke="#f0ece7" stroke-width="2.0" fill="none"/>
<path d="M1018.1 324.2L1047.5 343.2" stroke="#f0ece7" stroke-width="2.0" fill="none"/>
<path d="M1061.0 352.0L1087.0 368.9" stroke="#f0ece7" stroke-width="2.0" fill="none"/>
<path d="M1104.3 380.1L1120.6 390.7" stroke="#f0ece7" stroke-width="2.0" fill="none"/>
<path d="M1134.7 399.9L1155.6 413.4" stroke="#f0ece7" stroke-width="2.0" fill="none"/>
<path d="M1160.6 416.7L1187.4 434.1" stroke="#f0ece7" stroke-width="2.0" fill="none"/>
<path d="M1203.5 444.5L1217.2 453.4" stroke="#f0ece7" stroke-width="2.0" fill="none"/>
<path d="M1230.5 462.1L1256.2 478.7" stroke="#f0ece7" stroke-width="2.0" fill="none"/>
<path d="M1268.9 487.0L1290.2 500.8" stroke="#f0ece7" stroke-width="2.0" fill="none"/>
<path d="M849.2 234.8L878.7 253.9" stroke="#f0ece7" stroke-width="2.0" fill="none"/>
<path d="M916.8 278.7L946.3 297.9" stroke="#f0ece7" stroke-width="2.0" fill="none"/>
<path d="M957.5 305.2L989.3 325.8" stroke="#f0ece7" stroke-width="2.0" fill="none"/>
<path d="M992.5 327.8L1003.0 334.7" stroke="#f0ece7" stroke-width="2.0" fill="none"/>
<path d="M1012.2 340.7L1041.6 359.7" stroke="#f0ece7" stroke-width="2.0" fill="none"/>
<path d="M1086.8 389.1L1108.6 403.3" stroke="#f0ece7" stroke-width="2.0" fill="none"/>
<path d="M1111.5 405.2L1122.6 412.3" stroke="#f0ece7" stroke-width="2.0" fill="none"/>
<path d="M1154.9 433.3L1177.6 448.1" stroke="#f0ece7" stroke-width="2.0" fill="none"/>
<path d="M796.5 211.6L820.0 227.0" stroke="#f0ece7" stroke-width="2.0" fill="none"/>
<path d="M837.9 238.6L866.3 257.0" stroke="#f0ece7" stroke-width="2.0" fill="none"/>
<path d="M880.2 266.0L910.2 285.5" stroke="#f0ece7" stroke-width="2.0" fill="none"/>
<path d="M919.3 291.4L946.5 309.1" stroke="#f0ece7" stroke-width="2.0" fill="none"/>
<path d="M961.7 319.0L983.8 333.3" stroke="#f0ece7" stroke-width="2.0" fill="none"/>
<path d="M1001.2 344.6L1022.8 358.6" stroke="#f0ece7" stroke-width="2.0" fill="none"/>
<path d="M1045.3 373.3L1058.8 382.0" stroke="#f0ece7" stroke-width="2.0" fill="none"/>
<path d="M1073.1 391.3L1098.3 407.7" stroke="#f0ece7" stroke-width="2.0" fill="none"/>
<path d="M1105.6 412.4L1142.9 436.7" stroke="#f0ece7" stroke-width="2.0" fill="none"/>
<path d="M1158.8 446.9L1181.4 461.6" stroke="#f0ece7" stroke-width="2.0" fill="none"/>
<path d="M1194.2 469.9L1211.8 481.4" stroke="#f0ece7" stroke-width="2.0" fill="none"/>
<path d="M1227.9 491.8L1249.2 505.6" stroke="#f0ece7" stroke-width="2.0" fill="none"/>
<path d="M857.1 264.9L883.0 281.7" stroke="#f0ece7" stroke-width="2.0" fill="none"/>
<path d="M898.2 291.5L920.2 305.8" stroke="#f0ece7" stroke-width="2.0" fill="none"/>
<path d="M935.2 315.6L956.2 329.2" stroke="#f0ece7" stroke-width="2.0" fill="none"/>
<path d="M964.3 334.5L996.8 355.5" stroke="#f0ece7" stroke-width="2.0" fill="none"/>
<path d="M1009.2 363.6L1019.4 370.3" stroke="#f0ece7" stroke-width="2.0" fill="none"/>
<path d="M1030.4 377.4L1042.0 384.9" stroke="#f0ece7" stroke-width="2.0" fill="none"/>
<path d="M1046.3 387.7L1063.2 398.7" stroke="#f0ece7" stroke-width="2.0" fill="none"/>
<path d="M1069.5 402.8L1095.7 419.8" stroke="#f0ece7" stroke-width="2.0" fill="none"/>
<path d="M1100.0 422.6L1122.8 437.4" stroke="#f0ece7" stroke-width="2.0" fill="none"/>
<path d="M1135.6 445.7L1154.9 458.3" stroke="#f0ece7" stroke-width="2.0" fill="none"/>
<path d="M1157.8 460.1L1187.1 479.1" stroke="#f0ece7" stroke-width="2.0" fill="none"/>
<path d="M1202.9 489.4L1226.8 504.9" stroke="#f0ece7" stroke-width="2.0" fill="none"/>
<path d="M808.7 249.0L824.0 258.9" stroke="#f0ece7" stroke-width="2.0" fill="none"/>
<path d="M828.4 261.8L864.9 285.5" stroke="#f0ece7" stroke-width="2.0" fill="none"/>
<path d="M881.4 296.2L915.5 318.3" stroke="#f0ece7" stroke-width="2.0" fill="none"/>
<path d="M922.0 322.5L938.5 333.2" stroke="#f0ece7" stroke-width="2.0" fill="none"/>
<path d="M946.2 338.2L975.4 357.3" stroke="#f0ece7" stroke-width="2.0" fill="none"/>
<path d="M984.1 362.9L1007.7 378.2" stroke="#f0ece7" stroke-width="2.0" fill="none"/>
<path d="M1016.0 383.6L1053.2 407.8" stroke="#f0ece7" stroke-width="2.0" fill="none"/>
<path d="M1094.4 434.5L1107.8 443.2" stroke="#f0ece7" stroke-width="2.0" fill="none"/>
<path d="M1119.0 450.5L1132.4 459.2" stroke="#f0ece7" stroke-width="2.0" fill="none"/>
<path d="M1145.1 467.5L1172.1 485.0" stroke="#f0ece7" stroke-width="2.0" fill="none"/>
<path d="M794.8 257.4L803.8 263.3" stroke="#f0ece7" stroke-width="2.0" fill="none"/>
<path d="M813.6 269.6L826.8 278.1" stroke="#f0ece7" stroke-width="2.0" fill="none"/>
<path d="M843.1 288.7L858.7 298.9" stroke="#f0ece7" stroke-width="2.0" fill="none"/>
<path d="M904.6 328.7L932.2 346.6" stroke="#f0ece7" stroke-width="2.0" fill="none"/>
<path d="M940.0 351.7L965.8 368.4" stroke="#f0ece7" stroke-width="2.0" fill="none"/>
<path d="M981.8 378.8L1002.6 392.3" stroke="#f0ece7" stroke-width="2.0" fill="none"/>
<path d="M1010.8 397.7L1028.0 408.8" stroke="#f0ece7" stroke-width="2.0" fill="none"/>
<path d="M1075.3 439.5L1085.3 446.1" stroke="#f0ece7" stroke-width="2.0" fill="none"/>
<path d="M1124.4 471.4L1136.6 479.4" stroke="#f0ece7" stroke-width="2.0" fill="none"/>
<path d="M1146.0 485.4L1171.9 502.3" stroke="#f0ece7" stroke-width="2.0" fill="none"/>
<path d="M821.4 285.9L854.3 307.3" stroke="#f0ece7" stroke-width="2.0" fill="none"/>
<path d="M919.6 349.7L937.4 361.3" stroke="#f0ece7" stroke-width="2.0" fill="none"/>
<path d="M951.4 370.4L984.1 391.6" stroke="#f0ece7" stroke-width="2.0" fill="none"/>
<path d="M988.1 394.2L1023.4 417.1" stroke="#f0ece7" stroke-width="2.0" fill="none"/>
<path d="M1038.3 426.8L1060.3 441.1" stroke="#f0ece7" stroke-width="2.0" fill="none"/>
<path d="M1076.6 451.7L1089.7 460.2" stroke="#f0ece7" stroke-width="2.0" fill="none"/>
<path d="M1094.2 463.1L1103.3 469.0" stroke="#f0ece7" stroke-width="2.0" fill="none"/>
<path d="M1121.0 480.5L1134.0 489.0" stroke="#f0ece7" stroke-width="2.0" fill="none"/>
<path d="M808.4 293.6L840.0 314.1" stroke="#f0ece7" stroke-width="2.0" fill="none"/>
<path d="M849.7 320.4L858.8 326.3" stroke="#f0ece7" stroke-width="2.0" fill="none"/>
<path d="M861.8 328.3L875.4 337.1" stroke="#f0ece7" stroke-width="2.0" fill="none"/>
<path d="M885.0 343.3L910.1 359.6" stroke="#f0ece7" stroke-width="2.0" fill="none"/>
<path d="M915.9 363.4L950.0 385.5" stroke="#f0ece7" stroke-width="2.0" fill="none"/>
<path d="M1024.2 433.7L1041.8 445.1" stroke="#f0ece7" stroke-width="2.0" fill="none"/>
<path d="M1045.7 447.6L1068.5 462.5" stroke="#f0ece7" stroke-width="2.0" fill="none"/>
<path d="M801.0 306.9L829.4 325.4" stroke="#f0ece7" stroke-width="2.0" fill="none"/>
<path d="M835.8 329.6L873.0 353.7" stroke="#f0ece7" stroke-width="2.0" fill="none"/>
<path d="M889.4 364.3L923.3 386.3" stroke="#f0ece7" stroke-width="2.0" fill="none"/>
<path d="M926.7 388.6L952.1 405.1" stroke="#f0ece7" stroke-width="2.0" fill="none"/>
<path d="M957.1 408.3L977.5 421.6" stroke="#f0ece7" stroke-width="2.0" fill="none"/>
<path d="M988.9 429.0L1011.9 443.9" stroke="#f0ece7" stroke-width="2.0" fill="none"/>
<path d="M1016.0 446.6L1043.2 464.2" stroke="#f0ece7" stroke-width="2.0" fill="none"/>
<path d="M1055.0 471.9L1085.2 491.5" stroke="#f0ece7" stroke-width="2.0" fill="none"/>
<path d="M814.2 335.6L844.4 355.2" stroke="#f0ece7" stroke-width="2.0" fill="none"/>
<path d="M853.8 361.3L886.7 382.7" stroke="#f0ece7" stroke-width="2.0" fill="none"/>
<path d="M898.8 390.6L931.7 412.0" stroke="#f0ece7" stroke-width="2.0" fill="none"/>
<path d="M945.4 420.9L978.8 442.5" stroke="#f0ece7" stroke-width="2.0" fill="none"/>
<path d="M994.9 453.0L1031.3 476.6" stroke="#f0ece7" stroke-width="2.0" fill="none"/>
<path d="M1041.1 483.0L1063.2 497.3" stroke="#f0ece7" stroke-width="2.0" fill="none"/>
<path d="M815.3 357.8L833.8 369.8" stroke="#f0ece7" stroke-width="2.0" fill="none"/>
<path d="M849.0 379.7L868.0 392.0" stroke="#f0ece7" stroke-width="2.0" fill="none"/>
<path d="M900.5 413.1L912.7 421.1" stroke="#f0ece7" stroke-width="2.0" fill="none"/>
<path d="M946.7 443.1L970.7 458.7" stroke="#f0ece7" stroke-width="2.0" fill="none"/>
<path d="M980.9 465.3L1016.7 488.6" stroke="#f0ece7" stroke-width="2.0" fill="none"/>
<path d="M810.9 372.2L843.0 393.0" stroke="#f0ece7" stroke-width="2.0" fill="none"/>
<path d="M847.6 396.0L882.2 418.5" stroke="#f0ece7" stroke-width="2.0" fill="none"/>
<path d="M898.5 429.1L917.1 441.1" stroke="#f0ece7" stroke-width="2.0" fill="none"/>
<path d="M924.0 445.6L957.9 467.6" stroke="#f0ece7" stroke-width="2.0" fill="none"/>
<path d="M969.1 474.9L982.0 483.3" stroke="#f0ece7" stroke-width="2.0" fill="none"/>
<path d="M987.3 486.7L1013.5 503.8" stroke="#f0ece7" stroke-width="2.0" fill="none"/>
<path d="M819.4 395.2L849.1 414.4" stroke="#f0ece7" stroke-width="2.0" fill="none"/>
<path d="M854.5 417.9L887.2 439.1" stroke="#f0ece7" stroke-width="2.0" fill="none"/>
<path d="M895.5 444.6L917.8 459.1" stroke="#f0ece7" stroke-width="2.0" fill="none"/>
<path d="M931.1 467.7L957.9 485.1" stroke="#f0ece7" stroke-width="2.0" fill="none"/>
<path d="M888.4 460.4L905.8 471.7" stroke="#f0ece7" stroke-width="2.0" fill="none"/>
<path d="M919.9 480.9L938.9 493.1" stroke="#f0ece7" stroke-width="2.0" fill="none"/>
<path d="M819.9 435.9L851.0 456.1" stroke="#f0ece7" stroke-width="2.0" fill="none"/>
<path d="M855.7 459.2L892.8 483.2" stroke="#f0ece7" stroke-width="2.0" fill="none"/>
<path d="M796.7 430.9L827.9 451.2" stroke="#f0ece7" stroke-width="2.0" fill="none"/>
<path d="M844.0 461.6L868.8 477.8" stroke="#f0ece7" stroke-width="2.0" fill="none"/>
<path d="M819.9 458.7L857.5 483.1" stroke="#f0ece7" stroke-width="2.0" fill="none"/>
<path d="M813.9 467.3L822.5 472.9" stroke="#f0ece7" stroke-width="2.0" fill="none"/>
<path d="M836.8 482.2L856.1 494.7" stroke="#f0ece7" stroke-width="2.0" fill="none"/>
<path d="M806.1 478.4L841.1 501.1" stroke="#f0ece7" stroke-width="2.0" fill="none"/>
<path d="M834.7 145.4L839.1 138.6" stroke="#f29a8e" stroke-width="1.1" fill="none" stroke-dasharray="2 2"/>
<path d="M816.3 239.0L821.2 231.4" stroke="#f29a8e" stroke-width="1.1" fill="none" stroke-dasharray="2 2"/>
<path d="M879.0 142.5L888.8 127.3" stroke="#f29a8e" stroke-width="1.1" fill="none" stroke-dasharray="2 2"/>
<path d="M799.4 321.5L815.2 297.1" stroke="#f29a8e" stroke-width="1.1" fill="none" stroke-dasharray="2 2"/>
<path d="M871.1 211.1L878.6 199.5" stroke="#f29a8e" stroke-width="1.1" fill="none" stroke-dasharray="2 2"/>
<path d="M910.0 151.3L917.4 139.9" stroke="#f29a8e" stroke-width="1.1" fill="none" stroke-dasharray="2 2"/>
<path d="M844.5 291.9L860.0 268.2" stroke="#f29a8e" stroke-width="1.1" fill="none" stroke-dasharray="2 2"/>
<path d="M908.5 193.5L921.8 173.0" stroke="#f29a8e" stroke-width="1.1" fill="none" stroke-dasharray="2 2"/>
<path d="M806.9 383.9L811.7 376.4" stroke="#f29a8e" stroke-width="1.1" fill="none" stroke-dasharray="2 2"/>
<path d="M829.3 411.4L833.9 404.2" stroke="#f29a8e" stroke-width="1.1" fill="none" stroke-dasharray="2 2"/>
<path d="M857.5 367.9L863.1 359.3" stroke="#f29a8e" stroke-width="1.1" fill="none" stroke-dasharray="2 2"/>
<path d="M893.9 312.0L908.9 288.7" stroke="#f29a8e" stroke-width="1.1" fill="none" stroke-dasharray="2 2"/>
<path d="M992.1 160.7L999.5 149.3" stroke="#f29a8e" stroke-width="1.1" fill="none" stroke-dasharray="2 2"/>
<path d="M1016.7 122.9L1026.9 107.1" stroke="#f29a8e" stroke-width="1.1" fill="none" stroke-dasharray="2 2"/>
<path d="M923.1 305.0L937.0 283.7" stroke="#f29a8e" stroke-width="1.1" fill="none" stroke-dasharray="2 2"/>
<path d="M967.7 236.3L982.2 214.0" stroke="#f29a8e" stroke-width="1.1" fill="none" stroke-dasharray="2 2"/>
<path d="M1011.9 168.3L1019.9 155.9" stroke="#f29a8e" stroke-width="1.1" fill="none" stroke-dasharray="2 2"/>
<path d="M836.3 468.9L848.3 450.5" stroke="#f29a8e" stroke-width="1.1" fill="none" stroke-dasharray="2 2"/>
<path d="M905.6 362.3L915.4 347.1" stroke="#f29a8e" stroke-width="1.1" fill="none" stroke-dasharray="2 2"/>
<path d="M975.9 253.9L987.3 236.5" stroke="#f29a8e" stroke-width="1.1" fill="none" stroke-dasharray="2 2"/>
<path d="M995.1 224.4L1001.4 214.7" stroke="#f29a8e" stroke-width="1.1" fill="none" stroke-dasharray="2 2"/>
<path d="M1028.6 172.8L1036.9 160.0" stroke="#f29a8e" stroke-width="1.1" fill="none" stroke-dasharray="2 2"/>
<path d="M1064.4 117.7L1078.9 95.3" stroke="#f29a8e" stroke-width="1.1" fill="none" stroke-dasharray="2 2"/>
<path d="M891.6 427.1L905.3 406.1" stroke="#f29a8e" stroke-width="1.1" fill="none" stroke-dasharray="2 2"/>
<path d="M979.7 291.6L984.7 283.9" stroke="#f29a8e" stroke-width="1.1" fill="none" stroke-dasharray="2 2"/>
<path d="M1033.2 209.1L1039.4 199.7" stroke="#f29a8e" stroke-width="1.1" fill="none" stroke-dasharray="2 2"/>
<path d="M1053.2 178.3L1065.5 159.4" stroke="#f29a8e" stroke-width="1.1" fill="none" stroke-dasharray="2 2"/>
<path d="M1083.0 132.5L1091.8 118.9" stroke="#f29a8e" stroke-width="1.1" fill="none" stroke-dasharray="2 2"/>
<path d="M874.8 491.3L885.5 474.8" stroke="#f29a8e" stroke-width="1.1" fill="none" stroke-dasharray="2 2"/>
<path d="M914.0 479.3L924.4 463.2" stroke="#f29a8e" stroke-width="1.1" fill="none" stroke-dasharray="2 2"/>
<path d="M937.9 442.4L950.8 422.6" stroke="#f29a8e" stroke-width="1.1" fill="none" stroke-dasharray="2 2"/>
<path d="M967.5 396.8L980.6 376.7" stroke="#f29a8e" stroke-width="1.1" fill="none" stroke-dasharray="2 2"/>
<path d="M1030.2 300.4L1037.6 288.9" stroke="#f29a8e" stroke-width="1.1" fill="none" stroke-dasharray="2 2"/>
<path d="M1060.1 254.3L1072.8 234.7" stroke="#f29a8e" stroke-width="1.1" fill="none" stroke-dasharray="2 2"/>
<path d="M1101.3 190.8L1109.8 177.7" stroke="#f29a8e" stroke-width="1.1" fill="none" stroke-dasharray="2 2"/>
<path d="M1140.8 130.1L1152.7 111.7" stroke="#f29a8e" stroke-width="1.1" fill="none" stroke-dasharray="2 2"/>
<path d="M968.9 461.4L982.0 441.3" stroke="#f29a8e" stroke-width="1.1" fill="none" stroke-dasharray="2 2"/>
<path d="M1146.5 187.9L1151.9 179.6" stroke="#f29a8e" stroke-width="1.1" fill="none" stroke-dasharray="2 2"/>
<path d="M1176.8 141.3L1192.1 117.8" stroke="#f29a8e" stroke-width="1.1" fill="none" stroke-dasharray="2 2"/>
<path d="M1010.2 452.4L1019.5 438.1" stroke="#f29a8e" stroke-width="1.1" fill="none" stroke-dasharray="2 2"/>
<path d="M1033.5 416.6L1042.1 403.4" stroke="#f29a8e" stroke-width="1.1" fill="none" stroke-dasharray="2 2"/>
<path d="M1062.2 372.5L1072.9 355.9" stroke="#f29a8e" stroke-width="1.1" fill="none" stroke-dasharray="2 2"/>
<path d="M1079.7 345.4L1086.5 335.0" stroke="#f29a8e" stroke-width="1.1" fill="none" stroke-dasharray="2 2"/>
<path d="M1048.3 456.2L1064.3 431.6" stroke="#f29a8e" stroke-width="1.1" fill="none" stroke-dasharray="2 2"/>
<path d="M1142.4 311.3L1152.0 296.6" stroke="#f29a8e" stroke-width="1.1" fill="none" stroke-dasharray="2 2"/>
<path d="M1258.0 133.3L1273.1 110.1" stroke="#f29a8e" stroke-width="1.1" fill="none" stroke-dasharray="2 2"/>
<path d="M1054.9 483.1L1064.8 467.8" stroke="#f29a8e" stroke-width="1.1" fill="none" stroke-dasharray="2 2"/>
<path d="M1125.6 374.3L1134.0 361.2" stroke="#f29a8e" stroke-width="1.1" fill="none" stroke-dasharray="2 2"/>
<path d="M1157.8 324.7L1168.3 308.5" stroke="#f29a8e" stroke-width="1.1" fill="none" stroke-dasharray="2 2"/>
<path d="M1178.6 292.6L1187.0 279.6" stroke="#f29a8e" stroke-width="1.1" fill="none" stroke-dasharray="2 2"/>
<path d="M1281.1 134.8L1291.7 118.4" stroke="#f29a8e" stroke-width="1.1" fill="none" stroke-dasharray="2 2"/>
<path d="M1088.8 478.4L1104.0 455.0" stroke="#f29a8e" stroke-width="1.1" fill="none" stroke-dasharray="2 2"/>
<path d="M1114.6 438.7L1128.4 417.4" stroke="#f29a8e" stroke-width="1.1" fill="none" stroke-dasharray="2 2"/>
<path d="M1154.4 377.3L1164.1 362.4" stroke="#f29a8e" stroke-width="1.1" fill="none" stroke-dasharray="2 2"/>
<path d="M1260.9 213.4L1276.9 188.8" stroke="#f29a8e" stroke-width="1.1" fill="none" stroke-dasharray="2 2"/>
<path d="M1291.3 166.6L1298.8 155.1" stroke="#f29a8e" stroke-width="1.1" fill="none" stroke-dasharray="2 2"/>
<path d="M1325.5 113.9L1336.4 97.1" stroke="#f29a8e" stroke-width="1.1" fill="none" stroke-dasharray="2 2"/>
<path d="M1205.5 361.3L1218.1 341.9" stroke="#f29a8e" stroke-width="1.1" fill="none" stroke-dasharray="2 2"/>
<path d="M1246.2 298.5L1256.4 282.9" stroke="#f29a8e" stroke-width="1.1" fill="none" stroke-dasharray="2 2"/>
<path d="M1299.5 216.4L1304.2 209.2" stroke="#f29a8e" stroke-width="1.1" fill="none" stroke-dasharray="2 2"/>
<path d="M1257.1 338.8L1264.1 328.1" stroke="#f29a8e" stroke-width="1.1" fill="none" stroke-dasharray="2 2"/>
<path d="M1308.8 259.2L1315.1 249.5" stroke="#f29a8e" stroke-width="1.1" fill="none" stroke-dasharray="2 2"/>
<path d="M1335.0 218.8L1342.5 207.4" stroke="#f29a8e" stroke-width="1.1" fill="none" stroke-dasharray="2 2"/>
<path d="M1220.7 430.0L1226.9 420.4" stroke="#f29a8e" stroke-width="1.1" fill="none" stroke-dasharray="2 2"/>
<path d="M1250.7 383.8L1261.3 367.4" stroke="#f29a8e" stroke-width="1.1" fill="none" stroke-dasharray="2 2"/>
<path d="M1289.4 324.2L1299.0 309.4" stroke="#f29a8e" stroke-width="1.1" fill="none" stroke-dasharray="2 2"/>
<path d="M1322.0 274.0L1336.9 251.2" stroke="#f29a8e" stroke-width="1.1" fill="none" stroke-dasharray="2 2"/>
<path d="M1390.0 206.4L1394.4 199.7" stroke="#f29a8e" stroke-width="1.1" fill="none" stroke-dasharray="2 2"/>
<path d="M1229.1 484.2L1245.4 459.3" stroke="#f29a8e" stroke-width="1.1" fill="none" stroke-dasharray="2 2"/>
<path d="M1272.2 417.9L1278.7 407.9" stroke="#f29a8e" stroke-width="1.1" fill="none" stroke-dasharray="2 2"/>
<path d="M1342.9 309.1L1352.4 294.4" stroke="#f29a8e" stroke-width="1.1" fill="none" stroke-dasharray="2 2"/>
<path d="M1384.6 244.9L1399.7 221.6" stroke="#f29a8e" stroke-width="1.1" fill="none" stroke-dasharray="2 2"/>
<path d="M1292.5 437.3L1302.2 422.4" stroke="#f29a8e" stroke-width="1.1" fill="none" stroke-dasharray="2 2"/>
<path d="M1331.3 377.4L1340.0 364.1" stroke="#f29a8e" stroke-width="1.1" fill="none" stroke-dasharray="2 2"/>
<path d="M1378.6 362.8L1390.2 344.9" stroke="#f29a8e" stroke-width="1.1" fill="none" stroke-dasharray="2 2"/>
<path d="M1382.4 114.1L1402.8 127.4" stroke="#f29a8e" stroke-width="1.1" fill="none" stroke-dasharray="2 2"/>
<path d="M1357.0 159.6L1371.9 169.3" stroke="#f29a8e" stroke-width="1.1" fill="none" stroke-dasharray="2 2"/>
<path d="M1304.2 166.7L1327.9 182.1" stroke="#f29a8e" stroke-width="1.1" fill="none" stroke-dasharray="2 2"/>
<path d="M1378.0 214.6L1388.1 221.2" stroke="#f29a8e" stroke-width="1.1" fill="none" stroke-dasharray="2 2"/>
<path d="M1244.4 170.8L1253.9 177.0" stroke="#f29a8e" stroke-width="1.1" fill="none" stroke-dasharray="2 2"/>
<path d="M1265.7 184.7L1273.0 189.4" stroke="#f29a8e" stroke-width="1.1" fill="none" stroke-dasharray="2 2"/>
<path d="M1286.7 198.3L1297.2 205.1" stroke="#f29a8e" stroke-width="1.1" fill="none" stroke-dasharray="2 2"/>
<path d="M1330.8 226.9L1349.8 239.3" stroke="#f29a8e" stroke-width="1.1" fill="none" stroke-dasharray="2 2"/>
<path d="M1150.4 131.7L1161.3 138.8" stroke="#f29a8e" stroke-width="1.1" fill="none" stroke-dasharray="2 2"/>
<path d="M1178.9 150.2L1188.7 156.7" stroke="#f29a8e" stroke-width="1.1" fill="none" stroke-dasharray="2 2"/>
<path d="M1306.5 233.1L1323.2 244.0" stroke="#f29a8e" stroke-width="1.1" fill="none" stroke-dasharray="2 2"/>
<path d="M1385.6 284.5L1410.1 300.4" stroke="#f29a8e" stroke-width="1.1" fill="none" stroke-dasharray="2 2"/>
<path d="M1190.0 188.0L1209.5 200.7" stroke="#f29a8e" stroke-width="1.1" fill="none" stroke-dasharray="2 2"/>
<path d="M1299.8 259.3L1308.5 264.9" stroke="#f29a8e" stroke-width="1.1" fill="none" stroke-dasharray="2 2"/>
<path d="M1331.9 280.1L1351.9 293.1" stroke="#f29a8e" stroke-width="1.1" fill="none" stroke-dasharray="2 2"/>
<path d="M1379.5 311.1L1392.5 319.5" stroke="#f29a8e" stroke-width="1.1" fill="none" stroke-dasharray="2 2"/>
<path d="M1056.8 146.7L1064.8 151.9" stroke="#f29a8e" stroke-width="1.1" fill="none" stroke-dasharray="2 2"/>
<path d="M1204.4 242.5L1223.7 255.1" stroke="#f29a8e" stroke-width="1.1" fill="none" stroke-dasharray="2 2"/>
<path d="M1270.3 285.3L1291.7 299.2" stroke="#f29a8e" stroke-width="1.1" fill="none" stroke-dasharray="2 2"/>
<path d="M1043.8 179.8L1056.1 187.8" stroke="#f29a8e" stroke-width="1.1" fill="none" stroke-dasharray="2 2"/>
<path d="M1079.0 202.6L1092.6 211.5" stroke="#f29a8e" stroke-width="1.1" fill="none" stroke-dasharray="2 2"/>
<path d="M1253.3 315.8L1278.1 332.0" stroke="#f29a8e" stroke-width="1.1" fill="none" stroke-dasharray="2 2"/>
<path d="M1299.3 345.7L1319.6 358.9" stroke="#f29a8e" stroke-width="1.1" fill="none" stroke-dasharray="2 2"/>
<path d="M973.3 168.0L997.2 183.6" stroke="#f29a8e" stroke-width="1.1" fill="none" stroke-dasharray="2 2"/>
<path d="M1120.5 263.7L1144.1 278.9" stroke="#f29a8e" stroke-width="1.1" fill="none" stroke-dasharray="2 2"/>
<path d="M1175.2 299.1L1193.1 310.8" stroke="#f29a8e" stroke-width="1.1" fill="none" stroke-dasharray="2 2"/>
<path d="M1233.2 336.8L1251.7 348.8" stroke="#f29a8e" stroke-width="1.1" fill="none" stroke-dasharray="2 2"/>
<path d="M1270.7 361.2L1278.9 366.5" stroke="#f29a8e" stroke-width="1.1" fill="none" stroke-dasharray="2 2"/>
<path d="M1345.0 409.4L1358.8 418.4" stroke="#f29a8e" stroke-width="1.1" fill="none" stroke-dasharray="2 2"/>
<path d="M850.2 116.9L864.9 126.5" stroke="#f29a8e" stroke-width="1.1" fill="none" stroke-dasharray="2 2"/>
<path d="M895.6 146.4L913.4 158.0" stroke="#f29a8e" stroke-width="1.1" fill="none" stroke-dasharray="2 2"/>
<path d="M1033.1 235.7L1052.9 248.6" stroke="#f29a8e" stroke-width="1.1" fill="none" stroke-dasharray="2 2"/>
<path d="M1090.5 273.0L1115.1 288.9" stroke="#f29a8e" stroke-width="1.1" fill="none" stroke-dasharray="2 2"/>
<path d="M1144.1 307.8L1164.1 320.8" stroke="#f29a8e" stroke-width="1.1" fill="none" stroke-dasharray="2 2"/>
<path d="M1232.2 365.0L1251.4 377.4" stroke="#f29a8e" stroke-width="1.1" fill="none" stroke-dasharray="2 2"/>
<path d="M1293.6 404.8L1317.3 420.2" stroke="#f29a8e" stroke-width="1.1" fill="none" stroke-dasharray="2 2"/>
<path d="M1343.0 437.0L1351.4 442.4" stroke="#f29a8e" stroke-width="1.1" fill="none" stroke-dasharray="2 2"/>
<path d="M951.4 216.0L964.2 224.3" stroke="#f29a8e" stroke-width="1.1" fill="none" stroke-dasharray="2 2"/>
<path d="M991.8 242.2L1012.9 256.0" stroke="#f29a8e" stroke-width="1.1" fill="none" stroke-dasharray="2 2"/>
<path d="M1035.3 270.5L1057.8 285.1" stroke="#f29a8e" stroke-width="1.1" fill="none" stroke-dasharray="2 2"/>
<path d="M1066.9 291.0L1090.8 306.5" stroke="#f29a8e" stroke-width="1.1" fill="none" stroke-dasharray="2 2"/>
<path d="M1245.9 407.2L1254.1 412.6" stroke="#f29a8e" stroke-width="1.1" fill="none" stroke-dasharray="2 2"/>
<path d="M1295.5 439.5L1312.1 450.2" stroke="#f29a8e" stroke-width="1.1" fill="none" stroke-dasharray="2 2"/>
<path d="M1321.4 456.3L1337.7 466.9" stroke="#f29a8e" stroke-width="1.1" fill="none" stroke-dasharray="2 2"/>
<path d="M827.5 172.2L842.7 182.1" stroke="#f29a8e" stroke-width="1.1" fill="none" stroke-dasharray="2 2"/>
<path d="M1033.1 305.7L1044.6 313.2" stroke="#f29a8e" stroke-width="1.1" fill="none" stroke-dasharray="2 2"/>
<path d="M1171.3 395.5L1188.8 406.8" stroke="#f29a8e" stroke-width="1.1" fill="none" stroke-dasharray="2 2"/>
<path d="M1208.4 419.6L1223.5 429.3" stroke="#f29a8e" stroke-width="1.1" fill="none" stroke-dasharray="2 2"/>
<path d="M1271.8 460.8L1285.5 469.6" stroke="#f29a8e" stroke-width="1.1" fill="none" stroke-dasharray="2 2"/>
<path d="M824.3 194.8L847.0 209.6" stroke="#f29a8e" stroke-width="1.1" fill="none" stroke-dasharray="2 2"/>
<path d="M890.4 237.7L909.2 250.0" stroke="#f29a8e" stroke-width="1.1" fill="none" stroke-dasharray="2 2"/>
<path d="M955.6 280.1L969.8 289.3" stroke="#f29a8e" stroke-width="1.1" fill="none" stroke-dasharray="2 2"/>
<path d="M979.3 295.5L988.3 301.3" stroke="#f29a8e" stroke-width="1.1" fill="none" stroke-dasharray="2 2"/>
<path d="M1015.8 319.2L1036.1 332.4" stroke="#f29a8e" stroke-width="1.1" fill="none" stroke-dasharray="2 2"/>
<path d="M1105.0 377.1L1125.5 390.4" stroke="#f29a8e" stroke-width="1.1" fill="none" stroke-dasharray="2 2"/>
<path d="M1213.2 447.4L1231.2 459.1" stroke="#f29a8e" stroke-width="1.1" fill="none" stroke-dasharray="2 2"/>
<path d="M1253.6 473.6L1266.2 481.8" stroke="#f29a8e" stroke-width="1.1" fill="none" stroke-dasharray="2 2"/>
<path d="M830.7 229.2L848.1 240.4" stroke="#f29a8e" stroke-width="1.1" fill="none" stroke-dasharray="2 2"/>
<path d="M876.8 259.1L883.8 263.6" stroke="#f29a8e" stroke-width="1.1" fill="none" stroke-dasharray="2 2"/>
<path d="M979.6 325.8L992.3 334.1" stroke="#f29a8e" stroke-width="1.1" fill="none" stroke-dasharray="2 2"/>
<path d="M1036.4 362.7L1049.8 371.4" stroke="#f29a8e" stroke-width="1.1" fill="none" stroke-dasharray="2 2"/>
<path d="M1183.1 458.0L1195.6 466.1" stroke="#f29a8e" stroke-width="1.1" fill="none" stroke-dasharray="2 2"/>
<path d="M1212.1 476.8L1225.5 485.5" stroke="#f29a8e" stroke-width="1.1" fill="none" stroke-dasharray="2 2"/>
<path d="M876.2 293.0L891.7 303.1" stroke="#f29a8e" stroke-width="1.1" fill="none" stroke-dasharray="2 2"/>
<path d="M1056.9 410.4L1078.5 424.4" stroke="#f29a8e" stroke-width="1.1" fill="none" stroke-dasharray="2 2"/>
<path d="M1124.0 454.0L1139.1 463.7" stroke="#f29a8e" stroke-width="1.1" fill="none" stroke-dasharray="2 2"/>
<path d="M1182.7 492.1L1197.7 501.8" stroke="#f29a8e" stroke-width="1.1" fill="none" stroke-dasharray="2 2"/>
<path d="M952.1 361.8L960.2 367.0" stroke="#f29a8e" stroke-width="1.1" fill="none" stroke-dasharray="2 2"/>
<path d="M794.2 282.3L810.3 292.8" stroke="#f29a8e" stroke-width="1.1" fill="none" stroke-dasharray="2 2"/>
<path d="M842.0 313.3L851.9 319.8" stroke="#f29a8e" stroke-width="1.1" fill="none" stroke-dasharray="2 2"/>
<path d="M938.6 376.1L957.0 388.0" stroke="#f29a8e" stroke-width="1.1" fill="none" stroke-dasharray="2 2"/>
<path d="M1095.2 477.7L1120.2 494.0" stroke="#f29a8e" stroke-width="1.1" fill="none" stroke-dasharray="2 2"/>
<path d="M910.8 377.2L934.4 392.5" stroke="#f29a8e" stroke-width="1.1" fill="none" stroke-dasharray="2 2"/>
<path d="M970.9 416.2L984.4 425.0" stroke="#f29a8e" stroke-width="1.1" fill="none" stroke-dasharray="2 2"/>
<path d="M1077.3 485.3L1097.4 498.4" stroke="#f29a8e" stroke-width="1.1" fill="none" stroke-dasharray="2 2"/>
<path d="M804.8 344.5L812.7 349.6" stroke="#f29a8e" stroke-width="1.1" fill="none" stroke-dasharray="2 2"/>
<path d="M824.6 357.4L835.3 364.3" stroke="#f29a8e" stroke-width="1.1" fill="none" stroke-dasharray="2 2"/>
<path d="M857.6 378.8L873.2 388.9" stroke="#f29a8e" stroke-width="1.1" fill="none" stroke-dasharray="2 2"/>
<path d="M916.6 417.1L932.0 427.1" stroke="#f29a8e" stroke-width="1.1" fill="none" stroke-dasharray="2 2"/>
<path d="M843.5 414.9L854.2 421.9" stroke="#f29a8e" stroke-width="1.1" fill="none" stroke-dasharray="2 2"/>
<path d="M863.1 427.7L877.8 437.2" stroke="#f29a8e" stroke-width="1.1" fill="none" stroke-dasharray="2 2"/>
<path d="M936.2 475.2L958.3 489.5" stroke="#f29a8e" stroke-width="1.1" fill="none" stroke-dasharray="2 2"/>
<path d="M891.9 482.7L907.8 493.1" stroke="#f29a8e" stroke-width="1.1" fill="none" stroke-dasharray="2 2"/>
<path d="M799.6 444.5L816.0 455.1" stroke="#f29a8e" stroke-width="1.1" fill="none" stroke-dasharray="2 2"/>
<path d="M836.3 468.4L854.9 480.4" stroke="#f29a8e" stroke-width="1.1" fill="none" stroke-dasharray="2 2"/>
<path d="M909 198L927 196L929 217L911 219Z" fill="#c4e3b1"/>
<path d="M901 217L916 214L919 233L903 236Z" fill="#c4e3b1"/>
<path d="M1143 395L1160 405L1150 425L1135 415Z" fill="#c4e3b1"/>
<path d="M1186 432L1227 436L1235 453L1180 453Z" fill="#c4e3b1"/>
<path d="M843 400L857 400L857 417L843 417Z" fill="#c4e3b1"/>
<path d="M985 327L1005 318L1012 338L992 345Z" fill="#c4e3b1"/>
<path d="M1143 395L1160 405L1150 425L1135 415Z" fill="#c4e3b1"/>
<path d="M962 362L975 368L970 378L958 372Z" fill="#c4e3b1"/>
<path d="M1168 222L1230 203L1262 250L1250 300L1190 305L1165 262Z" fill="#e9e2dc"/>
<path d="M1185 215L1215 209L1222 258L1190 262Z" fill="#d3e8c3"/>
<path d="M1210 250L1225 246L1228 258L1213 262Z" fill="#c4e3b1"/>
<path d="M1225 198L1262 193L1262 240L1232 246Z" fill="#d9cfc8"/>
<path d="M1291 243L1351 236L1354 328L1310 328L1273 286Z" fill="#d4d9c5"/>
<path d="M1206.0 224.0L1211.4 227.0" stroke="#f08478" stroke-width="1.2" fill="none" stroke-dasharray="2 1.6"/>
<path d="M1176.1 274.3L1183.3 280.3" stroke="#f08478" stroke-width="1.2" fill="none" stroke-dasharray="2 1.6"/>
<path d="M1207.6 263.3L1217.2 270.6" stroke="#f08478" stroke-width="1.2" fill="none" stroke-dasharray="2 1.6"/>
<path d="M1245.3 286.8L1255.0 291.9" stroke="#f08478" stroke-width="1.2" fill="none" stroke-dasharray="2 1.6"/>
<path d="M1247.9 237.2L1255.2 241.8" stroke="#f08478" stroke-width="1.2" fill="none" stroke-dasharray="2 1.6"/>
<path d="M1193.3 205.7L1204.8 212.6" stroke="#f08478" stroke-width="1.2" fill="none" stroke-dasharray="2 1.6"/>
<path d="M1175.6 254.3L1186.9 262.1" stroke="#f08478" stroke-width="1.2" fill="none" stroke-dasharray="2 1.6"/>
<path d="M1201.6 225.5L1208.8 230.9" stroke="#f08478" stroke-width="1.2" fill="none" stroke-dasharray="2 1.6"/>
<path d="M1254.9 221.9L1259.6 224.1" stroke="#f08478" stroke-width="1.2" fill="none" stroke-dasharray="2 1.6"/>
<path d="M1212.5 282.9L1220.7 289.7" stroke="#f08478" stroke-width="1.2" fill="none" stroke-dasharray="2 1.6"/>
<path d="M1181.4 263.7L1186.3 255.3" stroke="#f08478" stroke-width="1.2" fill="none" stroke-dasharray="2 1.6"/>
<path d="M1186.9 279.8L1194.2 285.0" stroke="#f08478" stroke-width="1.2" fill="none" stroke-dasharray="2 1.6"/>
<path d="M1219.3 283.4L1229.0 289.1" stroke="#f08478" stroke-width="1.2" fill="none" stroke-dasharray="2 1.6"/>
<path d="M1254.7 217.4L1261.8 222.4" stroke="#f08478" stroke-width="1.2" fill="none" stroke-dasharray="2 1.6"/>
<path d="M1177.1 218.6L1183.6 224.3" stroke="#f08478" stroke-width="1.2" fill="none" stroke-dasharray="2 1.6"/>
<path d="M1254.9 288.6L1262.3 279.0" stroke="#f08478" stroke-width="1.2" fill="none" stroke-dasharray="2 1.6"/>
<path d="M1247.5 216.1L1250.2 211.1" stroke="#f08478" stroke-width="1.2" fill="none" stroke-dasharray="2 1.6"/>
<path d="M1195.0 260.6L1202.3 264.9" stroke="#f08478" stroke-width="1.2" fill="none" stroke-dasharray="2 1.6"/>
<path d="M1199.7 282.2L1204.0 275.1" stroke="#f08478" stroke-width="1.2" fill="none" stroke-dasharray="2 1.6"/>
<path d="M1176.7 288.6L1181.8 281.7" stroke="#f08478" stroke-width="1.2" fill="none" stroke-dasharray="2 1.6"/>
<path d="M1209.7 234.6L1216.1 239.1" stroke="#f08478" stroke-width="1.2" fill="none" stroke-dasharray="2 1.6"/>
<path d="M1250.2 273.5L1259.3 280.4" stroke="#f08478" stroke-width="1.2" fill="none" stroke-dasharray="2 1.6"/>
<path d="M1234.9 241.4L1238.3 236.9" stroke="#f08478" stroke-width="1.2" fill="none" stroke-dasharray="2 1.6"/>
<path d="M1209.2 296.6L1212.5 289.7" stroke="#f08478" stroke-width="1.2" fill="none" stroke-dasharray="2 1.6"/>
<path d="M1232.4 235.5L1239.8 224.3" stroke="#f08478" stroke-width="1.2" fill="none" stroke-dasharray="2 1.6"/>
<path d="M1192.1 288.7L1200.2 279.3" stroke="#f08478" stroke-width="1.2" fill="none" stroke-dasharray="2 1.6"/>
<path d="M1183.0 241.0L1186.8 233.9" stroke="#f08478" stroke-width="1.2" fill="none" stroke-dasharray="2 1.6"/>
<path d="M1186.6 205.4L1194.6 194.4" stroke="#f08478" stroke-width="1.2" fill="none" stroke-dasharray="2 1.6"/>
<path d="M1186.2 268.2L1192.0 272.7" stroke="#f08478" stroke-width="1.2" fill="none" stroke-dasharray="2 1.6"/>
<path d="M1207.2 276.5L1218.0 283.2" stroke="#f08478" stroke-width="1.2" fill="none" stroke-dasharray="2 1.6"/>
<path d="M1229.7 205.3L1236.8 208.6" stroke="#f08478" stroke-width="1.2" fill="none" stroke-dasharray="2 1.6"/>
<path d="M1231.2 276.0L1241.5 282.7" stroke="#f08478" stroke-width="1.2" fill="none" stroke-dasharray="2 1.6"/>
<path d="M1255.7 230.1L1261.0 221.8" stroke="#f08478" stroke-width="1.2" fill="none" stroke-dasharray="2 1.6"/>
<path d="M1226.3 265.0L1228.7 260.4" stroke="#f08478" stroke-width="1.2" fill="none" stroke-dasharray="2 1.6"/>
<path d="M1177.9 234.2L1184.6 239.9" stroke="#f08478" stroke-width="1.2" fill="none" stroke-dasharray="2 1.6"/>
<path d="M1202.7 257.9L1205.5 252.7" stroke="#f08478" stroke-width="1.2" fill="none" stroke-dasharray="2 1.6"/>
<path d="M1249.2 242.5L1256.1 246.4" stroke="#f08478" stroke-width="1.2" fill="none" stroke-dasharray="2 1.6"/>
<path d="M1250.5 290.7L1257.7 279.1" stroke="#f08478" stroke-width="1.2" fill="none" stroke-dasharray="2 1.6"/>
<path d="M1184.8 228.8L1191.6 218.1" stroke="#f08478" stroke-width="1.2" fill="none" stroke-dasharray="2 1.6"/>
<path d="M1233.8 222.4L1239.7 213.7" stroke="#f08478" stroke-width="1.2" fill="none" stroke-dasharray="2 1.6"/>
<path d="M1254.1 268.2L1265.8 275.9" stroke="#f08478" stroke-width="1.2" fill="none" stroke-dasharray="2 1.6"/>
<path d="M1217.2 215.9L1222.0 206.1" stroke="#f08478" stroke-width="1.2" fill="none" stroke-dasharray="2 1.6"/>
<path d="M1168.4 269.7L1174.3 261.3" stroke="#f08478" stroke-width="1.2" fill="none" stroke-dasharray="2 1.6"/>
<path d="M1206.9 220.8L1211.5 223.6" stroke="#f08478" stroke-width="1.2" fill="none" stroke-dasharray="2 1.6"/>
<path d="M1216.1 257.8L1220.2 249.8" stroke="#f08478" stroke-width="1.2" fill="none" stroke-dasharray="2 1.6"/>
<path d="M1233.4 244.7L1239.2 247.6" stroke="#f08478" stroke-width="1.2" fill="none" stroke-dasharray="2 1.6"/>
<path d="M1193.9 239.7L1199.1 243.7" stroke="#f08478" stroke-width="1.2" fill="none" stroke-dasharray="2 1.6"/>
<path d="M1201.2 296.2L1206.1 299.8" stroke="#f08478" stroke-width="1.2" fill="none" stroke-dasharray="2 1.6"/>
<path d="M1179.8 218.0L1188.5 222.2" stroke="#f08478" stroke-width="1.2" fill="none" stroke-dasharray="2 1.6"/>
<path d="M1203.6 238.6L1213.4 245.4" stroke="#f08478" stroke-width="1.2" fill="none" stroke-dasharray="2 1.6"/>
<path d="M1225.4 237.3L1235.0 245.1" stroke="#f08478" stroke-width="1.2" fill="none" stroke-dasharray="2 1.6"/>
<path d="M1209.0 234.2L1218.6 239.2" stroke="#f08478" stroke-width="1.2" fill="none" stroke-dasharray="2 1.6"/>
<path d="M1217.0 293.3L1226.5 299.1" stroke="#f08478" stroke-width="1.2" fill="none" stroke-dasharray="2 1.6"/>
<path d="M1177.1 280.5L1186.7 287.0" stroke="#f08478" stroke-width="1.2" fill="none" stroke-dasharray="2 1.6"/>
<path d="M1224.6 289.6L1234.4 297.5" stroke="#f08478" stroke-width="1.2" fill="none" stroke-dasharray="2 1.6"/>
<path d="M1240.8 240.4L1246.6 232.0" stroke="#f08478" stroke-width="1.2" fill="none" stroke-dasharray="2 1.6"/>
<path d="M1169.9 295.1L1179.8 303.4" stroke="#f08478" stroke-width="1.2" fill="none" stroke-dasharray="2 1.6"/>
<path d="M1244.1 233.1L1254.4 239.7" stroke="#f08478" stroke-width="1.2" fill="none" stroke-dasharray="2 1.6"/>
<path d="M1171.8 220.6L1178.6 212.0" stroke="#f08478" stroke-width="1.2" fill="none" stroke-dasharray="2 1.6"/>
<path d="M1243.7 297.0L1250.2 288.8" stroke="#f08478" stroke-width="1.2" fill="none" stroke-dasharray="2 1.6"/>
<path d="M1219.5 270.9L1230.2 279.0" stroke="#f08478" stroke-width="1.2" fill="none" stroke-dasharray="2 1.6"/>
<path d="M1237.5 244.8L1245.1 248.8" stroke="#f08478" stroke-width="1.2" fill="none" stroke-dasharray="2 1.6"/>
<path d="M1173.1 228.0L1177.8 219.0" stroke="#f08478" stroke-width="1.2" fill="none" stroke-dasharray="2 1.6"/>
<path d="M1208.9 258.7L1213.7 262.6" stroke="#f08478" stroke-width="1.2" fill="none" stroke-dasharray="2 1.6"/>
<path d="M1257.6 264.8L1263.1 269.5" stroke="#f08478" stroke-width="1.2" fill="none" stroke-dasharray="2 1.6"/>
<path d="M1222.5 245.9L1226.6 249.3" stroke="#f08478" stroke-width="1.2" fill="none" stroke-dasharray="2 1.6"/>
<path d="M1205.2 299.2L1209.7 290.0" stroke="#f08478" stroke-width="1.2" fill="none" stroke-dasharray="2 1.6"/>
<path d="M1200.1 217.5L1205.6 220.9" stroke="#f08478" stroke-width="1.2" fill="none" stroke-dasharray="2 1.6"/>
<path d="M1237.0 251.0L1242.7 254.7" stroke="#f08478" stroke-width="1.2" fill="none" stroke-dasharray="2 1.6"/>
<path d="M1243.3 217.8L1253.2 223.0" stroke="#f08478" stroke-width="1.2" fill="none" stroke-dasharray="2 1.6"/>
<path d="M1105.9 317.6L1114.5 322.2" stroke="#f08478" stroke-width="1.2" fill="none" stroke-dasharray="2 1.6"/>
<path d="M1155.3 311.2L1162.2 315.0" stroke="#f08478" stroke-width="1.2" fill="none" stroke-dasharray="2 1.6"/>
<path d="M1143.6 316.2L1147.8 319.4" stroke="#f08478" stroke-width="1.2" fill="none" stroke-dasharray="2 1.6"/>
<path d="M1093.6 287.2L1102.1 294.2" stroke="#f08478" stroke-width="1.2" fill="none" stroke-dasharray="2 1.6"/>
<path d="M1107.6 343.3L1111.7 334.5" stroke="#f08478" stroke-width="1.2" fill="none" stroke-dasharray="2 1.6"/>
<path d="M1108.6 307.4L1114.1 310.6" stroke="#f08478" stroke-width="1.2" fill="none" stroke-dasharray="2 1.6"/>
<path d="M1119.0 300.4L1124.9 288.2" stroke="#f08478" stroke-width="1.2" fill="none" stroke-dasharray="2 1.6"/>
<path d="M1123.7 292.5L1130.3 297.7" stroke="#f08478" stroke-width="1.2" fill="none" stroke-dasharray="2 1.6"/>
<path d="M1124.1 304.3L1127.2 298.7" stroke="#f08478" stroke-width="1.2" fill="none" stroke-dasharray="2 1.6"/>
<path d="M1097.0 284.9L1106.3 290.0" stroke="#f08478" stroke-width="1.2" fill="none" stroke-dasharray="2 1.6"/>
<path d="M1162.3 287.7L1171.5 293.5" stroke="#f08478" stroke-width="1.2" fill="none" stroke-dasharray="2 1.6"/>
<path d="M1097.7 339.5L1103.1 331.1" stroke="#f08478" stroke-width="1.2" fill="none" stroke-dasharray="2 1.6"/>
<path d="M1125.7 320.5L1129.8 313.5" stroke="#f08478" stroke-width="1.2" fill="none" stroke-dasharray="2 1.6"/>
<path d="M1101.1 318.6L1106.4 323.1" stroke="#f08478" stroke-width="1.2" fill="none" stroke-dasharray="2 1.6"/>
<path d="M1121.0 289.9L1125.1 284.0" stroke="#f08478" stroke-width="1.2" fill="none" stroke-dasharray="2 1.6"/>
<path d="M1132.0 312.8L1138.1 317.0" stroke="#f08478" stroke-width="1.2" fill="none" stroke-dasharray="2 1.6"/>
<path d="M1163.8 291.2L1174.1 297.0" stroke="#f08478" stroke-width="1.2" fill="none" stroke-dasharray="2 1.6"/>
<path d="M1175.7 330.2L1182.9 320.8" stroke="#f08478" stroke-width="1.2" fill="none" stroke-dasharray="2 1.6"/>
<path d="M1138.4 298.8L1145.0 304.2" stroke="#f08478" stroke-width="1.2" fill="none" stroke-dasharray="2 1.6"/>
<path d="M1109.8 322.6L1114.8 314.6" stroke="#f08478" stroke-width="1.2" fill="none" stroke-dasharray="2 1.6"/>
<path d="M1184.6 288.7L1189.8 291.2" stroke="#f08478" stroke-width="1.2" fill="none" stroke-dasharray="2 1.6"/>
<path d="M1102.3 310.5L1109.2 302.0" stroke="#f08478" stroke-width="1.2" fill="none" stroke-dasharray="2 1.6"/>
<path d="M1145.0 284.3L1150.2 274.6" stroke="#f08478" stroke-width="1.2" fill="none" stroke-dasharray="2 1.6"/>
<path d="M1184.4 283.9L1192.4 273.7" stroke="#f08478" stroke-width="1.2" fill="none" stroke-dasharray="2 1.6"/>
<path d="M1107.4 292.0L1114.8 283.5" stroke="#f08478" stroke-width="1.2" fill="none" stroke-dasharray="2 1.6"/>
<path d="M1099.9 339.4L1103.0 334.4" stroke="#f08478" stroke-width="1.2" fill="none" stroke-dasharray="2 1.6"/>
<path d="M1115.6 318.3L1122.8 309.2" stroke="#f08478" stroke-width="1.2" fill="none" stroke-dasharray="2 1.6"/>
<path d="M1161.5 331.7L1171.5 339.2" stroke="#f08478" stroke-width="1.2" fill="none" stroke-dasharray="2 1.6"/>
<path d="M1113.8 309.2L1117.8 303.5" stroke="#f08478" stroke-width="1.2" fill="none" stroke-dasharray="2 1.6"/>
<path d="M1184.7 334.6L1189.2 328.9" stroke="#f08478" stroke-width="1.2" fill="none" stroke-dasharray="2 1.6"/>
<path d="M1114.0 295.4L1117.7 288.3" stroke="#f08478" stroke-width="1.2" fill="none" stroke-dasharray="2 1.6"/>
<path d="M1102.2 316.7L1105.4 312.0" stroke="#f08478" stroke-width="1.2" fill="none" stroke-dasharray="2 1.6"/>
<path d="M1142.8 335.4L1153.2 341.5" stroke="#f08478" stroke-width="1.2" fill="none" stroke-dasharray="2 1.6"/>
<path d="M1128.0 336.2L1135.5 340.8" stroke="#f08478" stroke-width="1.2" fill="none" stroke-dasharray="2 1.6"/>
<path d="M1100.1 283.3L1106.2 288.0" stroke="#f08478" stroke-width="1.2" fill="none" stroke-dasharray="2 1.6"/>
<path d="M1100.9 332.0L1105.5 323.2" stroke="#f08478" stroke-width="1.2" fill="none" stroke-dasharray="2 1.6"/>
<path d="M1150.9 289.0L1162.7 295.8" stroke="#f08478" stroke-width="1.2" fill="none" stroke-dasharray="2 1.6"/>
<path d="M1110.7 310.1L1122.3 317.4" stroke="#f08478" stroke-width="1.2" fill="none" stroke-dasharray="2 1.6"/>
<path d="M1135.6 324.3L1140.2 327.0" stroke="#f08478" stroke-width="1.2" fill="none" stroke-dasharray="2 1.6"/>
<path d="M1120.9 344.1L1130.5 351.8" stroke="#f08478" stroke-width="1.2" fill="none" stroke-dasharray="2 1.6"/>
<path d="M1149.7 323.5L1156.4 315.6" stroke="#f08478" stroke-width="1.2" fill="none" stroke-dasharray="2 1.6"/>
<path d="M1143.0 331.8L1147.4 322.4" stroke="#f08478" stroke-width="1.2" fill="none" stroke-dasharray="2 1.6"/>
<path d="M1122.7 291.6L1129.8 295.1" stroke="#f08478" stroke-width="1.2" fill="none" stroke-dasharray="2 1.6"/>
<path d="M1154.0 302.6L1157.7 295.6" stroke="#f08478" stroke-width="1.2" fill="none" stroke-dasharray="2 1.6"/>
<path d="M1180.7 329.1L1186.4 317.3" stroke="#f08478" stroke-width="1.2" fill="none" stroke-dasharray="2 1.6"/>
<path d="M1130.2 325.6L1135.4 328.3" stroke="#f08478" stroke-width="1.2" fill="none" stroke-dasharray="2 1.6"/>
<path d="M1127.1 341.1L1132.7 331.9" stroke="#f08478" stroke-width="1.2" fill="none" stroke-dasharray="2 1.6"/>
<path d="M1177.6 300.4L1183.8 305.7" stroke="#f08478" stroke-width="1.2" fill="none" stroke-dasharray="2 1.6"/>
<path d="M1096.0 328.6L1102.7 332.6" stroke="#f08478" stroke-width="1.2" fill="none" stroke-dasharray="2 1.6"/>
<path d="M1112.5 291.3L1117.4 285.7" stroke="#f08478" stroke-width="1.2" fill="none" stroke-dasharray="2 1.6"/>
<path d="M1175.0 292.0L1184.9 297.6" stroke="#f08478" stroke-width="1.2" fill="none" stroke-dasharray="2 1.6"/>
<path d="M1164.4 340.4L1172.6 345.9" stroke="#f08478" stroke-width="1.2" fill="none" stroke-dasharray="2 1.6"/>
<path d="M1103.5 310.6L1111.3 314.9" stroke="#f08478" stroke-width="1.2" fill="none" stroke-dasharray="2 1.6"/>
<path d="M1126.5 339.1L1130.5 330.6" stroke="#f08478" stroke-width="1.2" fill="none" stroke-dasharray="2 1.6"/>
<path d="M1135.4 287.4L1140.0 279.1" stroke="#f08478" stroke-width="1.2" fill="none" stroke-dasharray="2 1.6"/>
<path d="M1093.6 313.4L1101.3 319.8" stroke="#f08478" stroke-width="1.2" fill="none" stroke-dasharray="2 1.6"/>
<path d="M1102.3 326.1L1108.2 318.3" stroke="#f08478" stroke-width="1.2" fill="none" stroke-dasharray="2 1.6"/>
<path d="M1093.8 284.0L1104.6 292.0" stroke="#f08478" stroke-width="1.2" fill="none" stroke-dasharray="2 1.6"/>
<path d="M1132.8 326.1L1139.1 316.5" stroke="#f08478" stroke-width="1.2" fill="none" stroke-dasharray="2 1.6"/>
<path d="M1110.6 286.0L1120.1 291.0" stroke="#f08478" stroke-width="1.2" fill="none" stroke-dasharray="2 1.6"/>
<path d="M1107.5 291.4L1112.7 282.3" stroke="#f08478" stroke-width="1.2" fill="none" stroke-dasharray="2 1.6"/>
<path d="M1163.2 331.4L1172.4 336.7" stroke="#f08478" stroke-width="1.2" fill="none" stroke-dasharray="2 1.6"/>
<path d="M1155.2 321.2L1161.3 313.9" stroke="#f08478" stroke-width="1.2" fill="none" stroke-dasharray="2 1.6"/>
<path d="M1102.9 321.5L1107.2 324.6" stroke="#f08478" stroke-width="1.2" fill="none" stroke-dasharray="2 1.6"/>
<path d="M1121.3 338.2L1132.4 346.1" stroke="#f08478" stroke-width="1.2" fill="none" stroke-dasharray="2 1.6"/>
<path d="M1115.1 317.3L1120.4 310.7" stroke="#f08478" stroke-width="1.2" fill="none" stroke-dasharray="2 1.6"/>
<path d="M1129.2 349.3L1134.6 340.9" stroke="#f08478" stroke-width="1.2" fill="none" stroke-dasharray="2 1.6"/>
<path d="M1163.2 285.0L1169.5 273.5" stroke="#f08478" stroke-width="1.2" fill="none" stroke-dasharray="2 1.6"/>
<path d="M1173.3 330.7L1184.6 336.6" stroke="#f08478" stroke-width="1.2" fill="none" stroke-dasharray="2 1.6"/>
<path d="M1118.5 304.6L1125.2 293.5" stroke="#f08478" stroke-width="1.2" fill="none" stroke-dasharray="2 1.6"/>
<path d="M1125.6 294.1L1133.2 299.2" stroke="#f08478" stroke-width="1.2" fill="none" stroke-dasharray="2 1.6"/>
<path d="M1159.9 315.2L1163.8 310.0" stroke="#f08478" stroke-width="1.2" fill="none" stroke-dasharray="2 1.6"/>
<path d="M1143.8 329.3L1152.2 334.7" stroke="#f08478" stroke-width="1.2" fill="none" stroke-dasharray="2 1.6"/>
<path d="M1145.8 336.3L1148.7 331.0" stroke="#f08478" stroke-width="1.2" fill="none" stroke-dasharray="2 1.6"/>
<path d="M1155.3 349.0L1159.7 342.4" stroke="#f08478" stroke-width="1.2" fill="none" stroke-dasharray="2 1.6"/>
<path d="M1110.5 287.3L1119.5 295.0" stroke="#f08478" stroke-width="1.2" fill="none" stroke-dasharray="2 1.6"/>
<path d="M1165.5 308.9L1176.5 317.0" stroke="#f08478" stroke-width="1.2" fill="none" stroke-dasharray="2 1.6"/>
<path d="M1111.9 288.4L1116.5 291.9" stroke="#f08478" stroke-width="1.2" fill="none" stroke-dasharray="2 1.6"/>
<path d="M1134.7 297.4L1139.8 289.3" stroke="#f08478" stroke-width="1.2" fill="none" stroke-dasharray="2 1.6"/>
<path d="M1180.8 326.7L1187.0 317.8" stroke="#f08478" stroke-width="1.2" fill="none" stroke-dasharray="2 1.6"/>
<path d="M1228.5 385.3L1233.7 388.9" stroke="#f08478" stroke-width="1.2" fill="none" stroke-dasharray="2 1.6"/>
<path d="M1254.7 381.8L1265.3 390.8" stroke="#f08478" stroke-width="1.2" fill="none" stroke-dasharray="2 1.6"/>
<path d="M1243.7 364.1L1248.1 357.8" stroke="#f08478" stroke-width="1.2" fill="none" stroke-dasharray="2 1.6"/>
<path d="M1241.9 364.8L1253.4 372.2" stroke="#f08478" stroke-width="1.2" fill="none" stroke-dasharray="2 1.6"/>
<path d="M1289.7 364.1L1294.1 366.7" stroke="#f08478" stroke-width="1.2" fill="none" stroke-dasharray="2 1.6"/>
<path d="M1240.8 401.0L1245.7 404.7" stroke="#f08478" stroke-width="1.2" fill="none" stroke-dasharray="2 1.6"/>
<path d="M1277.3 400.0L1285.9 389.8" stroke="#f08478" stroke-width="1.2" fill="none" stroke-dasharray="2 1.6"/>
<path d="M1299.1 330.0L1304.6 333.8" stroke="#f08478" stroke-width="1.2" fill="none" stroke-dasharray="2 1.6"/>
<path d="M1295.2 387.9L1300.1 377.6" stroke="#f08478" stroke-width="1.2" fill="none" stroke-dasharray="2 1.6"/>
<path d="M1201.3 333.3L1207.6 336.3" stroke="#f08478" stroke-width="1.2" fill="none" stroke-dasharray="2 1.6"/>
<path d="M1258.4 345.5L1264.9 349.0" stroke="#f08478" stroke-width="1.2" fill="none" stroke-dasharray="2 1.6"/>
<path d="M1232.0 357.5L1234.5 353.0" stroke="#f08478" stroke-width="1.2" fill="none" stroke-dasharray="2 1.6"/>
<path d="M1242.4 342.6L1253.0 350.8" stroke="#f08478" stroke-width="1.2" fill="none" stroke-dasharray="2 1.6"/>
<path d="M1217.4 395.6L1225.0 385.6" stroke="#f08478" stroke-width="1.2" fill="none" stroke-dasharray="2 1.6"/>
<path d="M1230.7 383.1L1234.6 376.4" stroke="#f08478" stroke-width="1.2" fill="none" stroke-dasharray="2 1.6"/>
<path d="M1262.7 378.6L1268.8 382.5" stroke="#f08478" stroke-width="1.2" fill="none" stroke-dasharray="2 1.6"/>
<path d="M1258.5 354.9L1267.2 362.3" stroke="#f08478" stroke-width="1.2" fill="none" stroke-dasharray="2 1.6"/>
<path d="M1292.0 381.7L1299.3 385.6" stroke="#f08478" stroke-width="1.2" fill="none" stroke-dasharray="2 1.6"/>
<path d="M1256.9 380.6L1265.2 370.5" stroke="#f08478" stroke-width="1.2" fill="none" stroke-dasharray="2 1.6"/>
<path d="M1293.2 349.9L1299.0 353.9" stroke="#f08478" stroke-width="1.2" fill="none" stroke-dasharray="2 1.6"/>
<path d="M1227.4 398.4L1235.8 402.5" stroke="#f08478" stroke-width="1.2" fill="none" stroke-dasharray="2 1.6"/>
<path d="M1277.8 381.1L1288.8 387.5" stroke="#f08478" stroke-width="1.2" fill="none" stroke-dasharray="2 1.6"/>
<path d="M1297.6 394.4L1305.4 400.6" stroke="#f08478" stroke-width="1.2" fill="none" stroke-dasharray="2 1.6"/>
<path d="M1279.3 359.7L1285.4 364.7" stroke="#f08478" stroke-width="1.2" fill="none" stroke-dasharray="2 1.6"/>
<path d="M1234.6 367.3L1244.7 372.6" stroke="#f08478" stroke-width="1.2" fill="none" stroke-dasharray="2 1.6"/>
<path d="M1277.3 380.2L1284.2 383.8" stroke="#f08478" stroke-width="1.2" fill="none" stroke-dasharray="2 1.6"/>
<path d="M1232.1 340.9L1239.2 344.9" stroke="#f08478" stroke-width="1.2" fill="none" stroke-dasharray="2 1.6"/>
<path d="M1222.2 353.6L1228.7 356.8" stroke="#f08478" stroke-width="1.2" fill="none" stroke-dasharray="2 1.6"/>
<path d="M1293.0 391.9L1298.2 395.9" stroke="#f08478" stroke-width="1.2" fill="none" stroke-dasharray="2 1.6"/>
<path d="M1261.9 381.4L1266.4 374.5" stroke="#f08478" stroke-width="1.2" fill="none" stroke-dasharray="2 1.6"/>
<path d="M1299.6 392.9L1307.4 397.1" stroke="#f08478" stroke-width="1.2" fill="none" stroke-dasharray="2 1.6"/>
<path d="M1248.5 351.1L1254.5 354.8" stroke="#f08478" stroke-width="1.2" fill="none" stroke-dasharray="2 1.6"/>
<path d="M1274.0 368.9L1284.7 377.5" stroke="#f08478" stroke-width="1.2" fill="none" stroke-dasharray="2 1.6"/>
<path d="M1277.4 345.4L1289.7 351.9" stroke="#f08478" stroke-width="1.2" fill="none" stroke-dasharray="2 1.6"/>
<path d="M1223.6 393.6L1229.4 396.5" stroke="#f08478" stroke-width="1.2" fill="none" stroke-dasharray="2 1.6"/>
<path d="M1221.1 339.2L1231.4 344.3" stroke="#f08478" stroke-width="1.2" fill="none" stroke-dasharray="2 1.6"/>
<path d="M1291.7 389.8L1295.7 384.6" stroke="#f08478" stroke-width="1.2" fill="none" stroke-dasharray="2 1.6"/>
<path d="M1235.5 333.5L1243.6 338.7" stroke="#f08478" stroke-width="1.2" fill="none" stroke-dasharray="2 1.6"/>
<path d="M1228.7 335.7L1237.5 342.1" stroke="#f08478" stroke-width="1.2" fill="none" stroke-dasharray="2 1.6"/>
<path d="M1227.3 333.2L1231.6 336.4" stroke="#f08478" stroke-width="1.2" fill="none" stroke-dasharray="2 1.6"/>
<path d="M1252.9 386.2L1257.8 389.6" stroke="#f08478" stroke-width="1.2" fill="none" stroke-dasharray="2 1.6"/>
<path d="M1285.3 361.2L1291.1 364.2" stroke="#f08478" stroke-width="1.2" fill="none" stroke-dasharray="2 1.6"/>
<path d="M1279.4 389.4L1285.1 392.5" stroke="#f08478" stroke-width="1.2" fill="none" stroke-dasharray="2 1.6"/>
<path d="M1239.7 335.8L1242.9 329.4" stroke="#f08478" stroke-width="1.2" fill="none" stroke-dasharray="2 1.6"/>
<path d="M1282.5 387.6L1289.7 392.8" stroke="#f08478" stroke-width="1.2" fill="none" stroke-dasharray="2 1.6"/>
<path d="M1258.9 376.5L1262.3 371.3" stroke="#f08478" stroke-width="1.2" fill="none" stroke-dasharray="2 1.6"/>
<path d="M1275.9 403.1L1283.5 394.0" stroke="#f08478" stroke-width="1.2" fill="none" stroke-dasharray="2 1.6"/>
<path d="M1273.8 389.5L1278.2 393.0" stroke="#f08478" stroke-width="1.2" fill="none" stroke-dasharray="2 1.6"/>
<path d="M1289.8 335.2L1297.4 341.4" stroke="#f08478" stroke-width="1.2" fill="none" stroke-dasharray="2 1.6"/>
<path d="M1250.0 361.4L1254.6 355.5" stroke="#f08478" stroke-width="1.2" fill="none" stroke-dasharray="2 1.6"/>
<path d="M1214.5 357.1L1220.6 360.1" stroke="#f08478" stroke-width="1.2" fill="none" stroke-dasharray="2 1.6"/>
<path d="M1248.5 348.9L1256.6 355.8" stroke="#f08478" stroke-width="1.2" fill="none" stroke-dasharray="2 1.6"/>
<path d="M1245.6 372.7L1250.9 366.5" stroke="#f08478" stroke-width="1.2" fill="none" stroke-dasharray="2 1.6"/>
<path d="M1265.7 345.7L1270.9 336.6" stroke="#f08478" stroke-width="1.2" fill="none" stroke-dasharray="2 1.6"/>
<path d="M1257.3 384.9L1260.9 379.9" stroke="#f08478" stroke-width="1.2" fill="none" stroke-dasharray="2 1.6"/>
<path d="M1224.2 349.3L1233.5 354.3" stroke="#f08478" stroke-width="1.2" fill="none" stroke-dasharray="2 1.6"/>
<path d="M1273.9 369.1L1277.4 361.6" stroke="#f08478" stroke-width="1.2" fill="none" stroke-dasharray="2 1.6"/>
<path d="M1275.9 358.4L1282.0 362.7" stroke="#f08478" stroke-width="1.2" fill="none" stroke-dasharray="2 1.6"/>
<path d="M1204.5 359.2L1210.1 362.9" stroke="#f08478" stroke-width="1.2" fill="none" stroke-dasharray="2 1.6"/>
<path d="M1281.9 389.6L1290.7 395.2" stroke="#f08478" stroke-width="1.2" fill="none" stroke-dasharray="2 1.6"/>
<path d="M1053.0 411.8L1060.9 401.5" stroke="#f08478" stroke-width="1.2" fill="none" stroke-dasharray="2 1.6"/>
<path d="M1062.3 452.3L1073.0 459.1" stroke="#f08478" stroke-width="1.2" fill="none" stroke-dasharray="2 1.6"/>
<path d="M1057.9 360.0L1062.9 350.1" stroke="#f08478" stroke-width="1.2" fill="none" stroke-dasharray="2 1.6"/>
<path d="M1059.3 344.7L1068.4 351.5" stroke="#f08478" stroke-width="1.2" fill="none" stroke-dasharray="2 1.6"/>
<path d="M1066.9 355.7L1076.9 362.5" stroke="#f08478" stroke-width="1.2" fill="none" stroke-dasharray="2 1.6"/>
<path d="M1049.3 377.1L1057.5 366.7" stroke="#f08478" stroke-width="1.2" fill="none" stroke-dasharray="2 1.6"/>
<path d="M1061.6 351.7L1067.6 354.7" stroke="#f08478" stroke-width="1.2" fill="none" stroke-dasharray="2 1.6"/>
<path d="M1053.1 406.7L1063.9 414.0" stroke="#f08478" stroke-width="1.2" fill="none" stroke-dasharray="2 1.6"/>
<path d="M1064.3 340.3L1073.8 347.7" stroke="#f08478" stroke-width="1.2" fill="none" stroke-dasharray="2 1.6"/>
<path d="M1044.3 431.7L1050.8 434.9" stroke="#f08478" stroke-width="1.2" fill="none" stroke-dasharray="2 1.6"/>
<path d="M1048.8 354.5L1056.2 343.7" stroke="#f08478" stroke-width="1.2" fill="none" stroke-dasharray="2 1.6"/>
<path d="M1058.1 420.1L1061.4 413.8" stroke="#f08478" stroke-width="1.2" fill="none" stroke-dasharray="2 1.6"/>
<path d="M1052.2 389.3L1057.0 382.7" stroke="#f08478" stroke-width="1.2" fill="none" stroke-dasharray="2 1.6"/>
<path d="M1058.6 335.7L1064.0 327.5" stroke="#f08478" stroke-width="1.2" fill="none" stroke-dasharray="2 1.6"/>
<path d="M1053.3 437.9L1064.2 445.7" stroke="#f08478" stroke-width="1.2" fill="none" stroke-dasharray="2 1.6"/>
<path d="M1053.2 436.2L1056.9 430.6" stroke="#f08478" stroke-width="1.2" fill="none" stroke-dasharray="2 1.6"/>
<path d="M1042.3 395.5L1047.3 385.9" stroke="#f08478" stroke-width="1.2" fill="none" stroke-dasharray="2 1.6"/>
<path d="M1049.4 410.0L1055.4 401.7" stroke="#f08478" stroke-width="1.2" fill="none" stroke-dasharray="2 1.6"/>
<path d="M1057.2 388.9L1064.5 393.5" stroke="#f08478" stroke-width="1.2" fill="none" stroke-dasharray="2 1.6"/>
<path d="M1064.2 421.8L1071.8 428.0" stroke="#f08478" stroke-width="1.2" fill="none" stroke-dasharray="2 1.6"/>
<path d="M1045.8 374.8L1053.6 379.7" stroke="#f08478" stroke-width="1.2" fill="none" stroke-dasharray="2 1.6"/>
<path d="M1058.7 378.1L1062.8 381.4" stroke="#f08478" stroke-width="1.2" fill="none" stroke-dasharray="2 1.6"/>
<path d="M1064.7 449.0L1075.7 456.3" stroke="#f08478" stroke-width="1.2" fill="none" stroke-dasharray="2 1.6"/>
<path d="M1049.5 430.9L1054.8 419.8" stroke="#f08478" stroke-width="1.2" fill="none" stroke-dasharray="2 1.6"/>
<path d="M1041.4 352.9L1046.7 346.4" stroke="#f08478" stroke-width="1.2" fill="none" stroke-dasharray="2 1.6"/>
<path d="M1041.1 412.6L1046.9 404.1" stroke="#f08478" stroke-width="1.2" fill="none" stroke-dasharray="2 1.6"/>
<path d="M1051.9 354.8L1057.2 358.3" stroke="#f08478" stroke-width="1.2" fill="none" stroke-dasharray="2 1.6"/>
<path d="M1044.9 425.9L1049.2 417.4" stroke="#f08478" stroke-width="1.2" fill="none" stroke-dasharray="2 1.6"/>
<path d="M1053.6 417.6L1062.3 421.9" stroke="#f08478" stroke-width="1.2" fill="none" stroke-dasharray="2 1.6"/>
<path d="M1051.8 430.2L1059.1 421.3" stroke="#f08478" stroke-width="1.2" fill="none" stroke-dasharray="2 1.6"/>
<path d="M1059.2 332.6L1065.4 322.0" stroke="#f08478" stroke-width="1.2" fill="none" stroke-dasharray="2 1.6"/>
<path d="M1051.5 399.7L1055.7 391.2" stroke="#f08478" stroke-width="1.2" fill="none" stroke-dasharray="2 1.6"/>
<path d="M1059.1 418.7L1064.8 422.8" stroke="#f08478" stroke-width="1.2" fill="none" stroke-dasharray="2 1.6"/>
<path d="M1064.4 369.2L1069.3 373.0" stroke="#f08478" stroke-width="1.2" fill="none" stroke-dasharray="2 1.6"/>
<path d="M1055.4 372.0L1063.3 361.7" stroke="#f08478" stroke-width="1.2" fill="none" stroke-dasharray="2 1.6"/>
<path d="M1051.4 439.5L1058.9 430.3" stroke="#f08478" stroke-width="1.2" fill="none" stroke-dasharray="2 1.6"/>
<path d="M1042.0 401.1L1047.2 404.6" stroke="#f08478" stroke-width="1.2" fill="none" stroke-dasharray="2 1.6"/>
<path d="M1043.2 334.7L1047.4 327.9" stroke="#f08478" stroke-width="1.2" fill="none" stroke-dasharray="2 1.6"/>
<path d="M1068.1 439.1L1073.9 443.4" stroke="#f08478" stroke-width="1.2" fill="none" stroke-dasharray="2 1.6"/>
<path d="M1041.6 341.9L1048.9 347.0" stroke="#f08478" stroke-width="1.2" fill="none" stroke-dasharray="2 1.6"/>
<path d="M1043.2 392.1L1048.8 381.8" stroke="#f08478" stroke-width="1.2" fill="none" stroke-dasharray="2 1.6"/>
<path d="M1064.5 374.4L1072.8 379.3" stroke="#f08478" stroke-width="1.2" fill="none" stroke-dasharray="2 1.6"/>
<path d="M1066.5 382.9L1077.3 391.7" stroke="#f08478" stroke-width="1.2" fill="none" stroke-dasharray="2 1.6"/>
<path d="M1062.9 415.1L1068.6 407.0" stroke="#f08478" stroke-width="1.2" fill="none" stroke-dasharray="2 1.6"/>
<path d="M1048.1 452.9L1051.9 448.2" stroke="#f08478" stroke-width="1.2" fill="none" stroke-dasharray="2 1.6"/>
<path d="M1101.1 416.4L1107.4 421.5" stroke="#f08478" stroke-width="1.2" fill="none" stroke-dasharray="2 1.6"/>
<path d="M1135.8 380.2L1139.7 374.9" stroke="#f08478" stroke-width="1.2" fill="none" stroke-dasharray="2 1.6"/>
<path d="M1139.9 391.3L1143.0 387.4" stroke="#f08478" stroke-width="1.2" fill="none" stroke-dasharray="2 1.6"/>
<path d="M1147.1 391.6L1152.0 385.6" stroke="#f08478" stroke-width="1.2" fill="none" stroke-dasharray="2 1.6"/>
<path d="M1158.0 443.8L1168.9 449.2" stroke="#f08478" stroke-width="1.2" fill="none" stroke-dasharray="2 1.6"/>
<path d="M1145.7 413.7L1155.8 419.0" stroke="#f08478" stroke-width="1.2" fill="none" stroke-dasharray="2 1.6"/>
<path d="M1176.3 379.5L1180.3 382.5" stroke="#f08478" stroke-width="1.2" fill="none" stroke-dasharray="2 1.6"/>
<path d="M1102.4 400.1L1106.4 394.7" stroke="#f08478" stroke-width="1.2" fill="none" stroke-dasharray="2 1.6"/>
<path d="M1117.9 399.1L1122.4 393.6" stroke="#f08478" stroke-width="1.2" fill="none" stroke-dasharray="2 1.6"/>
<path d="M1166.2 391.3L1171.4 393.7" stroke="#f08478" stroke-width="1.2" fill="none" stroke-dasharray="2 1.6"/>
<path d="M1148.7 416.3L1153.3 407.6" stroke="#f08478" stroke-width="1.2" fill="none" stroke-dasharray="2 1.6"/>
<path d="M1177.4 436.4L1188.6 443.0" stroke="#f08478" stroke-width="1.2" fill="none" stroke-dasharray="2 1.6"/>
<path d="M1132.6 383.8L1139.8 388.3" stroke="#f08478" stroke-width="1.2" fill="none" stroke-dasharray="2 1.6"/>
<path d="M1161.8 384.3L1169.4 374.8" stroke="#f08478" stroke-width="1.2" fill="none" stroke-dasharray="2 1.6"/>
<path d="M1148.7 380.5L1154.6 372.4" stroke="#f08478" stroke-width="1.2" fill="none" stroke-dasharray="2 1.6"/>
<path d="M1129.8 413.8L1138.4 403.3" stroke="#f08478" stroke-width="1.2" fill="none" stroke-dasharray="2 1.6"/>
<path d="M1135.2 387.4L1138.9 381.1" stroke="#f08478" stroke-width="1.2" fill="none" stroke-dasharray="2 1.6"/>
<path d="M1123.0 387.7L1130.2 379.2" stroke="#f08478" stroke-width="1.2" fill="none" stroke-dasharray="2 1.6"/>
<path d="M1115.5 401.7L1122.8 406.2" stroke="#f08478" stroke-width="1.2" fill="none" stroke-dasharray="2 1.6"/>
<path d="M1178.9 415.2L1187.9 419.6" stroke="#f08478" stroke-width="1.2" fill="none" stroke-dasharray="2 1.6"/>
<path d="M1146.7 423.7L1151.7 426.1" stroke="#f08478" stroke-width="1.2" fill="none" stroke-dasharray="2 1.6"/>
<path d="M1139.4 381.5L1142.9 375.1" stroke="#f08478" stroke-width="1.2" fill="none" stroke-dasharray="2 1.6"/>
<path d="M1179.3 414.1L1182.0 408.7" stroke="#f08478" stroke-width="1.2" fill="none" stroke-dasharray="2 1.6"/>
<path d="M1113.8 442.7L1117.9 445.7" stroke="#f08478" stroke-width="1.2" fill="none" stroke-dasharray="2 1.6"/>
<path d="M1144.3 440.1L1150.9 444.9" stroke="#f08478" stroke-width="1.2" fill="none" stroke-dasharray="2 1.6"/>
<path d="M1123.7 436.9L1130.0 440.7" stroke="#f08478" stroke-width="1.2" fill="none" stroke-dasharray="2 1.6"/>
<path d="M1105.2 409.4L1111.9 398.4" stroke="#f08478" stroke-width="1.2" fill="none" stroke-dasharray="2 1.6"/>
<path d="M1170.0 377.6L1176.7 366.5" stroke="#f08478" stroke-width="1.2" fill="none" stroke-dasharray="2 1.6"/>
<path d="M1106.9 397.5L1111.2 400.0" stroke="#f08478" stroke-width="1.2" fill="none" stroke-dasharray="2 1.6"/>
<path d="M1167.7 441.6L1173.4 430.5" stroke="#f08478" stroke-width="1.2" fill="none" stroke-dasharray="2 1.6"/>
<path d="M1134.7 392.4L1139.0 384.2" stroke="#f08478" stroke-width="1.2" fill="none" stroke-dasharray="2 1.6"/>
<path d="M1125.7 416.7L1130.0 408.4" stroke="#f08478" stroke-width="1.2" fill="none" stroke-dasharray="2 1.6"/>
<path d="M1109.4 371.2L1120.6 378.4" stroke="#f08478" stroke-width="1.2" fill="none" stroke-dasharray="2 1.6"/>
<path d="M1113.5 443.6L1118.2 434.3" stroke="#f08478" stroke-width="1.2" fill="none" stroke-dasharray="2 1.6"/>
<path d="M1124.7 360.0L1129.3 363.1" stroke="#f08478" stroke-width="1.2" fill="none" stroke-dasharray="2 1.6"/>
<path d="M1130.1 388.8L1133.7 383.8" stroke="#f08478" stroke-width="1.2" fill="none" stroke-dasharray="2 1.6"/>
<path d="M1150.6 400.9L1156.5 404.5" stroke="#f08478" stroke-width="1.2" fill="none" stroke-dasharray="2 1.6"/>
<path d="M1110.5 365.6L1113.6 358.9" stroke="#f08478" stroke-width="1.2" fill="none" stroke-dasharray="2 1.6"/>
<path d="M1179.9 364.5L1189.1 368.9" stroke="#f08478" stroke-width="1.2" fill="none" stroke-dasharray="2 1.6"/>
<path d="M1125.8 424.3L1134.8 430.7" stroke="#f08478" stroke-width="1.2" fill="none" stroke-dasharray="2 1.6"/>
<path d="M1337.8 443.7L1347.4 449.9" stroke="#f08478" stroke-width="1.2" fill="none" stroke-dasharray="2 1.6"/>
<path d="M1293.9 450.7L1302.9 456.1" stroke="#f08478" stroke-width="1.2" fill="none" stroke-dasharray="2 1.6"/>
<path d="M1353.9 412.6L1358.9 415.8" stroke="#f08478" stroke-width="1.2" fill="none" stroke-dasharray="2 1.6"/>
<path d="M1315.1 438.8L1325.3 447.0" stroke="#f08478" stroke-width="1.2" fill="none" stroke-dasharray="2 1.6"/>
<path d="M1344.4 408.6L1347.7 404.5" stroke="#f08478" stroke-width="1.2" fill="none" stroke-dasharray="2 1.6"/>
<path d="M1309.3 421.6L1312.7 417.3" stroke="#f08478" stroke-width="1.2" fill="none" stroke-dasharray="2 1.6"/>
<path d="M1340.7 447.9L1349.0 454.4" stroke="#f08478" stroke-width="1.2" fill="none" stroke-dasharray="2 1.6"/>
<path d="M1330.7 423.2L1337.5 426.7" stroke="#f08478" stroke-width="1.2" fill="none" stroke-dasharray="2 1.6"/>
<path d="M1301.1 407.3L1310.8 412.3" stroke="#f08478" stroke-width="1.2" fill="none" stroke-dasharray="2 1.6"/>
<path d="M1335.2 449.2L1342.4 455.1" stroke="#f08478" stroke-width="1.2" fill="none" stroke-dasharray="2 1.6"/>
<path d="M1336.3 448.8L1343.5 453.7" stroke="#f08478" stroke-width="1.2" fill="none" stroke-dasharray="2 1.6"/>
<path d="M1335.2 382.0L1342.3 386.7" stroke="#f08478" stroke-width="1.2" fill="none" stroke-dasharray="2 1.6"/>
<path d="M1302.1 389.8L1307.4 381.7" stroke="#f08478" stroke-width="1.2" fill="none" stroke-dasharray="2 1.6"/>
<path d="M1334.0 397.8L1337.7 393.1" stroke="#f08478" stroke-width="1.2" fill="none" stroke-dasharray="2 1.6"/>
<path d="M1304.6 441.2L1313.2 447.2" stroke="#f08478" stroke-width="1.2" fill="none" stroke-dasharray="2 1.6"/>
<path d="M1320.7 417.1L1325.9 406.0" stroke="#f08478" stroke-width="1.2" fill="none" stroke-dasharray="2 1.6"/>
<path d="M1340.7 395.2L1346.7 398.2" stroke="#f08478" stroke-width="1.2" fill="none" stroke-dasharray="2 1.6"/>
<path d="M1322.5 380.6L1328.3 383.8" stroke="#f08478" stroke-width="1.2" fill="none" stroke-dasharray="2 1.6"/>
<path d="M1303.8 436.4L1315.3 443.6" stroke="#f08478" stroke-width="1.2" fill="none" stroke-dasharray="2 1.6"/>
<path d="M1335.5 393.7L1339.8 385.9" stroke="#f08478" stroke-width="1.2" fill="none" stroke-dasharray="2 1.6"/>
<path d="M1058 368L1125 360L1093 453L1044 453L1052 390Z" fill="#d5edc4"/>
<path d="M1068 410L1080 400L1085 430L1070 440Z" fill="#b9d9a5"/>
<path d="M1090 395L1105 388L1100 420L1088 418Z" fill="#b9d9a5"/>
<path d="M1050 420L1062 425L1058 450L1048 450Z" fill="#b9d9a5"/>
<path d="M1100 370L1115 368L1108 385L1098 385Z" fill="#b9d9a5"/>
<path d="M1084 360L1061 453" stroke="#d3e2ea" stroke-width="4" fill="none"/>
<path d="M1085.1 434.7L1095.8 442.4" stroke="#f08478" stroke-width="1.2" fill="none" stroke-dasharray="2 1.6"/>
<path d="M1108.6 376.8L1116.2 382.3" stroke="#f08478" stroke-width="1.2" fill="none" stroke-dasharray="2 1.6"/>
<path d="M1104.7 442.1L1107.9 435.7" stroke="#f08478" stroke-width="1.2" fill="none" stroke-dasharray="2 1.6"/>
<path d="M1068.4 421.7L1078.0 428.1" stroke="#f08478" stroke-width="1.2" fill="none" stroke-dasharray="2 1.6"/>
<path d="M1105.7 400.0L1111.5 403.7" stroke="#f08478" stroke-width="1.2" fill="none" stroke-dasharray="2 1.6"/>
<path d="M1082.5 374.7L1086.2 370.4" stroke="#f08478" stroke-width="1.2" fill="none" stroke-dasharray="2 1.6"/>
<path d="M1076.3 414.7L1079.4 409.8" stroke="#f08478" stroke-width="1.2" fill="none" stroke-dasharray="2 1.6"/>
<path d="M1062.0 393.5L1065.8 387.5" stroke="#f08478" stroke-width="1.2" fill="none" stroke-dasharray="2 1.6"/>
<path d="M1098.0 440.5L1101.1 435.4" stroke="#f08478" stroke-width="1.2" fill="none" stroke-dasharray="2 1.6"/>
<path d="M1108.9 371.1L1118.9 375.9" stroke="#f08478" stroke-width="1.2" fill="none" stroke-dasharray="2 1.6"/>
<path d="M1059.9 426.8L1068.1 416.5" stroke="#f08478" stroke-width="1.2" fill="none" stroke-dasharray="2 1.6"/>
<path d="M1074.1 378.5L1078.8 381.1" stroke="#f08478" stroke-width="1.2" fill="none" stroke-dasharray="2 1.6"/>
<path d="M1083.6 443.3L1088.7 433.7" stroke="#f08478" stroke-width="1.2" fill="none" stroke-dasharray="2 1.6"/>
<path d="M1082.9 415.2L1089.4 406.4" stroke="#f08478" stroke-width="1.2" fill="none" stroke-dasharray="2 1.6"/>
<path d="M1070.2 371.5L1078.1 375.8" stroke="#f08478" stroke-width="1.2" fill="none" stroke-dasharray="2 1.6"/>
<path d="M1081.2 429.2L1087.2 416.7" stroke="#f08478" stroke-width="1.2" fill="none" stroke-dasharray="2 1.6"/>
<path d="M1077.0 399.2L1085.4 388.6" stroke="#f08478" stroke-width="1.2" fill="none" stroke-dasharray="2 1.6"/>
<path d="M1099.5 432.0L1103.6 424.2" stroke="#f08478" stroke-width="1.2" fill="none" stroke-dasharray="2 1.6"/>
<path d="M1051.0 435.6L1056.0 428.6" stroke="#f08478" stroke-width="1.2" fill="none" stroke-dasharray="2 1.6"/>
<path d="M1059.5 382.5L1063.4 374.5" stroke="#f08478" stroke-width="1.2" fill="none" stroke-dasharray="2 1.6"/>
<path d="M1112.6 451.6L1119.4 456.1" stroke="#f08478" stroke-width="1.2" fill="none" stroke-dasharray="2 1.6"/>
<path d="M1082.9 428.5L1092.7 433.2" stroke="#f08478" stroke-width="1.2" fill="none" stroke-dasharray="2 1.6"/>
<path d="M1089.7 438.5L1100.1 444.9" stroke="#f08478" stroke-width="1.2" fill="none" stroke-dasharray="2 1.6"/>
<path d="M1055.1 388.2L1065.3 396.4" stroke="#f08478" stroke-width="1.2" fill="none" stroke-dasharray="2 1.6"/>
<path d="M1119.9 388.6L1124.8 381.0" stroke="#f08478" stroke-width="1.2" fill="none" stroke-dasharray="2 1.6"/>
<path d="M1092.8 432.8L1097.1 435.5" stroke="#f08478" stroke-width="1.2" fill="none" stroke-dasharray="2 1.6"/>
<path d="M1059.2 430.2L1066.5 436.1" stroke="#f08478" stroke-width="1.2" fill="none" stroke-dasharray="2 1.6"/>
<path d="M1057.7 369.7L1066.3 375.4" stroke="#f08478" stroke-width="1.2" fill="none" stroke-dasharray="2 1.6"/>
<path d="M1117.2 421.5L1128.9 427.2" stroke="#f08478" stroke-width="1.2" fill="none" stroke-dasharray="2 1.6"/>
<path d="M1072.1 414.0L1081.9 422.0" stroke="#f08478" stroke-width="1.2" fill="none" stroke-dasharray="2 1.6"/>
<path d="M1070.7 380.2L1081.6 386.2" stroke="#f08478" stroke-width="1.2" fill="none" stroke-dasharray="2 1.6"/>
<path d="M1116.0 367.7L1123.7 373.7" stroke="#f08478" stroke-width="1.2" fill="none" stroke-dasharray="2 1.6"/>
<path d="M1060.3 396.7L1065.0 400.2" stroke="#f08478" stroke-width="1.2" fill="none" stroke-dasharray="2 1.6"/>
<path d="M1052.0 375.2L1054.5 370.0" stroke="#f08478" stroke-width="1.2" fill="none" stroke-dasharray="2 1.6"/>
<path d="M1056.7 369.3L1064.1 375.1" stroke="#f08478" stroke-width="1.2" fill="none" stroke-dasharray="2 1.6"/>
<path d="M1066.6 424.5L1071.3 415.7" stroke="#f08478" stroke-width="1.2" fill="none" stroke-dasharray="2 1.6"/>
<path d="M1050.7 410.8L1060.5 419.1" stroke="#f08478" stroke-width="1.2" fill="none" stroke-dasharray="2 1.6"/>
<path d="M1083.8 451.7L1091.1 440.6" stroke="#f08478" stroke-width="1.2" fill="none" stroke-dasharray="2 1.6"/>
<path d="M1095.3 421.4L1102.6 410.6" stroke="#f08478" stroke-width="1.2" fill="none" stroke-dasharray="2 1.6"/>
<path d="M1103.0 395.4L1110.3 386.3" stroke="#f08478" stroke-width="1.2" fill="none" stroke-dasharray="2 1.6"/>
<path d="M1057.9 410.4L1063.4 399.2" stroke="#f08478" stroke-width="1.2" fill="none" stroke-dasharray="2 1.6"/>
<path d="M1062.5 411.1L1069.1 402.4" stroke="#f08478" stroke-width="1.2" fill="none" stroke-dasharray="2 1.6"/>
<path d="M1091.6 443.4L1101.1 448.5" stroke="#f08478" stroke-width="1.2" fill="none" stroke-dasharray="2 1.6"/>
<path d="M1091.5 424.5L1100.5 430.5" stroke="#f08478" stroke-width="1.2" fill="none" stroke-dasharray="2 1.6"/>
<path d="M1088.5 421.8L1094.3 414.5" stroke="#f08478" stroke-width="1.2" fill="none" stroke-dasharray="2 1.6"/>
<path d="M1085.4 394.3L1090.8 387.5" stroke="#f08478" stroke-width="1.2" fill="none" stroke-dasharray="2 1.6"/>
<path d="M1080.7 394.9L1088.0 384.2" stroke="#f08478" stroke-width="1.2" fill="none" stroke-dasharray="2 1.6"/>
<path d="M1065.7 435.6L1068.9 428.9" stroke="#f08478" stroke-width="1.2" fill="none" stroke-dasharray="2 1.6"/>
<path d="M1109.1 403.8L1116.5 408.5" stroke="#f08478" stroke-width="1.2" fill="none" stroke-dasharray="2 1.6"/>
<path d="M1066.3 407.7L1070.7 400.3" stroke="#f08478" stroke-width="1.2" fill="none" stroke-dasharray="2 1.6"/>
<path d="M1080.6 450.9L1087.7 442.0" stroke="#f08478" stroke-width="1.2" fill="none" stroke-dasharray="2 1.6"/>
<path d="M1116.4 382.1L1125.7 390.0" stroke="#f08478" stroke-width="1.2" fill="none" stroke-dasharray="2 1.6"/>
<path d="M1109.6 398.4L1116.0 389.2" stroke="#f08478" stroke-width="1.2" fill="none" stroke-dasharray="2 1.6"/>
<path d="M1081.6 375.3L1087.9 379.6" stroke="#f08478" stroke-width="1.2" fill="none" stroke-dasharray="2 1.6"/>
<path d="M1092.2 401.1L1099.0 391.6" stroke="#f08478" stroke-width="1.2" fill="none" stroke-dasharray="2 1.6"/>
<path d="M1099.6 411.1L1104.2 402.1" stroke="#f08478" stroke-width="1.2" fill="none" stroke-dasharray="2 1.6"/>
<path d="M1069.0 417.2L1075.3 420.8" stroke="#f08478" stroke-width="1.2" fill="none" stroke-dasharray="2 1.6"/>
<path d="M1074.3 367.0L1081.3 372.2" stroke="#f08478" stroke-width="1.2" fill="none" stroke-dasharray="2 1.6"/>
<path d="M1118.6 441.5L1124.5 434.7" stroke="#f08478" stroke-width="1.2" fill="none" stroke-dasharray="2 1.6"/>
<path d="M1090.0 410.8L1100.8 416.1" stroke="#f08478" stroke-width="1.2" fill="none" stroke-dasharray="2 1.6"/>
<path d="M1165 372L1195 360L1265 409L1292 453L1240 453Z" fill="#dfdfe8"/>
<path d="M1156 383L1165 372L1240 453L1226 453Z" fill="#ecd1cf"/>
<ellipse cx="1175" cy="431" rx="11" ry="9" fill="#ebe6d8"/>
<path d="M927 421L958 421L958 445L927 445Z" fill="#f4eec6"/>
<path d="M1262 284L1354 280" stroke="#9b9b9b" stroke-width="1.6" fill="none" stroke-dasharray="4 3"/>
<path d="M1262 292L1354 289" stroke="#9b9b9b" stroke-width="1.6" fill="none" stroke-dasharray="4 3"/>
<path d="M1170 310L1262 288" stroke="#9b9b9b" stroke-width="1.6" fill="none" stroke-dasharray="4 3"/>
<path d="M889 372L896 453" stroke="#9b9b9b" stroke-width="1.5" fill="none" stroke-dasharray="4 3"/>
<path d="M898 372L905 453" stroke="#9b9b9b" stroke-width="1.5" fill="none" stroke-dasharray="4 3"/>
<path d="M1077 368L1020 447" stroke="#9b9b9b" stroke-width="1.8" fill="none" stroke-dasharray="4 3"/>
<path d="M827 281L884 299L990 345L1030 374" stroke="#c9c1ba" stroke-width="9.4" fill="none" />
<path d="M1028 218L950 319" stroke="#c9c1ba" stroke-width="6.4" fill="none" />
<path d="M959 340L917 453" stroke="#c9c1ba" stroke-width="6.9" fill="none" />
<path d="M1044 153L1005 193L931 270L907 305" stroke="#c9c1ba" stroke-width="6.4" fill="none" />
<path d="M1093 194L1053 227" stroke="#c9c1ba" stroke-width="6.4" fill="none" />
<path d="M834 323L902 333" stroke="#c9c1ba" stroke-width="6.4" fill="none" />
<path d="M883 396L871 453" stroke="#c9c1ba" stroke-width="5.4" fill="none" />
<path d="M1360 348L1265 414L1284 460" stroke="#c9c1ba" stroke-width="11.4" fill="none" />
<path d="M1255 275L1345 363" stroke="#c9c1ba" stroke-width="5.9" fill="none" />
<path d="M1307 389L1338 460" stroke="#c9c1ba" stroke-width="5.9" fill="none" />
<path d="M1322 200L1360 262" stroke="#c9c1ba" stroke-width="6.4" fill="none" />
<path d="M1334 223L1360 207" stroke="#c9c1ba" stroke-width="5.4" fill="none" />
<path d="M930 153L878 162" stroke="#c9c1ba" stroke-width="5.4" fill="none" />
<path d="M827 281L884 299L990 345L1030 374" stroke="#ffffff" stroke-width="8" fill="none" />
<path d="M1028 218L950 319" stroke="#ffffff" stroke-width="5" fill="none" />
<path d="M959 340L917 453" stroke="#ffffff" stroke-width="5.5" fill="none" />
<path d="M1044 153L1005 193L931 270L907 305" stroke="#ffffff" stroke-width="5" fill="none" />
<path d="M1093 194L1053 227" stroke="#ffffff" stroke-width="5" fill="none" />
<path d="M834 323L902 333" stroke="#ffffff" stroke-width="5" fill="none" />
<path d="M883 396L871 453" stroke="#ffffff" stroke-width="4" fill="none" />
<path d="M1360 348L1265 414L1284 460" stroke="#ffffff" stroke-width="10" fill="none" />
<path d="M1255 275L1345 363" stroke="#ffffff" stroke-width="4.5" fill="none" />
<path d="M1307 389L1338 460" stroke="#ffffff" stroke-width="4.5" fill="none" />
<path d="M1322 200L1360 262" stroke="#ffffff" stroke-width="5" fill="none" />
<path d="M1334 223L1360 207" stroke="#ffffff" stroke-width="4" fill="none" />
<path d="M930 153L878 162" stroke="#ffffff" stroke-width="4" fill="none" />
<path d="M1324 193L1249 293L1213 332" stroke="#cbcbd8" stroke-width="6" fill="none" />
<path d="M1273 193L1302 216" stroke="#cbcbd8" stroke-width="5" fill="none" />
<path d="M827 281L884 299L990 345L1030 374" stroke="#b597bf" stroke-width="1.6" fill="none" stroke-dasharray="6 3 1.5 3"/>
<path d="M1044 153L1005 193L931 270L907 305L911 315L897 350L881 395L834 392" stroke="#b597bf" stroke-width="1.6" fill="none" stroke-dasharray="6 3 1.5 3"/>
<path d="M1147 369L1228 453" stroke="#9a9a9a" stroke-width="1.7" fill="none" />
<path d="M1125 360L1092 453" stroke="#959595" stroke-width="2" fill="none" />
<path d="M1125 363L1147 369" stroke="#9a9a9a" stroke-width="1.6" fill="none" />
<path d="M998 153L1023 193L1052 240L1070 262L1088 280" stroke="#cf9f6a" stroke-width="15" fill="none" />
<path d="M1088 280L1065 300L1045 335L1028 370L1016 410L1005 453" stroke="#cf9f6a" stroke-width="15" fill="none" />
<path d="M1088 280L1110 266L1133 240L1165 210L1240 193L1360 172" stroke="#cf9f6a" stroke-width="15" fill="none" />
<path d="M998 153L1023 193L1052 240L1070 262L1088 280" stroke="#f9d39f" stroke-width="13.4" fill="none" />
<path d="M1088 280L1065 300L1045 335L1028 370L1016 410L1005 453" stroke="#f9d39f" stroke-width="13.4" fill="none" />
<path d="M1088 280L1110 266L1133 240L1165 210L1240 193L1360 172" stroke="#f9d39f" stroke-width="13.4" fill="none" />
<path d="M826 447L990 459" stroke="#cf9f6a" stroke-width="13" fill="none" />
<path d="M826 447L990 459" stroke="#f9d39f" stroke-width="11.4" fill="none" />
<path d="M1065 300L1045 335L1028 370L1016 410L1005 453" stroke="#b597bf" stroke-width="1.4" fill="none" stroke-dasharray="6 3 1.5 3"/>
</g></svg>
<svg width="519" height="300" viewBox="834 153 519 300" style="left:834px;top:153px" stroke-linecap="round" stroke-linejoin="round">
<g clip-path="url(#mc)">
<text x="1103.5" y="261.5" font-family="Liberation Sans" font-size="12.5" fill="#4a5fb8" stroke="#ffffff" stroke-opacity="0.6" stroke-width="1.6" paint-order="stroke" textLength="47" lengthAdjust="spacingAndGlyphs" font-weight="bold">Охотный</text>
<text x="1118" y="273.5" font-family="Liberation Sans" font-size="12.5" fill="#4a5fb8" stroke="#ffffff" stroke-opacity="0.6" stroke-width="1.6" paint-order="stroke" textLength="18.5" lengthAdjust="spacingAndGlyphs" font-weight="bold">ряд</text>
<text x="1167.3" y="270" font-family="Liberation Sans" font-size="12.5" fill="#4a5fb8" stroke="#ffffff" stroke-opacity="0.6" stroke-width="1.6" paint-order="stroke" textLength="55" lengthAdjust="spacingAndGlyphs" font-weight="bold">атральная</text>
<text x="1227.7" y="306.5" font-family="Liberation Sans" font-size="12.5" fill="#4a5fb8" stroke="#ffffff" stroke-opacity="0.6" stroke-width="1.6" paint-order="stroke" textLength="48" lengthAdjust="spacingAndGlyphs" font-weight="bold">Площадь</text>
<text x="1221.3" y="318.5" font-family="Liberation Sans" font-size="12.5" fill="#4a5fb8" stroke="#ffffff" stroke-opacity="0.6" stroke-width="1.6" paint-order="stroke" textLength="61" lengthAdjust="spacingAndGlyphs" font-weight="bold">Революции</text>
<text x="1064.7" y="309.6" font-family="Liberation Sans" font-size="12.5" fill="#444" stroke="#ffffff" stroke-opacity="0.6" stroke-width="1.6" paint-order="stroke" textLength="50.6" lengthAdjust="spacingAndGlyphs" >Торговый</text>
<text x="1065" y="322.6" font-family="Liberation Sans" font-size="12.5" fill="#444" stroke="#ffffff" stroke-opacity="0.6" stroke-width="1.6" paint-order="stroke" textLength="50" lengthAdjust="spacingAndGlyphs" >комплекс</text>
<text x="1063.4" y="335.6" font-family="Liberation Sans" font-size="12.5" fill="#444" stroke="#ffffff" stroke-opacity="0.6" stroke-width="1.6" paint-order="stroke" textLength="53" lengthAdjust="spacingAndGlyphs" >«Охотный</text>
<text x="1297" y="277.6" font-family="Liberation Sans" font-size="11.5" fill="#555" stroke="#ffffff" stroke-opacity="0.6" stroke-width="1.6" paint-order="stroke" textLength="31" lengthAdjust="spacingAndGlyphs" font-style="italic">Жилой</text>
<text x="1291.8" y="289.4" font-family="Liberation Sans" font-size="11.5" fill="#555" stroke="#ffffff" stroke-opacity="0.6" stroke-width="1.6" paint-order="stroke" textLength="43" lengthAdjust="spacingAndGlyphs" font-style="italic">комплекс</text>
<text x="1296" y="301" font-family="Liberation Sans" font-size="11.5" fill="#555" stroke="#ffffff" stroke-opacity="0.6" stroke-width="1.6" paint-order="stroke" textLength="34" lengthAdjust="spacingAndGlyphs" font-style="italic">"Nicole"</text>
<text x="1298.2" y="322.5" font-family="Liberation Sans" font-size="12" fill="#333" stroke="#ffffff" stroke-opacity="0.6" stroke-width="1.6" paint-order="stroke" textLength="62" lengthAdjust="spacingAndGlyphs" >Китай-город</text>
<text x="1222" y="414.5" font-family="Liberation Sans" font-size="12.5" fill="#222" stroke="#ffffff" stroke-opacity="0.6" stroke-width="1.6" paint-order="stroke" textLength="43.3" lengthAdjust="spacingAndGlyphs" >Красная</text>
<text x="1220.2" y="426.7" font-family="Liberation Sans" font-size="12.5" fill="#222" stroke="#ffffff" stroke-opacity="0.6" stroke-width="1.6" paint-order="stroke" textLength="47" lengthAdjust="spacingAndGlyphs" >площадь</text>
<text transform="translate(942 331) rotate(30)" font-family="Liberation Sans" font-size="11.5" fill="#7a4f8a" textLength="82" lengthAdjust="spacingAndGlyphs">Тверской район</text>
<text transform="translate(997 450) rotate(-74)" font-family="Liberation Sans" font-size="11.5" fill="#7a4f8a" textLength="64" lengthAdjust="spacingAndGlyphs">район Арбат</text>
<text transform="translate(1227 335) rotate(40)" font-family="Liberation Sans" font-size="10.5" fill="#333" textLength="88" lengthAdjust="spacingAndGlyphs">Ветошный переулок</text>
<text transform="translate(1256 289) rotate(-52)" font-family="Liberation Sans" font-size="10.5" fill="#333" textLength="76" lengthAdjust="spacingAndGlyphs">Никольская улица</text>
<text transform="translate(842 255) rotate(-68)" font-family="Liberation Sans" font-size="10" fill="#333">переулок</text>
<text transform="translate(886 262) rotate(-50)" font-family="Liberation Sans" font-size="10" fill="#333">переулок</text>
<text x="876" y="459.5" font-family="Liberation Sans" font-size="12" fill="#222" textLength="40" lengthAdjust="spacingAndGlyphs">Улица В</text>
<rect x="1124" y="240" width="6" height="6" fill="#7179c4"/>
<rect x="1187" y="251" width="6" height="6" fill="#7179c4"/>
<rect x="1248" y="286" width="6" height="6" fill="#7179c4"/>
<circle cx="946" cy="428.4" r="7" fill="#b4000a" stroke="#fff" stroke-width="1"/><path d="M946 424.5V432.3M942.1 428.4H949.9" stroke="#fff" stroke-width="2"/>
<path d="M1186 438V428H1188V426H1190V428H1192V425H1195V428H1197V426H1199V428H1201V438H1196V434H1191V438Z" fill="#8a5a10"/>
<path d="M1054 372H1067M1056 372V382M1060 372V382M1064 372V382M1053 384Q1056 382 1059 384T1066 384" stroke="#3a6ab0" stroke-width="1.6" fill="none"/>
<path d="M1084 350L1049.2 245.7A110 110 0 0 1 1190.6 377.2Z" fill="#3279d8" fill-opacity="0.22" stroke="#ffffff" stroke-width="2"/>
<path d="M1082.2 331.6L1102.6 351.3L1080.5 364.9L1069 354.5Z" fill="#3279d8" stroke="#fff" stroke-width="1.8"/>
<circle cx="1049.2" cy="245.6" r="7.2" fill="#3279d8" stroke="#fff" stroke-width="1.8"/>
<circle cx="1159" cy="269.4" r="7.2" fill="#3279d8" stroke="#fff" stroke-width="1.8"/>
<circle cx="1190.6" cy="377.2" r="7.2" fill="#3279d8" stroke="#fff" stroke-width="1.8"/>
</g>
<rect x="844.5" y="163.5" width="498" height="29" rx="5" fill="#fff" stroke="#d6dceb"/>
<circle cx="861.7" cy="176.8" r="5.6" fill="none" stroke="#5b6d84" stroke-width="1.5"/><path d="M865.8 181L870.3 185.5" stroke="#5b6d84" stroke-width="1.6"/>
<path d="M1323.3 174.2L1330.8 181.7M1330.8 174.2L1323.3 181.7" stroke="#1f2429" stroke-width="1.5"/>
<rect x="844" y="213" width="40" height="40" rx="7" fill="#e8ebf0"/>
<rect x="844" y="263" width="40" height="40" rx="7" fill="#e8ebf0"/>
<rect x="844" y="313" width="40" height="80" rx="7" fill="#e8ebf0"/>
<g stroke="#1f2429" stroke-width="1.6" fill="none">
<circle cx="864" cy="232.8" r="6.6"/><path d="M864 223.8V226.4M864 239.2V241.8M855 232.8H857.6M870.4 232.8H873"/>
<circle cx="864" cy="232.8" r="1" fill="#1f2429" stroke-width="1"/>
<path d="M870.6 276.7L856.4 281.6L862.3 284L864.6 290Z"/>
<circle cx="863.3" cy="332.6" r="5.2"/><path d="M867 336.4L870.8 340.2M863.3 330.1V335.1M860.8 332.6H865.8"/>
<circle cx="863.3" cy="372.1" r="5.2"/><path d="M867 375.9L870.8 379.7M860.8 372.1H865.8"/>
</g>
</svg>
<!-- MAP END -->

<!-- form -->
<div class="t lbl" style="left:834px;top:463px">Широта</div>
<div class="t lbl" style="left:994px;top:463px">Долгота</div>
<div class="t lbl" style="left:1154px;top:463px">Азимут</div>
<div class="inp" style="left:834px;top:486px;width:150px;height:30px"></div>
<div class="inp" style="left:994px;top:486px;width:150px;height:30px"></div>
<div class="inp" style="left:1154px;top:486px;width:150px;height:30px"></div>
<div class="mono" style="left:866px;top:494px">55.755206351</div>
<div class="mono" style="left:1026px;top:494px">37.614655495</div>
<div class="mono" style="left:1241px;top:494px">42.88</div>

<div class="t lbl" style="left:834px;top:526px">Угол обзора</div>
<div class="t lbl" style="left:994px;top:526px">Угол наклона</div>
<div class="inp" style="left:834px;top:549px;width:150px;height:30px"></div>
<div class="inp" style="left:994px;top:549px;width:150px;height:30px"></div>
<div class="mono" style="left:857px;top:557px">123.069675714</div>

<div class="t lbl" style="left:834px;top:589px">Адрес</div>
<div class="inp" style="left:834px;top:612px;width:519px;height:30px"></div>
<div class="t" style="left:845px;top:618px;letter-spacing:0.11px;-webkit-text-stroke:0.45px currentColor">Исторический музей, 1, Красная площадь, 4, Китай-город, Тверской</div>


<!-- ICONS overlay -->
<svg width="1367" height="655" style="left:0;top:0" viewBox="0 0 1367 655" fill="none" stroke-linecap="round" stroke-linejoin="round">
 <!-- export icon -->
 <g stroke="#2f3338" stroke-width="1.7">
  <path d="M645.5 16.6H642.3Q638.6 16.6 638.6 20.3V31Q638.6 34.7 642.3 34.7H650Q653.7 34.7 653.7 31V27"/>
  <path d="M646.3 27H653.8"/>
  <path d="M650 16.2V24M647 21L650 24L653 21"/>
  <path d="M641.6 30V33M644.6 24.8V33M647.3 28.5V33M650.1 29.5V33" stroke-width="1.4"/>
 </g>
 <!-- pin -->
 <g stroke="#8b8d90" stroke-width="1.3">
  <path d="M76.3 127.5L80.2 123.6"/>
  <path d="M84.4 115.6L88.6 119.8L86.6 120.6L84.6 122.6Q83.8 124 84 126.2L83.3 126.9L77.2 120.8L77.9 120.1Q80.1 120.3 81.5 119.5L83.5 117.5Z"/>
 </g>
 <!-- sort -->
 <g stroke="#3279d8" stroke-width="1.45">
  <path d="M103.5 116.4V125.4M100.5 122.3L103.5 125.4L106.5 122.3"/>
  <path d="M110.5 125.4V116.4M107.5 119.5L110.5 116.4L113.5 119.5"/>
 </g>
 <!-- plus -->
 <path d="M270 114.2V127.8M263.2 121H276.8" stroke="#2a2e33" stroke-width="1.6"/>
 <!-- list -->
 <g stroke="#fff">
  <path d="M513.5 116.2H524.8M513.5 121H524.8M513.5 125.6H524.8" stroke-width="1.6"/>
  <path d="M510 116.2h0.01M510 121h0.01M510 125.6h0.01" stroke-width="2.2"/>
 </g>
 <!-- map icon -->
 <g stroke="#1f2429" stroke-width="1.4">
  <path d="M557.4 123.5L554.6 120Q553.1 118.6 553.1 117.1A4.3 4.3 0 0 1 561.7 117.1Q561.7 118.6 560.2 120Z"/>
  <circle cx="557.4" cy="117.2" r="1.4"/>
  <path d="M552.3 120.3L550.7 120.8L549.6 127.4L555.1 126.1L559.8 127.6L564.8 126.1L563.6 118.4L562.3 118.9"/>
  <path d="M555.1 121.5V126.1M559.8 123.2V127.6"/>
 </g>
 <!-- pagination -->
 <g stroke="#8b8f95" stroke-width="1.6">
  <path d="M611 115.3L606.4 121L611 126.7M617.5 115.3L612.9 121L617.5 126.7"/>
  <path d="M643.8 115.3L638.4 121L643.8 126.7"/>
  <path d="M787.2 115.3L792.8 121L787.2 126.7"/>
 </g>
 <!-- refresh -->
 <g stroke="#2f3338" stroke-width="1.6">
  <path d="M675.8 115.3A6.6 6.6 0 0 0 665.6 122.3"/>
  <path d="M668.2 126.4A6.6 6.6 0 0 0 678.2 119.2"/>
  <path d="M664.4 121.4L666 123.8L668.4 122.3" stroke-width="1.5"/>
  <path d="M679.6 120.1L678 117.6L675.6 119.1" stroke-width="1.5"/>
 </g>
 <!-- checkmarks -->
 <path d="M25.3 174.9L29 178.4L34.7 172.6M25.3 242.9L29 246.4L34.7 240.6" stroke="#fff" stroke-width="2"/>
 <!-- image placeholder icon -->
 <g stroke="#3a3e44" stroke-width="1.5">
  <path d="M136.8 243.3V237Q136.8 230.6 143.2 230.6H147.6L155.9 238.4V240.4Q155.6 241.6 154.6 242.2Q152.6 241.4 150.7 243.2Q149.2 241.6 147.6 241.9Q146 241.6 144.3 243.3Q142.4 241.2 140.5 241.5Q138.8 241.8 136.8 243.3Z"/>
  <path d="M147.6 230.8V236.2Q147.6 238.3 149.7 238.3H155.7"/>
  <path d="M136.6 247.3Q138.5 245.6 140.7 245.6Q142.6 245.6 144.4 247.2Q145.9 245.8 147.5 245.8Q149.1 245.8 150.7 247Q153.4 245.4 156 245.6V249.6Q156 255.4 150.2 255.4H142.4Q136.6 255.4 136.6 249.6Z"/>
 </g>
<!-- row kebab -->
 <g fill="#1f2429" stroke="none">
  <circle cx="760.3" cy="237" r="1.4"/><circle cx="760.3" cy="242" r="1.4"/><circle cx="760.3" cy="247" r="1.4"/>
  <circle cx="1256.7" cy="24.5" r="1.5"/><circle cx="1256.7" cy="30" r="1.5"/><circle cx="1256.7" cy="35.5" r="1.5"/>
 </g>
 <!-- close -->
 <path d="M1295 25.3L1307 37.2M1307 25.3L1295 37.2" stroke="#1f2429" stroke-width="1.6"/>
 <!-- arrow down-right -->
 <path d="M1333.8 27.4L1343 36.2M1335.4 36.2H1343.2V28.4" stroke="#1f2429" stroke-width="1.6"/>
 <!-- expand -->
 <g stroke="#1f2429" stroke-width="2">
  <path d="M1339.6 126.2L1343.8 122M1340.4 121.6H1344.2V125.4"/>
  <path d="M1336.4 129.4L1332.2 133.6M1331.8 129.8V134H1335.6"/>
 </g>
<g stroke="#5b6d84" stroke-width="1.4"><path transform="translate(0 0)" d="M842.4 498.6L846.9 494.7L851.4 498.6M842.4 503.2L846.9 507.1L851.4 503.2"/><path transform="translate(160 0)" d="M842.4 498.6L846.9 494.7L851.4 498.6M842.4 503.2L846.9 507.1L851.4 503.2"/><path transform="translate(320 0)" d="M842.4 498.6L846.9 494.7L851.4 498.6M842.4 503.2L846.9 507.1L851.4 503.2"/><path transform="translate(0 63)" d="M842.4 498.6L846.9 494.7L851.4 498.6M842.4 503.2L846.9 507.1L851.4 503.2"/><path transform="translate(160 63)" d="M842.4 498.6L846.9 494.7L851.4 498.6M842.4 503.2L846.9 507.1L851.4 503.2"/></g>
<g stroke="#3a3e44" stroke-width="1"><circle cx="969.2" cy="498.6" r="2.2"/><circle cx="1129.2" cy="498.6" r="2.2"/><circle cx="1290" cy="498.6" r="2.2"/><circle cx="969.2" cy="561.7" r="2.2"/><circle cx="1129.2" cy="561.7" r="2.2"/></g>
<path d="M1334.8 623.6L1342.8 631.4M1342.8 623.6L1334.8 631.4" stroke="#8a8d92" stroke-width="1.3"/>
</svg>
</body></html>
